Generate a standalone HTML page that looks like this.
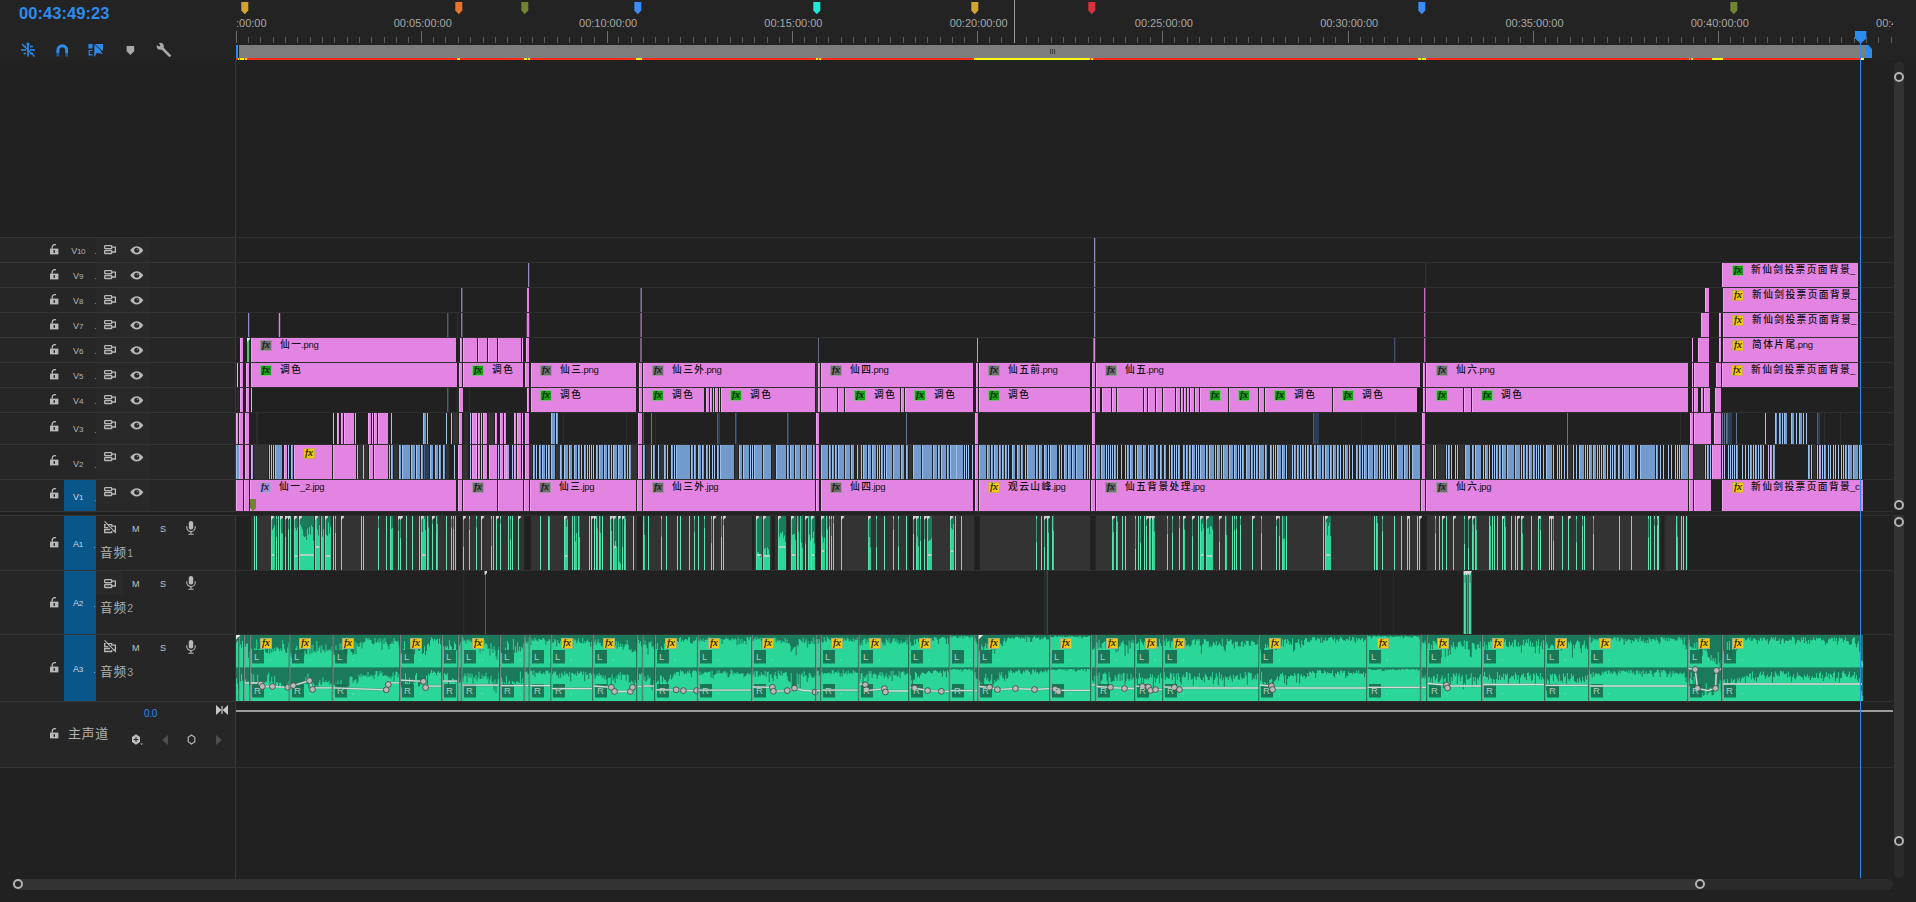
<!DOCTYPE html>
<html><head><meta charset="utf-8"><title>Timeline</title>
<style>
*{margin:0;padding:0;box-sizing:border-box}
html,body{width:1916px;height:902px;overflow:hidden;background:#212121}
body{font-family:"Liberation Sans","Noto Sans CJK SC",sans-serif;position:relative}
#w{position:absolute;left:0;top:0;width:1916px;height:902px;overflow:hidden;background:#212121}
#w div,#w span,#w svg{position:absolute}
.cl{font-size:9.7px;font-weight:500;color:#101010;letter-spacing:1.45px;white-space:nowrap;line-height:12px;overflow:hidden;height:13px}
#w .cl i{font-style:normal;font-size:9.5px;letter-spacing:-.3px;position:static;margin-left:-1.2px}
.fx{width:12px;height:11px;border:1px solid;overflow:hidden}
#w .fx span{left:-1px;top:-2px;width:12px;font:italic 11px/10px "Liberation Serif",serif;color:#0c0c0c;text-align:center;-webkit-text-stroke:.12px #0c0c0c}
.rl{font-size:11px;color:#a7a7a7;top:17px;line-height:12px;white-space:nowrap}
.hl{font-size:9px;color:#b9b9b9;white-space:nowrap;line-height:10px;letter-spacing:-.2px;text-align:center;width:24px}
.hn{font-size:12.6px;color:#b4b4b4;white-space:nowrap;line-height:14px;letter-spacing:1px}
.ms{font-size:9px;color:#c4c4c4;line-height:10px}
.lr{font-size:9.5px;line-height:10px;color:#a9cdbd}
</style></head><body><div id="w">
<div style="left:0px;top:0px;width:1916px;height:60px;background:#232323;"></div>
<div style="left:0px;top:237px;width:236px;height:531px;background:#262626;"></div>
<div style="left:96px;top:238px;width:54px;height:273px;background:#292929;"></div>
<div style="left:235px;top:60px;width:1px;height:819px;background:#383838;"></div>
<div style="left:0px;top:237px;width:1893px;height:1px;background:#2f2f2f;"></div>
<div style="left:0px;top:262px;width:1893px;height:1px;background:#2f2f2f;"></div>
<div style="left:0px;top:287px;width:1893px;height:1px;background:#2f2f2f;"></div>
<div style="left:0px;top:312px;width:1893px;height:1px;background:#2f2f2f;"></div>
<div style="left:0px;top:337px;width:1893px;height:1px;background:#2f2f2f;"></div>
<div style="left:0px;top:362px;width:1893px;height:1px;background:#2f2f2f;"></div>
<div style="left:0px;top:387px;width:1893px;height:1px;background:#2f2f2f;"></div>
<div style="left:0px;top:412px;width:1893px;height:1px;background:#2f2f2f;"></div>
<div style="left:0px;top:444px;width:1893px;height:1px;background:#2f2f2f;"></div>
<div style="left:0px;top:479px;width:1893px;height:1px;background:#2f2f2f;"></div>
<div style="left:0px;top:511px;width:1893px;height:1px;background:#2f2f2f;"></div>
<div style="left:0px;top:570px;width:1893px;height:1px;background:#2f2f2f;"></div>
<div style="left:0px;top:634px;width:1893px;height:1px;background:#2f2f2f;"></div>
<div style="left:0px;top:701px;width:1893px;height:1px;background:#2f2f2f;"></div>
<div style="left:0px;top:767px;width:1893px;height:1px;background:#2f2f2f;"></div>
<div style="left:0px;top:515px;width:1905px;height:1px;background:#2f2f2f;"></div>
<div style="left:0px;top:512px;width:1893px;height:3px;background:#222222;"></div>
<div style="left:0px;top:237px;width:235px;height:1px;background:#353535;"></div>
<div style="left:0px;top:262px;width:235px;height:1px;background:#353535;"></div>
<div style="left:0px;top:287px;width:235px;height:1px;background:#353535;"></div>
<div style="left:0px;top:312px;width:235px;height:1px;background:#353535;"></div>
<div style="left:0px;top:337px;width:235px;height:1px;background:#353535;"></div>
<div style="left:0px;top:362px;width:235px;height:1px;background:#353535;"></div>
<div style="left:0px;top:387px;width:235px;height:1px;background:#353535;"></div>
<div style="left:0px;top:412px;width:235px;height:1px;background:#353535;"></div>
<div style="left:0px;top:444px;width:235px;height:1px;background:#353535;"></div>
<div style="left:0px;top:479px;width:235px;height:1px;background:#353535;"></div>
<div style="left:0px;top:511px;width:235px;height:1px;background:#353535;"></div>
<div style="left:0px;top:515px;width:235px;height:1px;background:#353535;"></div>
<div style="left:0px;top:570px;width:235px;height:1px;background:#353535;"></div>
<div style="left:0px;top:634px;width:235px;height:1px;background:#353535;"></div>
<div style="left:0px;top:701px;width:235px;height:1px;background:#353535;"></div>
<div style="left:0px;top:767px;width:235px;height:1px;background:#353535;"></div>
<div style="left:19px;top:4px;font-size:16.5px;font-weight:bold;color:#2d8ceb;line-height:18px;letter-spacing:.06px;white-space:nowrap">00:43:49:23</div>
<svg style="left:20px;top:42px" width="16" height="16" viewBox="0 0 16 16"><g stroke="#2d8ceb" stroke-width="1.6" fill="none"><path d="M8 1.5V14.5"/><path d="M1 8H6M10 8H15"/><path d="M3.5 4.5H6M10 4.5H13"/><path d="M3.5 11.5H6M10 11.5H13"/></g><circle cx="8" cy="2" r="1.6" fill="#2d8ceb"/><path d="M2 2L14.5 14.5" stroke="#2d8ceb" stroke-width="1.1"/></svg>
<svg style="left:55.6px;top:43.6px" width="12.6" height="13" viewBox="0 0 12.6 13"><path d="M1.9 9V6.1a4.4 4.4 0 0 1 8.8 0V9" fill="none" stroke="#2d8ceb" stroke-width="3"/><rect x=".4" y="9" width="3" height="3.4" fill="#1b5a96"/><rect x="9.2" y="9" width="3" height="3.4" fill="#1b5a96"/></svg>
<svg style="left:88px;top:43px" width="16" height="15" viewBox="0 0 16 15"><rect x=".5" y="1" width="4" height="4.5" fill="#2d8ceb"/><path d="M4.5 7.5H1.2V11.8H4.5" fill="none" stroke="#2d8ceb" stroke-width="1.2"/><path d="M6.5 1H15V7.5H12L15 11L9 9.8L6.2 14.2Z" fill="#2d8ceb"/><path d="M6.5 1L15 9" stroke="#232323" stroke-width="1"/></svg>
<svg style="left:126px;top:45px" width="9" height="11" viewBox="0 0 9 11"><path d="M.6 1H8.2V6.2L4.4 10L.6 6.2Z" fill="#a8a8a8"/></svg>
<svg style="left:156px;top:42px" width="16" height="16" viewBox="0 0 16 16"><path d="M5.2 5.2L13.6 13.6" stroke="#a8a8a8" stroke-width="2.7" stroke-linecap="round"/><circle cx="4.3" cy="4.3" r="3.5" fill="#a8a8a8"/><path d="M4.2 4.4L.2 2.6L2.4 -.4Z" fill="#232323"/><path d="M3.6 3.7L1 1.2" stroke="#232323" stroke-width="2.2"/></svg>
<div style="left:236px;top:0;width:1657px;height:60px;overflow:hidden">
<div class="rl" style="left:-28.0px;width:59px;text-align:center">00:00:00:00</div>
<div style="left:0px;top:31px;width:1px;height:12px;background:#6e6e6e"></div>
<div style="left:12px;top:37px;width:1px;height:6px;background:#5c5c5c"></div>
<div style="left:24px;top:37px;width:1px;height:6px;background:#5c5c5c"></div>
<div style="left:37px;top:37px;width:1px;height:6px;background:#5c5c5c"></div>
<div style="left:49px;top:37px;width:1px;height:6px;background:#5c5c5c"></div>
<div style="left:61px;top:37px;width:1px;height:6px;background:#5c5c5c"></div>
<div style="left:74px;top:37px;width:1px;height:6px;background:#5c5c5c"></div>
<div style="left:86px;top:37px;width:1px;height:6px;background:#5c5c5c"></div>
<div style="left:98px;top:37px;width:1px;height:6px;background:#5c5c5c"></div>
<div style="left:111px;top:37px;width:1px;height:6px;background:#5c5c5c"></div>
<div style="left:123px;top:37px;width:1px;height:6px;background:#5c5c5c"></div>
<div style="left:135px;top:37px;width:1px;height:6px;background:#5c5c5c"></div>
<div style="left:148px;top:37px;width:1px;height:6px;background:#5c5c5c"></div>
<div style="left:160px;top:37px;width:1px;height:6px;background:#5c5c5c"></div>
<div style="left:172px;top:37px;width:1px;height:6px;background:#5c5c5c"></div>
<div class="rl" style="left:157.3px;width:59px;text-align:center">00:05:00:00</div>
<div style="left:185px;top:31px;width:1px;height:12px;background:#6e6e6e"></div>
<div style="left:197px;top:37px;width:1px;height:6px;background:#5c5c5c"></div>
<div style="left:209px;top:37px;width:1px;height:6px;background:#5c5c5c"></div>
<div style="left:222px;top:37px;width:1px;height:6px;background:#5c5c5c"></div>
<div style="left:234px;top:37px;width:1px;height:6px;background:#5c5c5c"></div>
<div style="left:247px;top:37px;width:1px;height:6px;background:#5c5c5c"></div>
<div style="left:259px;top:37px;width:1px;height:6px;background:#5c5c5c"></div>
<div style="left:271px;top:37px;width:1px;height:6px;background:#5c5c5c"></div>
<div style="left:284px;top:37px;width:1px;height:6px;background:#5c5c5c"></div>
<div style="left:296px;top:37px;width:1px;height:6px;background:#5c5c5c"></div>
<div style="left:308px;top:37px;width:1px;height:6px;background:#5c5c5c"></div>
<div style="left:321px;top:37px;width:1px;height:6px;background:#5c5c5c"></div>
<div style="left:333px;top:37px;width:1px;height:6px;background:#5c5c5c"></div>
<div style="left:345px;top:37px;width:1px;height:6px;background:#5c5c5c"></div>
<div style="left:358px;top:37px;width:1px;height:6px;background:#5c5c5c"></div>
<div class="rl" style="left:342.6px;width:59px;text-align:center">00:10:00:00</div>
<div style="left:371px;top:31px;width:1px;height:12px;background:#6e6e6e"></div>
<div style="left:382px;top:37px;width:1px;height:6px;background:#5c5c5c"></div>
<div style="left:395px;top:37px;width:1px;height:6px;background:#5c5c5c"></div>
<div style="left:407px;top:37px;width:1px;height:6px;background:#5c5c5c"></div>
<div style="left:419px;top:37px;width:1px;height:6px;background:#5c5c5c"></div>
<div style="left:432px;top:37px;width:1px;height:6px;background:#5c5c5c"></div>
<div style="left:444px;top:37px;width:1px;height:6px;background:#5c5c5c"></div>
<div style="left:457px;top:37px;width:1px;height:6px;background:#5c5c5c"></div>
<div style="left:469px;top:37px;width:1px;height:6px;background:#5c5c5c"></div>
<div style="left:481px;top:37px;width:1px;height:6px;background:#5c5c5c"></div>
<div style="left:494px;top:37px;width:1px;height:6px;background:#5c5c5c"></div>
<div style="left:506px;top:37px;width:1px;height:6px;background:#5c5c5c"></div>
<div style="left:518px;top:37px;width:1px;height:6px;background:#5c5c5c"></div>
<div style="left:531px;top:37px;width:1px;height:6px;background:#5c5c5c"></div>
<div style="left:543px;top:37px;width:1px;height:6px;background:#5c5c5c"></div>
<div class="rl" style="left:527.9px;width:59px;text-align:center">00:15:00:00</div>
<div style="left:556px;top:31px;width:1px;height:12px;background:#6e6e6e"></div>
<div style="left:568px;top:37px;width:1px;height:6px;background:#5c5c5c"></div>
<div style="left:580px;top:37px;width:1px;height:6px;background:#5c5c5c"></div>
<div style="left:592px;top:37px;width:1px;height:6px;background:#5c5c5c"></div>
<div style="left:605px;top:37px;width:1px;height:6px;background:#5c5c5c"></div>
<div style="left:617px;top:37px;width:1px;height:6px;background:#5c5c5c"></div>
<div style="left:629px;top:37px;width:1px;height:6px;background:#5c5c5c"></div>
<div style="left:642px;top:37px;width:1px;height:6px;background:#5c5c5c"></div>
<div style="left:654px;top:37px;width:1px;height:6px;background:#5c5c5c"></div>
<div style="left:667px;top:37px;width:1px;height:6px;background:#5c5c5c"></div>
<div style="left:679px;top:37px;width:1px;height:6px;background:#5c5c5c"></div>
<div style="left:691px;top:37px;width:1px;height:6px;background:#5c5c5c"></div>
<div style="left:704px;top:37px;width:1px;height:6px;background:#5c5c5c"></div>
<div style="left:716px;top:37px;width:1px;height:6px;background:#5c5c5c"></div>
<div style="left:728px;top:37px;width:1px;height:6px;background:#5c5c5c"></div>
<div class="rl" style="left:713.2px;width:59px;text-align:center">00:20:00:00</div>
<div style="left:741px;top:31px;width:1px;height:12px;background:#6e6e6e"></div>
<div style="left:753px;top:37px;width:1px;height:6px;background:#5c5c5c"></div>
<div style="left:765px;top:37px;width:1px;height:6px;background:#5c5c5c"></div>
<div style="left:778px;top:37px;width:1px;height:6px;background:#5c5c5c"></div>
<div style="left:790px;top:37px;width:1px;height:6px;background:#5c5c5c"></div>
<div style="left:802px;top:37px;width:1px;height:6px;background:#5c5c5c"></div>
<div style="left:815px;top:37px;width:1px;height:6px;background:#5c5c5c"></div>
<div style="left:827px;top:37px;width:1px;height:6px;background:#5c5c5c"></div>
<div style="left:839px;top:37px;width:1px;height:6px;background:#5c5c5c"></div>
<div style="left:852px;top:37px;width:1px;height:6px;background:#5c5c5c"></div>
<div style="left:864px;top:37px;width:1px;height:6px;background:#5c5c5c"></div>
<div style="left:877px;top:37px;width:1px;height:6px;background:#5c5c5c"></div>
<div style="left:889px;top:37px;width:1px;height:6px;background:#5c5c5c"></div>
<div style="left:901px;top:37px;width:1px;height:6px;background:#5c5c5c"></div>
<div style="left:914px;top:37px;width:1px;height:6px;background:#5c5c5c"></div>
<div class="rl" style="left:898.4px;width:59px;text-align:center">00:25:00:00</div>
<div style="left:926px;top:31px;width:1px;height:12px;background:#6e6e6e"></div>
<div style="left:938px;top:37px;width:1px;height:6px;background:#5c5c5c"></div>
<div style="left:951px;top:37px;width:1px;height:6px;background:#5c5c5c"></div>
<div style="left:963px;top:37px;width:1px;height:6px;background:#5c5c5c"></div>
<div style="left:975px;top:37px;width:1px;height:6px;background:#5c5c5c"></div>
<div style="left:988px;top:37px;width:1px;height:6px;background:#5c5c5c"></div>
<div style="left:1000px;top:37px;width:1px;height:6px;background:#5c5c5c"></div>
<div style="left:1012px;top:37px;width:1px;height:6px;background:#5c5c5c"></div>
<div style="left:1025px;top:37px;width:1px;height:6px;background:#5c5c5c"></div>
<div style="left:1037px;top:37px;width:1px;height:6px;background:#5c5c5c"></div>
<div style="left:1049px;top:37px;width:1px;height:6px;background:#5c5c5c"></div>
<div style="left:1062px;top:37px;width:1px;height:6px;background:#5c5c5c"></div>
<div style="left:1074px;top:37px;width:1px;height:6px;background:#5c5c5c"></div>
<div style="left:1087px;top:37px;width:1px;height:6px;background:#5c5c5c"></div>
<div style="left:1099px;top:37px;width:1px;height:6px;background:#5c5c5c"></div>
<div class="rl" style="left:1083.7px;width:59px;text-align:center">00:30:00:00</div>
<div style="left:1112px;top:31px;width:1px;height:12px;background:#6e6e6e"></div>
<div style="left:1124px;top:37px;width:1px;height:6px;background:#5c5c5c"></div>
<div style="left:1136px;top:37px;width:1px;height:6px;background:#5c5c5c"></div>
<div style="left:1148px;top:37px;width:1px;height:6px;background:#5c5c5c"></div>
<div style="left:1161px;top:37px;width:1px;height:6px;background:#5c5c5c"></div>
<div style="left:1173px;top:37px;width:1px;height:6px;background:#5c5c5c"></div>
<div style="left:1185px;top:37px;width:1px;height:6px;background:#5c5c5c"></div>
<div style="left:1198px;top:37px;width:1px;height:6px;background:#5c5c5c"></div>
<div style="left:1210px;top:37px;width:1px;height:6px;background:#5c5c5c"></div>
<div style="left:1222px;top:37px;width:1px;height:6px;background:#5c5c5c"></div>
<div style="left:1235px;top:37px;width:1px;height:6px;background:#5c5c5c"></div>
<div style="left:1247px;top:37px;width:1px;height:6px;background:#5c5c5c"></div>
<div style="left:1259px;top:37px;width:1px;height:6px;background:#5c5c5c"></div>
<div style="left:1272px;top:37px;width:1px;height:6px;background:#5c5c5c"></div>
<div style="left:1284px;top:37px;width:1px;height:6px;background:#5c5c5c"></div>
<div class="rl" style="left:1269.0px;width:59px;text-align:center">00:35:00:00</div>
<div style="left:1297px;top:31px;width:1px;height:12px;background:#6e6e6e"></div>
<div style="left:1309px;top:37px;width:1px;height:6px;background:#5c5c5c"></div>
<div style="left:1321px;top:37px;width:1px;height:6px;background:#5c5c5c"></div>
<div style="left:1334px;top:37px;width:1px;height:6px;background:#5c5c5c"></div>
<div style="left:1346px;top:37px;width:1px;height:6px;background:#5c5c5c"></div>
<div style="left:1358px;top:37px;width:1px;height:6px;background:#5c5c5c"></div>
<div style="left:1371px;top:37px;width:1px;height:6px;background:#5c5c5c"></div>
<div style="left:1383px;top:37px;width:1px;height:6px;background:#5c5c5c"></div>
<div style="left:1395px;top:37px;width:1px;height:6px;background:#5c5c5c"></div>
<div style="left:1408px;top:37px;width:1px;height:6px;background:#5c5c5c"></div>
<div style="left:1420px;top:37px;width:1px;height:6px;background:#5c5c5c"></div>
<div style="left:1432px;top:37px;width:1px;height:6px;background:#5c5c5c"></div>
<div style="left:1445px;top:37px;width:1px;height:6px;background:#5c5c5c"></div>
<div style="left:1457px;top:37px;width:1px;height:6px;background:#5c5c5c"></div>
<div style="left:1469px;top:37px;width:1px;height:6px;background:#5c5c5c"></div>
<div class="rl" style="left:1454.3px;width:59px;text-align:center">00:40:00:00</div>
<div style="left:1482px;top:31px;width:1px;height:12px;background:#6e6e6e"></div>
<div style="left:1494px;top:37px;width:1px;height:6px;background:#5c5c5c"></div>
<div style="left:1507px;top:37px;width:1px;height:6px;background:#5c5c5c"></div>
<div style="left:1519px;top:37px;width:1px;height:6px;background:#5c5c5c"></div>
<div style="left:1531px;top:37px;width:1px;height:6px;background:#5c5c5c"></div>
<div style="left:1544px;top:37px;width:1px;height:6px;background:#5c5c5c"></div>
<div style="left:1556px;top:37px;width:1px;height:6px;background:#5c5c5c"></div>
<div style="left:1568px;top:37px;width:1px;height:6px;background:#5c5c5c"></div>
<div style="left:1581px;top:37px;width:1px;height:6px;background:#5c5c5c"></div>
<div style="left:1593px;top:37px;width:1px;height:6px;background:#5c5c5c"></div>
<div style="left:1605px;top:37px;width:1px;height:6px;background:#5c5c5c"></div>
<div style="left:1618px;top:37px;width:1px;height:6px;background:#5c5c5c"></div>
<div style="left:1630px;top:37px;width:1px;height:6px;background:#5c5c5c"></div>
<div style="left:1642px;top:37px;width:1px;height:6px;background:#5c5c5c"></div>
<div style="left:1655px;top:37px;width:1px;height:6px;background:#5c5c5c"></div>
<div class="rl" style="left:1639.6px;width:59px;text-align:center">00:45:00:00</div>
<div style="left:1668px;top:31px;width:1px;height:12px;background:#6e6e6e"></div>
<div style="left:1679px;top:37px;width:1px;height:6px;background:#5c5c5c"></div>
<div style="left:1692px;top:37px;width:1px;height:6px;background:#5c5c5c"></div>
<div style="left:1704px;top:37px;width:1px;height:6px;background:#5c5c5c"></div>
<div style="left:1717px;top:37px;width:1px;height:6px;background:#5c5c5c"></div>
<div style="left:1729px;top:37px;width:1px;height:6px;background:#5c5c5c"></div>
<div style="left:1741px;top:37px;width:1px;height:6px;background:#5c5c5c"></div>
<div style="left:1754px;top:37px;width:1px;height:6px;background:#5c5c5c"></div>
<div style="left:1766px;top:37px;width:1px;height:6px;background:#5c5c5c"></div>
<div style="left:1778px;top:37px;width:1px;height:6px;background:#5c5c5c"></div>
<div style="left:1791px;top:37px;width:1px;height:6px;background:#5c5c5c"></div>
<div style="left:1803px;top:37px;width:1px;height:6px;background:#5c5c5c"></div>
<div style="left:1815px;top:37px;width:1px;height:6px;background:#5c5c5c"></div>
<div style="left:1828px;top:37px;width:1px;height:6px;background:#5c5c5c"></div>
<div style="left:1840px;top:37px;width:1px;height:6px;background:#5c5c5c"></div>
</div>
<svg style="left:241px;top:2px" width="8" height="13" viewBox="0 0 8 13"><path d="M.3 0H7.3V8.6L3.8 12.3L.3 8.6Z" fill="#d4a32e"/></svg>
<svg style="left:455px;top:2px" width="8" height="13" viewBox="0 0 8 13"><path d="M.3 0H7.3V8.6L3.8 12.3L.3 8.6Z" fill="#e8732a"/></svg>
<svg style="left:521px;top:2px" width="8" height="13" viewBox="0 0 8 13"><path d="M.3 0H7.3V8.6L3.8 12.3L.3 8.6Z" fill="#71842f"/></svg>
<svg style="left:634px;top:2px" width="8" height="13" viewBox="0 0 8 13"><path d="M.3 0H7.3V8.6L3.8 12.3L.3 8.6Z" fill="#3d8cf5"/></svg>
<svg style="left:813px;top:2px" width="8" height="13" viewBox="0 0 8 13"><path d="M.3 0H7.3V8.6L3.8 12.3L.3 8.6Z" fill="#1ee8d6"/></svg>
<svg style="left:971px;top:2px" width="8" height="13" viewBox="0 0 8 13"><path d="M.3 0H7.3V8.6L3.8 12.3L.3 8.6Z" fill="#d4a32e"/></svg>
<svg style="left:1088px;top:2px" width="8" height="13" viewBox="0 0 8 13"><path d="M.3 0H7.3V8.6L3.8 12.3L.3 8.6Z" fill="#d9303e"/></svg>
<svg style="left:1418px;top:2px" width="8" height="13" viewBox="0 0 8 13"><path d="M.3 0H7.3V8.6L3.8 12.3L.3 8.6Z" fill="#3d8cf5"/></svg>
<svg style="left:1730px;top:2px" width="8" height="13" viewBox="0 0 8 13"><path d="M.3 0H7.3V8.6L3.8 12.3L.3 8.6Z" fill="#71842f"/></svg>
<div style="left:1014px;top:0px;width:1px;height:43px;background:#9a9a9a;"></div>
<div style="left:239px;top:45px;width:1627px;height:13px;background:#7d7d7d;"></div>
<div style="left:238px;top:45px;width:1px;height:13px;background:#1c1c1c;"></div>
<div style="left:236px;top:45px;width:2px;height:13px;background:#2d8ceb;"></div>
<svg style="left:1866px;top:45px" width="7" height="13" viewBox="0 0 7 13"><path d="M0 0H2.5L6 4V13H0Z" fill="#2d8ceb"/></svg>
<div style="left:1050px;top:49px;width:1px;height:5px;background:#3a3a3a;"></div>
<div style="left:1052px;top:49px;width:1px;height:5px;background:#3a3a3a;"></div>
<div style="left:1054px;top:49px;width:1px;height:5px;background:#3a3a3a;"></div>
<div style="left:236px;top:58px;width:1628px;height:2px;background:#fb2b17;"></div>
<div style="left:238px;top:58px;width:1px;height:2px;background:#fbfb10;"></div>
<div style="left:240px;top:58px;width:4px;height:2px;background:#fbfb10;"></div>
<div style="left:245px;top:58px;width:2px;height:2px;background:#fbfb10;"></div>
<div style="left:457px;top:58px;width:3px;height:2px;background:#fbfb10;"></div>
<div style="left:524px;top:58px;width:3px;height:2px;background:#fbfb10;"></div>
<div style="left:528px;top:58px;width:2px;height:2px;background:#fbfb10;"></div>
<div style="left:636px;top:58px;width:6px;height:2px;background:#fbfb10;"></div>
<div style="left:816px;top:58px;width:2px;height:2px;background:#fbfb10;"></div>
<div style="left:819px;top:58px;width:2px;height:2px;background:#fbfb10;"></div>
<div style="left:974px;top:58px;width:116px;height:2px;background:#fbfb10;"></div>
<div style="left:1091px;top:58px;width:2px;height:2px;background:#fbfb10;"></div>
<div style="left:1418px;top:58px;width:3px;height:2px;background:#fbfb10;"></div>
<div style="left:1422px;top:58px;width:4px;height:2px;background:#fbfb10;"></div>
<div style="left:1689px;top:58px;width:1px;height:2px;background:#fbfb10;"></div>
<div style="left:1691px;top:58px;width:2px;height:2px;background:#fbfb10;"></div>
<div style="left:1712px;top:58px;width:11px;height:2px;background:#fbfb10;"></div>
<div style="left:1861px;top:58px;width:3px;height:2px;background:#fbfb10;"></div>
<div style="left:64px;top:480px;width:32px;height:31px;background:#08568a;"></div>
<div style="left:64px;top:516px;width:32px;height:54px;background:#08568a;"></div>
<div style="left:64px;top:571px;width:32px;height:63px;background:#08568a;"></div>
<div style="left:64px;top:635px;width:32px;height:66px;background:#08568a;"></div>
<svg style="left:50px;top:244px" width="9" height="11" viewBox="0 0 9 11"><path d="M0 4.6H8.4V10.4H0Z" fill="#b9b9b9"/><path d="M2.2 4.8V3.2C2.2 1 4.6 .1 6 .9" fill="none" stroke="#b9b9b9" stroke-width="1.3"/><rect x="3.5" y="6.2" width="1.5" height="2.6" fill="#262626"/></svg>
<div class="hl" style="left:66px;top:246px;color:#b4b4b4"><span style="position:static;font-size:9px">V</span><span style="position:static;font-size:8px;letter-spacing:-.5px">10</span></div>
<svg style="left:104px;top:245px" width="13" height="10" viewBox="0 0 13 10"><g fill="none" stroke="#b9b9b9" stroke-width="1.3"><rect x=".7" y=".7" width="7" height="3" rx=".6"/><rect x=".7" y="5.5" width="7" height="3" rx=".6"/><path d="M7.7 2.2H11.4V7H7.7"/></g></svg>
<svg style="left:130px;top:246px" width="13.5" height="8.7" viewBox="0 0 14 9"><path d="M.2 4.5C2.3 1.4 4.6 .2 7 .2S11.7 1.4 13.8 4.5C11.7 7.6 9.4 8.8 7 8.8S2.3 7.6 .2 4.5Z" fill="#b9b9b9"/><circle cx="7" cy="4.3" r="2.6" fill="#262626"/><circle cx="7.8" cy="3.5" r=".8" fill="#8a8a8a"/></svg>
<div style="left:95px;top:253px;width:1px;height:1px;background:#4a7fb5;"></div>
<svg style="left:50px;top:269px" width="9" height="11" viewBox="0 0 9 11"><path d="M0 4.6H8.4V10.4H0Z" fill="#b9b9b9"/><path d="M2.2 4.8V3.2C2.2 1 4.6 .1 6 .9" fill="none" stroke="#b9b9b9" stroke-width="1.3"/><rect x="3.5" y="6.2" width="1.5" height="2.6" fill="#262626"/></svg>
<div class="hl" style="left:66px;top:271px;color:#b4b4b4"><span style="position:static;font-size:9px">V</span><span style="position:static;font-size:8px;letter-spacing:-.5px">9</span></div>
<svg style="left:104px;top:270px" width="13" height="10" viewBox="0 0 13 10"><g fill="none" stroke="#b9b9b9" stroke-width="1.3"><rect x=".7" y=".7" width="7" height="3" rx=".6"/><rect x=".7" y="5.5" width="7" height="3" rx=".6"/><path d="M7.7 2.2H11.4V7H7.7"/></g></svg>
<svg style="left:130px;top:271px" width="13.5" height="8.7" viewBox="0 0 14 9"><path d="M.2 4.5C2.3 1.4 4.6 .2 7 .2S11.7 1.4 13.8 4.5C11.7 7.6 9.4 8.8 7 8.8S2.3 7.6 .2 4.5Z" fill="#b9b9b9"/><circle cx="7" cy="4.3" r="2.6" fill="#262626"/><circle cx="7.8" cy="3.5" r=".8" fill="#8a8a8a"/></svg>
<div style="left:95px;top:278px;width:1px;height:1px;background:#4a7fb5;"></div>
<svg style="left:50px;top:294px" width="9" height="11" viewBox="0 0 9 11"><path d="M0 4.6H8.4V10.4H0Z" fill="#b9b9b9"/><path d="M2.2 4.8V3.2C2.2 1 4.6 .1 6 .9" fill="none" stroke="#b9b9b9" stroke-width="1.3"/><rect x="3.5" y="6.2" width="1.5" height="2.6" fill="#262626"/></svg>
<div class="hl" style="left:66px;top:296px;color:#b4b4b4"><span style="position:static;font-size:9px">V</span><span style="position:static;font-size:8px;letter-spacing:-.5px">8</span></div>
<svg style="left:104px;top:295px" width="13" height="10" viewBox="0 0 13 10"><g fill="none" stroke="#b9b9b9" stroke-width="1.3"><rect x=".7" y=".7" width="7" height="3" rx=".6"/><rect x=".7" y="5.5" width="7" height="3" rx=".6"/><path d="M7.7 2.2H11.4V7H7.7"/></g></svg>
<svg style="left:130px;top:296px" width="13.5" height="8.7" viewBox="0 0 14 9"><path d="M.2 4.5C2.3 1.4 4.6 .2 7 .2S11.7 1.4 13.8 4.5C11.7 7.6 9.4 8.8 7 8.8S2.3 7.6 .2 4.5Z" fill="#b9b9b9"/><circle cx="7" cy="4.3" r="2.6" fill="#262626"/><circle cx="7.8" cy="3.5" r=".8" fill="#8a8a8a"/></svg>
<div style="left:95px;top:303px;width:1px;height:1px;background:#4a7fb5;"></div>
<svg style="left:50px;top:319px" width="9" height="11" viewBox="0 0 9 11"><path d="M0 4.6H8.4V10.4H0Z" fill="#b9b9b9"/><path d="M2.2 4.8V3.2C2.2 1 4.6 .1 6 .9" fill="none" stroke="#b9b9b9" stroke-width="1.3"/><rect x="3.5" y="6.2" width="1.5" height="2.6" fill="#262626"/></svg>
<div class="hl" style="left:66px;top:321px;color:#b4b4b4"><span style="position:static;font-size:9px">V</span><span style="position:static;font-size:8px;letter-spacing:-.5px">7</span></div>
<svg style="left:104px;top:320px" width="13" height="10" viewBox="0 0 13 10"><g fill="none" stroke="#b9b9b9" stroke-width="1.3"><rect x=".7" y=".7" width="7" height="3" rx=".6"/><rect x=".7" y="5.5" width="7" height="3" rx=".6"/><path d="M7.7 2.2H11.4V7H7.7"/></g></svg>
<svg style="left:130px;top:321px" width="13.5" height="8.7" viewBox="0 0 14 9"><path d="M.2 4.5C2.3 1.4 4.6 .2 7 .2S11.7 1.4 13.8 4.5C11.7 7.6 9.4 8.8 7 8.8S2.3 7.6 .2 4.5Z" fill="#b9b9b9"/><circle cx="7" cy="4.3" r="2.6" fill="#262626"/><circle cx="7.8" cy="3.5" r=".8" fill="#8a8a8a"/></svg>
<div style="left:95px;top:328px;width:1px;height:1px;background:#4a7fb5;"></div>
<svg style="left:50px;top:344px" width="9" height="11" viewBox="0 0 9 11"><path d="M0 4.6H8.4V10.4H0Z" fill="#b9b9b9"/><path d="M2.2 4.8V3.2C2.2 1 4.6 .1 6 .9" fill="none" stroke="#b9b9b9" stroke-width="1.3"/><rect x="3.5" y="6.2" width="1.5" height="2.6" fill="#262626"/></svg>
<div class="hl" style="left:66px;top:346px;color:#b4b4b4"><span style="position:static;font-size:9px">V</span><span style="position:static;font-size:8px;letter-spacing:-.5px">6</span></div>
<svg style="left:104px;top:345px" width="13" height="10" viewBox="0 0 13 10"><g fill="none" stroke="#b9b9b9" stroke-width="1.3"><rect x=".7" y=".7" width="7" height="3" rx=".6"/><rect x=".7" y="5.5" width="7" height="3" rx=".6"/><path d="M7.7 2.2H11.4V7H7.7"/></g></svg>
<svg style="left:130px;top:346px" width="13.5" height="8.7" viewBox="0 0 14 9"><path d="M.2 4.5C2.3 1.4 4.6 .2 7 .2S11.7 1.4 13.8 4.5C11.7 7.6 9.4 8.8 7 8.8S2.3 7.6 .2 4.5Z" fill="#b9b9b9"/><circle cx="7" cy="4.3" r="2.6" fill="#262626"/><circle cx="7.8" cy="3.5" r=".8" fill="#8a8a8a"/></svg>
<div style="left:95px;top:353px;width:1px;height:1px;background:#4a7fb5;"></div>
<svg style="left:50px;top:369px" width="9" height="11" viewBox="0 0 9 11"><path d="M0 4.6H8.4V10.4H0Z" fill="#b9b9b9"/><path d="M2.2 4.8V3.2C2.2 1 4.6 .1 6 .9" fill="none" stroke="#b9b9b9" stroke-width="1.3"/><rect x="3.5" y="6.2" width="1.5" height="2.6" fill="#262626"/></svg>
<div class="hl" style="left:66px;top:371px;color:#b4b4b4"><span style="position:static;font-size:9px">V</span><span style="position:static;font-size:8px;letter-spacing:-.5px">5</span></div>
<svg style="left:104px;top:370px" width="13" height="10" viewBox="0 0 13 10"><g fill="none" stroke="#b9b9b9" stroke-width="1.3"><rect x=".7" y=".7" width="7" height="3" rx=".6"/><rect x=".7" y="5.5" width="7" height="3" rx=".6"/><path d="M7.7 2.2H11.4V7H7.7"/></g></svg>
<svg style="left:130px;top:371px" width="13.5" height="8.7" viewBox="0 0 14 9"><path d="M.2 4.5C2.3 1.4 4.6 .2 7 .2S11.7 1.4 13.8 4.5C11.7 7.6 9.4 8.8 7 8.8S2.3 7.6 .2 4.5Z" fill="#b9b9b9"/><circle cx="7" cy="4.3" r="2.6" fill="#262626"/><circle cx="7.8" cy="3.5" r=".8" fill="#8a8a8a"/></svg>
<div style="left:95px;top:378px;width:1px;height:1px;background:#4a7fb5;"></div>
<svg style="left:50px;top:394px" width="9" height="11" viewBox="0 0 9 11"><path d="M0 4.6H8.4V10.4H0Z" fill="#b9b9b9"/><path d="M2.2 4.8V3.2C2.2 1 4.6 .1 6 .9" fill="none" stroke="#b9b9b9" stroke-width="1.3"/><rect x="3.5" y="6.2" width="1.5" height="2.6" fill="#262626"/></svg>
<div class="hl" style="left:66px;top:396px;color:#b4b4b4"><span style="position:static;font-size:9px">V</span><span style="position:static;font-size:8px;letter-spacing:-.5px">4</span></div>
<svg style="left:104px;top:395px" width="13" height="10" viewBox="0 0 13 10"><g fill="none" stroke="#b9b9b9" stroke-width="1.3"><rect x=".7" y=".7" width="7" height="3" rx=".6"/><rect x=".7" y="5.5" width="7" height="3" rx=".6"/><path d="M7.7 2.2H11.4V7H7.7"/></g></svg>
<svg style="left:130px;top:396px" width="13.5" height="8.7" viewBox="0 0 14 9"><path d="M.2 4.5C2.3 1.4 4.6 .2 7 .2S11.7 1.4 13.8 4.5C11.7 7.6 9.4 8.8 7 8.8S2.3 7.6 .2 4.5Z" fill="#b9b9b9"/><circle cx="7" cy="4.3" r="2.6" fill="#262626"/><circle cx="7.8" cy="3.5" r=".8" fill="#8a8a8a"/></svg>
<div style="left:95px;top:403px;width:1px;height:1px;background:#4a7fb5;"></div>
<svg style="left:50px;top:421px" width="9" height="11" viewBox="0 0 9 11"><path d="M0 4.6H8.4V10.4H0Z" fill="#b9b9b9"/><path d="M2.2 4.8V3.2C2.2 1 4.6 .1 6 .9" fill="none" stroke="#b9b9b9" stroke-width="1.3"/><rect x="3.5" y="6.2" width="1.5" height="2.6" fill="#262626"/></svg>
<div class="hl" style="left:66px;top:424px;color:#b4b4b4"><span style="position:static;font-size:9px">V</span><span style="position:static;font-size:8px;letter-spacing:-.5px">3</span></div>
<svg style="left:104px;top:420px" width="13" height="10" viewBox="0 0 13 10"><g fill="none" stroke="#b9b9b9" stroke-width="1.3"><rect x=".7" y=".7" width="7" height="3" rx=".6"/><rect x=".7" y="5.5" width="7" height="3" rx=".6"/><path d="M7.7 2.2H11.4V7H7.7"/></g></svg>
<svg style="left:130px;top:421px" width="13.5" height="8.7" viewBox="0 0 14 9"><path d="M.2 4.5C2.3 1.4 4.6 .2 7 .2S11.7 1.4 13.8 4.5C11.7 7.6 9.4 8.8 7 8.8S2.3 7.6 .2 4.5Z" fill="#b9b9b9"/><circle cx="7" cy="4.3" r="2.6" fill="#262626"/><circle cx="7.8" cy="3.5" r=".8" fill="#8a8a8a"/></svg>
<div style="left:95px;top:432px;width:1px;height:1px;background:#4a7fb5;"></div>
<svg style="left:50px;top:455px" width="9" height="11" viewBox="0 0 9 11"><path d="M0 4.6H8.4V10.4H0Z" fill="#b9b9b9"/><path d="M2.2 4.8V3.2C2.2 1 4.6 .1 6 .9" fill="none" stroke="#b9b9b9" stroke-width="1.3"/><rect x="3.5" y="6.2" width="1.5" height="2.6" fill="#262626"/></svg>
<div class="hl" style="left:66px;top:459px;color:#b4b4b4"><span style="position:static;font-size:9px">V</span><span style="position:static;font-size:8px;letter-spacing:-.5px">2</span></div>
<svg style="left:104px;top:452px" width="13" height="10" viewBox="0 0 13 10"><g fill="none" stroke="#b9b9b9" stroke-width="1.3"><rect x=".7" y=".7" width="7" height="3" rx=".6"/><rect x=".7" y="5.5" width="7" height="3" rx=".6"/><path d="M7.7 2.2H11.4V7H7.7"/></g></svg>
<svg style="left:130px;top:453px" width="13.5" height="8.7" viewBox="0 0 14 9"><path d="M.2 4.5C2.3 1.4 4.6 .2 7 .2S11.7 1.4 13.8 4.5C11.7 7.6 9.4 8.8 7 8.8S2.3 7.6 .2 4.5Z" fill="#b9b9b9"/><circle cx="7" cy="4.3" r="2.6" fill="#262626"/><circle cx="7.8" cy="3.5" r=".8" fill="#8a8a8a"/></svg>
<div style="left:95px;top:467px;width:1px;height:1px;background:#4a7fb5;"></div>
<svg style="left:50px;top:488px" width="9" height="11" viewBox="0 0 9 11"><path d="M0 4.6H8.4V10.4H0Z" fill="#b9b9b9"/><path d="M2.2 4.8V3.2C2.2 1 4.6 .1 6 .9" fill="none" stroke="#b9b9b9" stroke-width="1.3"/><rect x="3.5" y="6.2" width="1.5" height="2.6" fill="#262626"/></svg>
<div class="hl" style="left:66px;top:492px;color:#d0dae4"><span style="position:static;font-size:9px">V</span><span style="position:static;font-size:8px;letter-spacing:-.5px">1</span></div>
<svg style="left:104px;top:487px" width="13" height="10" viewBox="0 0 13 10"><g fill="none" stroke="#b9b9b9" stroke-width="1.3"><rect x=".7" y=".7" width="7" height="3" rx=".6"/><rect x=".7" y="5.5" width="7" height="3" rx=".6"/><path d="M7.7 2.2H11.4V7H7.7"/></g></svg>
<svg style="left:130px;top:488px" width="13.5" height="8.7" viewBox="0 0 14 9"><path d="M.2 4.5C2.3 1.4 4.6 .2 7 .2S11.7 1.4 13.8 4.5C11.7 7.6 9.4 8.8 7 8.8S2.3 7.6 .2 4.5Z" fill="#b9b9b9"/><circle cx="7" cy="4.3" r="2.6" fill="#262626"/><circle cx="7.8" cy="3.5" r=".8" fill="#8a8a8a"/></svg>
<div style="left:95px;top:500px;width:1px;height:1px;background:#4a7fb5;"></div>
<div style="left:96px;top:571px;width:27px;height:24px;background:#292929;"></div>
<svg style="left:50px;top:537px" width="9" height="11" viewBox="0 0 9 11"><path d="M0 4.6H8.4V10.4H0Z" fill="#b9b9b9"/><path d="M2.2 4.8V3.2C2.2 1 4.6 .1 6 .9" fill="none" stroke="#b9b9b9" stroke-width="1.3"/><rect x="3.5" y="6.2" width="1.5" height="2.6" fill="#262626"/></svg>
<div class="hl" style="left:66px;top:539px;color:#d0dae4"><span style="position:static;font-size:9px">A</span><span style="position:static;font-size:8px">1</span></div>
<div style="left:94px;top:547px;width:1px;height:1px;background:#6aa0d8;"></div>
<svg style="left:104px;top:521px" width="13" height="13" viewBox="0 -3 13 13"><g fill="none" stroke="#b9b9b9" stroke-width="1.3"><path d="M3.6 .7H7.7V2.2H11.4V7H9.6"/><path d="M1.8 .7H.7V3.7H4.2"/><path d="M7.7 7V8.5H.7V5.5H6"/></g><path d="M.6 -2.6L12 9.2" stroke="#b9b9b9" stroke-width="1.1"/></svg>
<div class="ms" style="left:132px;top:523.5px">M</div>
<div class="ms" style="left:160px;top:523.5px">S</div>
<svg style="left:186px;top:521px" width="10" height="14" viewBox="0 0 10 14"><rect x="2.8" y="0" width="4.4" height="8.6" rx="2.2" fill="#b9b9b9"/><path d="M.8 5.2V6.4A4.2 4.2 0 0 0 9.2 6.4V5.2" fill="none" stroke="#b9b9b9" stroke-width="1.1"/><path d="M5 10.6V13M2.4 13.2H7.6" stroke="#b9b9b9" stroke-width="1.1"/></svg>
<div class="hn" style="left:100px;top:545.5px">音频<span style="position:static;font-size:10.5px;letter-spacing:0;color:#a0a0a0">1</span></div>
<svg style="left:50px;top:597px" width="9" height="11" viewBox="0 0 9 11"><path d="M0 4.6H8.4V10.4H0Z" fill="#b9b9b9"/><path d="M2.2 4.8V3.2C2.2 1 4.6 .1 6 .9" fill="none" stroke="#b9b9b9" stroke-width="1.3"/><rect x="3.5" y="6.2" width="1.5" height="2.6" fill="#262626"/></svg>
<div class="hl" style="left:66px;top:598px;color:#d0dae4"><span style="position:static;font-size:9px">A</span><span style="position:static;font-size:8px">2</span></div>
<div style="left:94px;top:606px;width:1px;height:1px;background:#6aa0d8;"></div>
<svg style="left:104px;top:579px" width="13" height="10" viewBox="0 0 13 10"><g fill="none" stroke="#b9b9b9" stroke-width="1.3"><rect x=".7" y=".7" width="7" height="3" rx=".6"/><rect x=".7" y="5.5" width="7" height="3" rx=".6"/><path d="M7.7 2.2H11.4V7H7.7"/></g></svg>
<div class="ms" style="left:132px;top:578.5px">M</div>
<div class="ms" style="left:160px;top:578.5px">S</div>
<svg style="left:186px;top:576px" width="10" height="14" viewBox="0 0 10 14"><rect x="2.8" y="0" width="4.4" height="8.6" rx="2.2" fill="#b9b9b9"/><path d="M.8 5.2V6.4A4.2 4.2 0 0 0 9.2 6.4V5.2" fill="none" stroke="#b9b9b9" stroke-width="1.1"/><path d="M5 10.6V13M2.4 13.2H7.6" stroke="#b9b9b9" stroke-width="1.1"/></svg>
<div class="hn" style="left:100px;top:600.5px">音频<span style="position:static;font-size:10.5px;letter-spacing:0;color:#a0a0a0">2</span></div>
<svg style="left:50px;top:662px" width="9" height="11" viewBox="0 0 9 11"><path d="M0 4.6H8.4V10.4H0Z" fill="#b9b9b9"/><path d="M2.2 4.8V3.2C2.2 1 4.6 .1 6 .9" fill="none" stroke="#b9b9b9" stroke-width="1.3"/><rect x="3.5" y="6.2" width="1.5" height="2.6" fill="#262626"/></svg>
<div class="hl" style="left:66px;top:664px;color:#d0dae4"><span style="position:static;font-size:9px">A</span><span style="position:static;font-size:8px">3</span></div>
<div style="left:94px;top:672px;width:1px;height:1px;background:#6aa0d8;"></div>
<svg style="left:104px;top:640px" width="13" height="13" viewBox="0 -3 13 13"><g fill="none" stroke="#b9b9b9" stroke-width="1.3"><path d="M3.6 .7H7.7V2.2H11.4V7H9.6"/><path d="M1.8 .7H.7V3.7H4.2"/><path d="M7.7 7V8.5H.7V5.5H6"/></g><path d="M.6 -2.6L12 9.2" stroke="#b9b9b9" stroke-width="1.1"/></svg>
<div class="ms" style="left:132px;top:642.5px">M</div>
<div class="ms" style="left:160px;top:642.5px">S</div>
<svg style="left:186px;top:640px" width="10" height="14" viewBox="0 0 10 14"><rect x="2.8" y="0" width="4.4" height="8.6" rx="2.2" fill="#b9b9b9"/><path d="M.8 5.2V6.4A4.2 4.2 0 0 0 9.2 6.4V5.2" fill="none" stroke="#b9b9b9" stroke-width="1.1"/><path d="M5 10.6V13M2.4 13.2H7.6" stroke="#b9b9b9" stroke-width="1.1"/></svg>
<div class="hn" style="left:100px;top:664.5px">音频<span style="position:static;font-size:10.5px;letter-spacing:0;color:#a0a0a0">3</span></div>
<svg style="left:50px;top:728px" width="9" height="11" viewBox="0 0 9 11"><path d="M0 4.6H8.4V10.4H0Z" fill="#b9b9b9"/><path d="M2.2 4.8V3.2C2.2 1 4.6 .1 6 .9" fill="none" stroke="#b9b9b9" stroke-width="1.3"/><rect x="3.5" y="6.2" width="1.5" height="2.6" fill="#262626"/></svg>
<div class="hn" style="left:68px;top:727px;font-size:13px;letter-spacing:.6px">主声道</div>
<div style="left:144px;top:709px;font-size:10px;color:#2d8ceb;line-height:10px;letter-spacing:-.3px">0.0</div>
<svg style="left:216px;top:705px" width="12" height="10" viewBox="0 0 12 10"><path d="M0 0L5.4 5L0 10ZM12 0L6.6 5L12 10Z" fill="#c8c8c8"/><rect x="5.4" y="1" width="1.2" height="8" fill="#c8c8c8"/></svg>
<svg style="left:131px;top:734px" width="13" height="12" viewBox="0 0 13 12"><path d="M5 .3L9 3V8L5 10.7L1 8V3Z" fill="#c0c0c0"/><path d="M5 3V8M2.6 5.5H7.4" stroke="#262626" stroke-width="1.1"/><path d="M9.3 9.5H12L10.6 11Z" fill="#c0c0c0"/></svg>
<svg style="left:162px;top:735px" width="6" height="10" viewBox="0 0 6 10"><path d="M6 0V10L0 5Z" fill="#4f4f4f"/></svg>
<svg style="left:187px;top:734px" width="9" height="11" viewBox="0 0 9 11"><path d="M4.5 1L7.8 3.2V7.8L4.5 10L1.2 7.8V3.2Z" fill="none" stroke="#b4b4b4" stroke-width="1.2"/></svg>
<svg style="left:216px;top:735px" width="6" height="10" viewBox="0 0 6 10"><path d="M0 0V10L6 5Z" fill="#4f4f4f"/></svg>
<div style="left:236px;top:710px;width:1657px;height:2px;background:#9c9c9c;"></div>
<svg style="left:0;top:0" width="1916" height="902" viewBox="0 0 1916 902"><rect x="236" y="413" width="2" height="31" fill="#e384e3"/><rect x="236" y="413" width="0.9" height="31" fill="#f1a6f1"/><rect x="239" y="413" width="4" height="31" fill="#e384e3"/><rect x="239" y="413" width="0.9" height="31" fill="#f1a6f1"/><rect x="245" y="413" width="4" height="31" fill="#e384e3"/><rect x="245" y="413" width="0.9" height="31" fill="#f1a6f1"/><rect x="256" y="413" width="2" height="31" fill="#2c2c2c"/><rect x="333" y="413" width="1" height="31" fill="#cdb6f0"/><rect x="337" y="413" width="2" height="31" fill="#e384e3"/><rect x="337" y="413" width="0.9" height="31" fill="#f1a6f1"/><rect x="341" y="413" width="2" height="31" fill="#e384e3"/><rect x="341" y="413" width="0.9" height="31" fill="#f1a6f1"/><rect x="344" y="413" width="10" height="31" fill="#e384e3"/><rect x="344" y="413" width="0.9" height="31" fill="#f1a6f1"/><rect x="355" y="413" width="1" height="31" fill="#f1a6f1"/><rect x="368" y="413" width="3" height="31" fill="#e384e3"/><rect x="368" y="413" width="0.9" height="31" fill="#f1a6f1"/><rect x="372" y="413" width="1" height="31" fill="#f1a6f1"/><rect x="374" y="413" width="3" height="31" fill="#e384e3"/><rect x="374" y="413" width="0.9" height="31" fill="#f1a6f1"/><rect x="378" y="413" width="10" height="31" fill="#e384e3"/><rect x="378" y="413" width="0.9" height="31" fill="#f1a6f1"/><rect x="391" y="413" width="1" height="31" fill="#a3c5f0"/><rect x="423" y="413" width="3" height="31" fill="#729acc"/><rect x="423" y="413" width="0.9" height="31" fill="#a3c5f0"/><rect x="427" y="413" width="1" height="31" fill="#a3c5f0"/><rect x="446" y="413" width="1" height="31" fill="#a3c5f0"/><rect x="451" y="413" width="1" height="31" fill="#a3c5f0"/><rect x="453" y="413" width="5" height="31" fill="#333333"/><rect x="459" y="413" width="3" height="31" fill="#e384e3"/><rect x="459" y="413" width="0.9" height="31" fill="#f1a6f1"/><rect x="464" y="413" width="4" height="31" fill="#2c2c2c"/><rect x="470" y="413" width="1" height="31" fill="#a3c5f0"/><rect x="472" y="413" width="4" height="31" fill="#e384e3"/><rect x="472" y="413" width="0.9" height="31" fill="#f1a6f1"/><rect x="476" y="413" width="1" height="31" fill="#f1a6f1"/><rect x="478" y="413" width="2" height="31" fill="#e384e3"/><rect x="478" y="413" width="0.9" height="31" fill="#f1a6f1"/><rect x="481" y="413" width="1" height="31" fill="#f1a6f1"/><rect x="483" y="413" width="4" height="31" fill="#e384e3"/><rect x="483" y="413" width="0.9" height="31" fill="#f1a6f1"/><rect x="488" y="413" width="6" height="31" fill="#333333"/><rect x="495" y="413" width="2" height="31" fill="#e384e3"/><rect x="495" y="413" width="0.9" height="31" fill="#f1a6f1"/><rect x="500" y="413" width="3" height="31" fill="#e384e3"/><rect x="500" y="413" width="0.9" height="31" fill="#f1a6f1"/><rect x="504" y="413" width="2" height="31" fill="#e384e3"/><rect x="504" y="413" width="0.9" height="31" fill="#f1a6f1"/><rect x="514" y="413" width="2" height="31" fill="#e384e3"/><rect x="514" y="413" width="0.9" height="31" fill="#f1a6f1"/><rect x="517" y="413" width="4" height="31" fill="#e384e3"/><rect x="517" y="413" width="0.9" height="31" fill="#f1a6f1"/><rect x="522" y="413" width="1" height="31" fill="#f1a6f1"/><rect x="525" y="413" width="4" height="31" fill="#e384e3"/><rect x="525" y="413" width="0.9" height="31" fill="#f1a6f1"/><rect x="551" y="413" width="4" height="31" fill="#729acc"/><rect x="551" y="413" width="0.9" height="31" fill="#a3c5f0"/><rect x="556" y="413" width="2" height="31" fill="#729acc"/><rect x="556" y="413" width="0.9" height="31" fill="#a3c5f0"/><rect x="563" y="413" width="1" height="31" fill="#2c2c2c"/><rect x="626" y="413" width="1" height="31" fill="#2c2c2c"/><rect x="638" y="413" width="4" height="31" fill="#e384e3"/><rect x="638" y="413" width="0.9" height="31" fill="#f1a6f1"/><rect x="643" y="413" width="1" height="31" fill="#2c3e55"/><rect x="643" y="413" width="0.9" height="31" fill="#4a6484"/><rect x="651" y="413" width="1" height="31" fill="#66788f"/><rect x="655" y="413" width="1" height="31" fill="#2c2c2c"/><rect x="717" y="413" width="3" height="31" fill="#2c3e55"/><rect x="717" y="413" width="0.9" height="31" fill="#4a6484"/><rect x="735" y="413" width="2" height="31" fill="#2c3e55"/><rect x="735" y="413" width="0.9" height="31" fill="#4a6484"/><rect x="787" y="413" width="2" height="31" fill="#2c3e55"/><rect x="787" y="413" width="0.9" height="31" fill="#4a6484"/><rect x="816" y="413" width="3" height="31" fill="#e384e3"/><rect x="816" y="413" width="0.9" height="31" fill="#f1a6f1"/><rect x="906" y="413" width="1" height="31" fill="#66788f"/><rect x="975" y="413" width="3" height="31" fill="#e384e3"/><rect x="975" y="413" width="0.9" height="31" fill="#f1a6f1"/><rect x="1092" y="413" width="3" height="31" fill="#e384e3"/><rect x="1092" y="413" width="0.9" height="31" fill="#f1a6f1"/><rect x="1313" y="413" width="6" height="31" fill="#2c3e55"/><rect x="1313" y="413" width="0.9" height="31" fill="#4a6484"/><rect x="1361" y="413" width="1" height="31" fill="#2c2c2c"/><rect x="1395" y="413" width="1" height="31" fill="#2c2c2c"/><rect x="1422" y="413" width="3" height="31" fill="#e384e3"/><rect x="1422" y="413" width="0.9" height="31" fill="#f1a6f1"/><rect x="1567" y="413" width="1" height="31" fill="#66788f"/><rect x="1680" y="413" width="1" height="31" fill="#2c2c2c"/><rect x="1690" y="413" width="3" height="31" fill="#e384e3"/><rect x="1690" y="413" width="0.9" height="31" fill="#f1a6f1"/><rect x="1694" y="413" width="17" height="31" fill="#e384e3"/><rect x="1694" y="413" width="0.9" height="31" fill="#f1a6f1"/><rect x="1714" y="413" width="7" height="31" fill="#e384e3"/><rect x="1714" y="413" width="0.9" height="31" fill="#f1a6f1"/><rect x="1722" y="413" width="1" height="31" fill="#66788f"/><rect x="1724" y="413" width="1" height="31" fill="#66788f"/><rect x="1726" y="413" width="1" height="31" fill="#66788f"/><rect x="1727" y="413" width="5" height="31" fill="#2c3e55"/><rect x="1727" y="413" width="0.9" height="31" fill="#4a6484"/><rect x="1736" y="413" width="1" height="31" fill="#66788f"/><rect x="1765" y="413" width="1" height="31" fill="#a3c5f0"/><rect x="1775" y="413" width="2" height="31" fill="#729acc"/><rect x="1775" y="413" width="0.9" height="31" fill="#a3c5f0"/><rect x="1779" y="413" width="2" height="31" fill="#729acc"/><rect x="1779" y="413" width="0.9" height="31" fill="#a3c5f0"/><rect x="1782" y="413" width="1" height="31" fill="#a3c5f0"/><rect x="1784" y="413" width="3" height="31" fill="#729acc"/><rect x="1784" y="413" width="0.9" height="31" fill="#a3c5f0"/><rect x="1791" y="413" width="3" height="31" fill="#729acc"/><rect x="1791" y="413" width="0.9" height="31" fill="#a3c5f0"/><rect x="1796" y="413" width="1" height="31" fill="#a3c5f0"/><rect x="1799" y="413" width="3" height="31" fill="#729acc"/><rect x="1799" y="413" width="0.9" height="31" fill="#a3c5f0"/><rect x="1803" y="413" width="1" height="31" fill="#a3c5f0"/><rect x="1806" y="413" width="1" height="31" fill="#a3c5f0"/><rect x="1817" y="413" width="3" height="31" fill="#2c3e55"/><rect x="1817" y="413" width="0.9" height="31" fill="#4a6484"/><rect x="1824" y="413" width="1" height="31" fill="#2c2c2c"/><rect x="1840" y="413" width="1" height="31" fill="#2c2c2c"/><rect x="236" y="445" width="3" height="34" fill="#729acc"/><rect x="236" y="445" width="0.9" height="34" fill="#a3c5f0"/><rect x="239" y="445" width="4" height="34" fill="#e384e3"/><rect x="239" y="445" width="0.9" height="34" fill="#f1a6f1"/><rect x="245" y="445" width="4" height="34" fill="#e384e3"/><rect x="245" y="445" width="0.9" height="34" fill="#f1a6f1"/><rect x="251" y="445" width="2" height="34" fill="#b598e3"/><rect x="251" y="445" width="0.9" height="34" fill="#cdb6f0"/><rect x="254" y="445" width="14" height="34" fill="#333333"/><rect x="269" y="445" width="1" height="34" fill="#a3c5f0"/><rect x="271" y="445" width="1" height="34" fill="#a3c5f0"/><rect x="273" y="445" width="1" height="34" fill="#a3c5f0"/><rect x="275" y="445" width="7" height="34" fill="#729acc"/><rect x="275" y="445" width="0.9" height="34" fill="#a3c5f0"/><rect x="284" y="445" width="3" height="34" fill="#e384e3"/><rect x="284" y="445" width="0.9" height="34" fill="#f1a6f1"/><rect x="288" y="445" width="1" height="34" fill="#a3c5f0"/><rect x="291" y="445" width="2" height="34" fill="#729acc"/><rect x="291" y="445" width="0.9" height="34" fill="#a3c5f0"/><rect x="294" y="445" width="38" height="34" fill="#e384e3"/><rect x="294" y="445" width="0.9" height="34" fill="#f1a6f1"/><rect x="333" y="445" width="23" height="34" fill="#e384e3"/><rect x="333" y="445" width="0.9" height="34" fill="#f1a6f1"/><rect x="357" y="445" width="1" height="34" fill="#a3c5f0"/><rect x="358" y="445" width="5" height="34" fill="#333333"/><rect x="363" y="445" width="1" height="34" fill="#a3c5f0"/><rect x="364" y="445" width="4" height="34" fill="#333333"/><rect x="369" y="445" width="4" height="34" fill="#e384e3"/><rect x="369" y="445" width="0.9" height="34" fill="#f1a6f1"/><rect x="374" y="445" width="14" height="34" fill="#e384e3"/><rect x="374" y="445" width="0.9" height="34" fill="#f1a6f1"/><rect x="389" y="445" width="1" height="34" fill="#a3c5f0"/><rect x="391" y="445" width="2" height="34" fill="#729acc"/><rect x="391" y="445" width="0.9" height="34" fill="#a3c5f0"/><rect x="394" y="445" width="4" height="34" fill="#333333"/><rect x="399" y="445" width="2" height="34" fill="#729acc"/><rect x="399" y="445" width="0.9" height="34" fill="#a3c5f0"/><rect x="402" y="445" width="8" height="34" fill="#729acc"/><rect x="402" y="445" width="0.9" height="34" fill="#a3c5f0"/><rect x="411" y="445" width="4" height="34" fill="#729acc"/><rect x="411" y="445" width="0.9" height="34" fill="#a3c5f0"/><rect x="416" y="445" width="4" height="34" fill="#729acc"/><rect x="416" y="445" width="0.9" height="34" fill="#a3c5f0"/><rect x="421" y="445" width="2" height="34" fill="#729acc"/><rect x="421" y="445" width="0.9" height="34" fill="#a3c5f0"/><rect x="424" y="445" width="5" height="34" fill="#2c3e55"/><rect x="424" y="445" width="0.9" height="34" fill="#4a6484"/><rect x="430" y="445" width="3" height="34" fill="#729acc"/><rect x="430" y="445" width="0.9" height="34" fill="#a3c5f0"/><rect x="435" y="445" width="3" height="34" fill="#729acc"/><rect x="435" y="445" width="0.9" height="34" fill="#a3c5f0"/><rect x="439" y="445" width="2" height="34" fill="#729acc"/><rect x="439" y="445" width="0.9" height="34" fill="#a3c5f0"/><rect x="443" y="445" width="2" height="34" fill="#729acc"/><rect x="443" y="445" width="0.9" height="34" fill="#a3c5f0"/><rect x="446" y="445" width="3" height="34" fill="#333333"/><rect x="454" y="445" width="1" height="34" fill="#a3c5f0"/><rect x="458" y="445" width="4" height="34" fill="#e384e3"/><rect x="458" y="445" width="0.9" height="34" fill="#f1a6f1"/><rect x="463" y="445" width="5" height="34" fill="#333333"/><rect x="470" y="445" width="1" height="34" fill="#a3c5f0"/><rect x="472" y="445" width="4" height="34" fill="#e384e3"/><rect x="472" y="445" width="0.9" height="34" fill="#f1a6f1"/><rect x="476" y="445" width="1" height="34" fill="#f1a6f1"/><rect x="478" y="445" width="2" height="34" fill="#e384e3"/><rect x="478" y="445" width="0.9" height="34" fill="#f1a6f1"/><rect x="481" y="445" width="1" height="34" fill="#f1a6f1"/><rect x="483" y="445" width="4" height="34" fill="#e384e3"/><rect x="483" y="445" width="0.9" height="34" fill="#f1a6f1"/><rect x="489" y="445" width="8" height="34" fill="#e384e3"/><rect x="489" y="445" width="0.9" height="34" fill="#f1a6f1"/><rect x="498" y="445" width="1" height="34" fill="#a3c5f0"/><rect x="500" y="445" width="3" height="34" fill="#e384e3"/><rect x="500" y="445" width="0.9" height="34" fill="#f1a6f1"/><rect x="504" y="445" width="2" height="34" fill="#e384e3"/><rect x="504" y="445" width="0.9" height="34" fill="#f1a6f1"/><rect x="506" y="445" width="3" height="34" fill="#b598e3"/><rect x="506" y="445" width="0.9" height="34" fill="#cdb6f0"/><rect x="512" y="445" width="1" height="34" fill="#a3c5f0"/><rect x="514" y="445" width="2" height="34" fill="#e384e3"/><rect x="514" y="445" width="0.9" height="34" fill="#f1a6f1"/><rect x="517" y="445" width="4" height="34" fill="#e384e3"/><rect x="517" y="445" width="0.9" height="34" fill="#f1a6f1"/><rect x="522" y="445" width="1" height="34" fill="#f1a6f1"/><rect x="525" y="445" width="4" height="34" fill="#e384e3"/><rect x="525" y="445" width="0.9" height="34" fill="#f1a6f1"/><rect x="529" y="445" width="3" height="34" fill="#333333"/><rect x="533" y="445" width="2" height="34" fill="#729acc"/><rect x="533" y="445" width="0.9" height="34" fill="#a3c5f0"/><rect x="536" y="445" width="1" height="34" fill="#a3c5f0"/><rect x="539" y="445" width="2" height="34" fill="#729acc"/><rect x="539" y="445" width="0.9" height="34" fill="#a3c5f0"/><rect x="542" y="445" width="3" height="34" fill="#729acc"/><rect x="542" y="445" width="0.9" height="34" fill="#a3c5f0"/><rect x="546" y="445" width="1" height="34" fill="#a3c5f0"/><rect x="548" y="445" width="2" height="34" fill="#729acc"/><rect x="548" y="445" width="0.9" height="34" fill="#a3c5f0"/><rect x="551" y="445" width="4" height="34" fill="#729acc"/><rect x="551" y="445" width="0.9" height="34" fill="#a3c5f0"/><rect x="556" y="445" width="4" height="34" fill="#333333"/><rect x="560" y="445" width="2" height="34" fill="#729acc"/><rect x="560" y="445" width="0.9" height="34" fill="#a3c5f0"/><rect x="564" y="445" width="4" height="34" fill="#729acc"/><rect x="564" y="445" width="0.9" height="34" fill="#a3c5f0"/><rect x="569" y="445" width="3" height="34" fill="#729acc"/><rect x="569" y="445" width="0.9" height="34" fill="#a3c5f0"/><rect x="574" y="445" width="3" height="34" fill="#729acc"/><rect x="574" y="445" width="0.9" height="34" fill="#a3c5f0"/><rect x="578" y="445" width="2" height="34" fill="#729acc"/><rect x="578" y="445" width="0.9" height="34" fill="#a3c5f0"/><rect x="581" y="445" width="1" height="34" fill="#a3c5f0"/><rect x="584" y="445" width="2" height="34" fill="#729acc"/><rect x="584" y="445" width="0.9" height="34" fill="#a3c5f0"/><rect x="587" y="445" width="1" height="34" fill="#a3c5f0"/><rect x="589" y="445" width="1" height="34" fill="#a3c5f0"/><rect x="591" y="445" width="1" height="34" fill="#a3c5f0"/><rect x="593" y="445" width="1" height="34" fill="#a3c5f0"/><rect x="596" y="445" width="2" height="34" fill="#729acc"/><rect x="596" y="445" width="0.9" height="34" fill="#a3c5f0"/><rect x="599" y="445" width="4" height="34" fill="#729acc"/><rect x="599" y="445" width="0.9" height="34" fill="#a3c5f0"/><rect x="604" y="445" width="3" height="34" fill="#729acc"/><rect x="604" y="445" width="0.9" height="34" fill="#a3c5f0"/><rect x="608" y="445" width="2" height="34" fill="#729acc"/><rect x="608" y="445" width="0.9" height="34" fill="#a3c5f0"/><rect x="611" y="445" width="1" height="34" fill="#a3c5f0"/><rect x="613" y="445" width="4" height="34" fill="#729acc"/><rect x="613" y="445" width="0.9" height="34" fill="#a3c5f0"/><rect x="618" y="445" width="5" height="34" fill="#729acc"/><rect x="618" y="445" width="0.9" height="34" fill="#a3c5f0"/><rect x="624" y="445" width="2" height="34" fill="#729acc"/><rect x="624" y="445" width="0.9" height="34" fill="#a3c5f0"/><rect x="627" y="445" width="1" height="34" fill="#a3c5f0"/><rect x="629" y="445" width="2" height="34" fill="#729acc"/><rect x="629" y="445" width="0.9" height="34" fill="#a3c5f0"/><rect x="631" y="445" width="6" height="34" fill="#333333"/><rect x="638" y="445" width="4" height="34" fill="#e384e3"/><rect x="638" y="445" width="0.9" height="34" fill="#f1a6f1"/><rect x="643" y="445" width="2" height="34" fill="#729acc"/><rect x="643" y="445" width="0.9" height="34" fill="#a3c5f0"/><rect x="646" y="445" width="5" height="34" fill="#333333"/><rect x="651" y="445" width="1" height="34" fill="#a3c5f0"/><rect x="653" y="445" width="2" height="34" fill="#729acc"/><rect x="653" y="445" width="0.9" height="34" fill="#a3c5f0"/><rect x="658" y="445" width="1" height="34" fill="#a3c5f0"/><rect x="659" y="445" width="5" height="34" fill="#333333"/><rect x="664" y="445" width="2" height="34" fill="#729acc"/><rect x="664" y="445" width="0.9" height="34" fill="#a3c5f0"/><rect x="667" y="445" width="1" height="34" fill="#a3c5f0"/><rect x="671" y="445" width="2" height="34" fill="#729acc"/><rect x="671" y="445" width="0.9" height="34" fill="#a3c5f0"/><rect x="674" y="445" width="1" height="34" fill="#a3c5f0"/><rect x="676" y="445" width="14" height="34" fill="#729acc"/><rect x="676" y="445" width="0.9" height="34" fill="#a3c5f0"/><rect x="691" y="445" width="2" height="34" fill="#729acc"/><rect x="691" y="445" width="0.9" height="34" fill="#a3c5f0"/><rect x="694" y="445" width="2" height="34" fill="#729acc"/><rect x="694" y="445" width="0.9" height="34" fill="#a3c5f0"/><rect x="698" y="445" width="3" height="34" fill="#729acc"/><rect x="698" y="445" width="0.9" height="34" fill="#a3c5f0"/><rect x="702" y="445" width="2" height="34" fill="#729acc"/><rect x="702" y="445" width="0.9" height="34" fill="#a3c5f0"/><rect x="706" y="445" width="2" height="34" fill="#729acc"/><rect x="706" y="445" width="0.9" height="34" fill="#a3c5f0"/><rect x="709" y="445" width="1" height="34" fill="#a3c5f0"/><rect x="712" y="445" width="1" height="34" fill="#a3c5f0"/><rect x="714" y="445" width="1" height="34" fill="#a3c5f0"/><rect x="717" y="445" width="2" height="34" fill="#729acc"/><rect x="717" y="445" width="0.9" height="34" fill="#a3c5f0"/><rect x="720" y="445" width="14" height="34" fill="#729acc"/><rect x="720" y="445" width="0.9" height="34" fill="#a3c5f0"/><rect x="735" y="445" width="3" height="34" fill="#333333"/><rect x="739" y="445" width="3" height="34" fill="#729acc"/><rect x="739" y="445" width="0.9" height="34" fill="#a3c5f0"/><rect x="743" y="445" width="6" height="34" fill="#729acc"/><rect x="743" y="445" width="0.9" height="34" fill="#a3c5f0"/><rect x="750" y="445" width="1" height="34" fill="#a3c5f0"/><rect x="752" y="445" width="1" height="34" fill="#a3c5f0"/><rect x="754" y="445" width="8" height="34" fill="#729acc"/><rect x="754" y="445" width="0.9" height="34" fill="#a3c5f0"/><rect x="763" y="445" width="8" height="34" fill="#729acc"/><rect x="763" y="445" width="0.9" height="34" fill="#a3c5f0"/><rect x="772" y="445" width="3" height="34" fill="#333333"/><rect x="776" y="445" width="10" height="34" fill="#729acc"/><rect x="776" y="445" width="0.9" height="34" fill="#a3c5f0"/><rect x="787" y="445" width="2" height="34" fill="#729acc"/><rect x="787" y="445" width="0.9" height="34" fill="#a3c5f0"/><rect x="790" y="445" width="4" height="34" fill="#729acc"/><rect x="790" y="445" width="0.9" height="34" fill="#a3c5f0"/><rect x="795" y="445" width="5" height="34" fill="#729acc"/><rect x="795" y="445" width="0.9" height="34" fill="#a3c5f0"/><rect x="801" y="445" width="5" height="34" fill="#729acc"/><rect x="801" y="445" width="0.9" height="34" fill="#a3c5f0"/><rect x="807" y="445" width="5" height="34" fill="#729acc"/><rect x="807" y="445" width="0.9" height="34" fill="#a3c5f0"/><rect x="813" y="445" width="2" height="34" fill="#729acc"/><rect x="813" y="445" width="0.9" height="34" fill="#a3c5f0"/><rect x="816" y="445" width="3" height="34" fill="#e384e3"/><rect x="816" y="445" width="0.9" height="34" fill="#f1a6f1"/><rect x="821" y="445" width="7" height="34" fill="#729acc"/><rect x="821" y="445" width="0.9" height="34" fill="#a3c5f0"/><rect x="829" y="445" width="2" height="34" fill="#729acc"/><rect x="829" y="445" width="0.9" height="34" fill="#a3c5f0"/><rect x="832" y="445" width="2" height="34" fill="#729acc"/><rect x="832" y="445" width="0.9" height="34" fill="#a3c5f0"/><rect x="835" y="445" width="2" height="34" fill="#729acc"/><rect x="835" y="445" width="0.9" height="34" fill="#a3c5f0"/><rect x="838" y="445" width="6" height="34" fill="#729acc"/><rect x="838" y="445" width="0.9" height="34" fill="#a3c5f0"/><rect x="845" y="445" width="5" height="34" fill="#729acc"/><rect x="845" y="445" width="0.9" height="34" fill="#a3c5f0"/><rect x="851" y="445" width="3" height="34" fill="#729acc"/><rect x="851" y="445" width="0.9" height="34" fill="#a3c5f0"/><rect x="857" y="445" width="1" height="34" fill="#a3c5f0"/><rect x="858" y="445" width="3" height="34" fill="#333333"/><rect x="861" y="445" width="1" height="34" fill="#a3c5f0"/><rect x="863" y="445" width="4" height="34" fill="#729acc"/><rect x="863" y="445" width="0.9" height="34" fill="#a3c5f0"/><rect x="868" y="445" width="3" height="34" fill="#729acc"/><rect x="868" y="445" width="0.9" height="34" fill="#a3c5f0"/><rect x="872" y="445" width="4" height="34" fill="#729acc"/><rect x="872" y="445" width="0.9" height="34" fill="#a3c5f0"/><rect x="877" y="445" width="1" height="34" fill="#a3c5f0"/><rect x="879" y="445" width="1" height="34" fill="#a3c5f0"/><rect x="881" y="445" width="2" height="34" fill="#729acc"/><rect x="881" y="445" width="0.9" height="34" fill="#a3c5f0"/><rect x="884" y="445" width="1" height="34" fill="#a3c5f0"/><rect x="886" y="445" width="6" height="34" fill="#729acc"/><rect x="886" y="445" width="0.9" height="34" fill="#a3c5f0"/><rect x="893" y="445" width="7" height="34" fill="#729acc"/><rect x="893" y="445" width="0.9" height="34" fill="#a3c5f0"/><rect x="901" y="445" width="3" height="34" fill="#729acc"/><rect x="901" y="445" width="0.9" height="34" fill="#a3c5f0"/><rect x="906" y="445" width="2" height="34" fill="#729acc"/><rect x="906" y="445" width="0.9" height="34" fill="#a3c5f0"/><rect x="909" y="445" width="3" height="34" fill="#333333"/><rect x="913" y="445" width="8" height="34" fill="#729acc"/><rect x="913" y="445" width="0.9" height="34" fill="#a3c5f0"/><rect x="922" y="445" width="10" height="34" fill="#729acc"/><rect x="922" y="445" width="0.9" height="34" fill="#a3c5f0"/><rect x="933" y="445" width="4" height="34" fill="#729acc"/><rect x="933" y="445" width="0.9" height="34" fill="#a3c5f0"/><rect x="938" y="445" width="2" height="34" fill="#729acc"/><rect x="938" y="445" width="0.9" height="34" fill="#a3c5f0"/><rect x="941" y="445" width="5" height="34" fill="#729acc"/><rect x="941" y="445" width="0.9" height="34" fill="#a3c5f0"/><rect x="947" y="445" width="2" height="34" fill="#729acc"/><rect x="947" y="445" width="0.9" height="34" fill="#a3c5f0"/><rect x="950" y="445" width="6" height="34" fill="#729acc"/><rect x="950" y="445" width="0.9" height="34" fill="#a3c5f0"/><rect x="956" y="445" width="7" height="34" fill="#729acc"/><rect x="956" y="445" width="0.9" height="34" fill="#a3c5f0"/><rect x="964" y="445" width="1" height="34" fill="#a3c5f0"/><rect x="966" y="445" width="1" height="34" fill="#a3c5f0"/><rect x="968" y="445" width="1" height="34" fill="#a3c5f0"/><rect x="972" y="445" width="1" height="34" fill="#a3c5f0"/><rect x="975" y="445" width="3" height="34" fill="#e384e3"/><rect x="975" y="445" width="0.9" height="34" fill="#f1a6f1"/><rect x="979" y="445" width="7" height="34" fill="#729acc"/><rect x="979" y="445" width="0.9" height="34" fill="#a3c5f0"/><rect x="987" y="445" width="3" height="34" fill="#729acc"/><rect x="987" y="445" width="0.9" height="34" fill="#a3c5f0"/><rect x="991" y="445" width="2" height="34" fill="#729acc"/><rect x="991" y="445" width="0.9" height="34" fill="#a3c5f0"/><rect x="994" y="445" width="4" height="34" fill="#729acc"/><rect x="994" y="445" width="0.9" height="34" fill="#a3c5f0"/><rect x="999" y="445" width="2" height="34" fill="#729acc"/><rect x="999" y="445" width="0.9" height="34" fill="#a3c5f0"/><rect x="1002" y="445" width="2" height="34" fill="#729acc"/><rect x="1002" y="445" width="0.9" height="34" fill="#a3c5f0"/><rect x="1005" y="445" width="2" height="34" fill="#729acc"/><rect x="1005" y="445" width="0.9" height="34" fill="#a3c5f0"/><rect x="1008" y="445" width="1" height="34" fill="#a3c5f0"/><rect x="1012" y="445" width="3" height="34" fill="#729acc"/><rect x="1012" y="445" width="0.9" height="34" fill="#a3c5f0"/><rect x="1017" y="445" width="3" height="34" fill="#729acc"/><rect x="1017" y="445" width="0.9" height="34" fill="#a3c5f0"/><rect x="1021" y="445" width="2" height="34" fill="#729acc"/><rect x="1021" y="445" width="0.9" height="34" fill="#a3c5f0"/><rect x="1025" y="445" width="1" height="34" fill="#a3c5f0"/><rect x="1027" y="445" width="8" height="34" fill="#729acc"/><rect x="1027" y="445" width="0.9" height="34" fill="#a3c5f0"/><rect x="1036" y="445" width="2" height="34" fill="#729acc"/><rect x="1036" y="445" width="0.9" height="34" fill="#a3c5f0"/><rect x="1039" y="445" width="3" height="34" fill="#729acc"/><rect x="1039" y="445" width="0.9" height="34" fill="#a3c5f0"/><rect x="1044" y="445" width="3" height="34" fill="#729acc"/><rect x="1044" y="445" width="0.9" height="34" fill="#a3c5f0"/><rect x="1048" y="445" width="1" height="34" fill="#a3c5f0"/><rect x="1050" y="445" width="7" height="34" fill="#729acc"/><rect x="1050" y="445" width="0.9" height="34" fill="#a3c5f0"/><rect x="1059" y="445" width="1" height="34" fill="#a3c5f0"/><rect x="1061" y="445" width="1" height="34" fill="#a3c5f0"/><rect x="1064" y="445" width="3" height="34" fill="#729acc"/><rect x="1064" y="445" width="0.9" height="34" fill="#a3c5f0"/><rect x="1068" y="445" width="3" height="34" fill="#729acc"/><rect x="1068" y="445" width="0.9" height="34" fill="#a3c5f0"/><rect x="1072" y="445" width="3" height="34" fill="#729acc"/><rect x="1072" y="445" width="0.9" height="34" fill="#a3c5f0"/><rect x="1076" y="445" width="7" height="34" fill="#729acc"/><rect x="1076" y="445" width="0.9" height="34" fill="#a3c5f0"/><rect x="1084" y="445" width="2" height="34" fill="#729acc"/><rect x="1084" y="445" width="0.9" height="34" fill="#a3c5f0"/><rect x="1087" y="445" width="1" height="34" fill="#a3c5f0"/><rect x="1089" y="445" width="1" height="34" fill="#a3c5f0"/><rect x="1092" y="445" width="3" height="34" fill="#e384e3"/><rect x="1092" y="445" width="0.9" height="34" fill="#f1a6f1"/><rect x="1096" y="445" width="4" height="34" fill="#729acc"/><rect x="1096" y="445" width="0.9" height="34" fill="#a3c5f0"/><rect x="1101" y="445" width="4" height="34" fill="#729acc"/><rect x="1101" y="445" width="0.9" height="34" fill="#a3c5f0"/><rect x="1106" y="445" width="1" height="34" fill="#a3c5f0"/><rect x="1108" y="445" width="1" height="34" fill="#a3c5f0"/><rect x="1110" y="445" width="1" height="34" fill="#a3c5f0"/><rect x="1112" y="445" width="1" height="34" fill="#a3c5f0"/><rect x="1114" y="445" width="2" height="34" fill="#729acc"/><rect x="1114" y="445" width="0.9" height="34" fill="#a3c5f0"/><rect x="1117" y="445" width="1" height="34" fill="#a3c5f0"/><rect x="1121" y="445" width="1" height="34" fill="#a3c5f0"/><rect x="1125" y="445" width="1" height="34" fill="#a3c5f0"/><rect x="1127" y="445" width="2" height="34" fill="#729acc"/><rect x="1127" y="445" width="0.9" height="34" fill="#a3c5f0"/><rect x="1130" y="445" width="3" height="34" fill="#729acc"/><rect x="1130" y="445" width="0.9" height="34" fill="#a3c5f0"/><rect x="1135" y="445" width="1" height="34" fill="#a3c5f0"/><rect x="1137" y="445" width="5" height="34" fill="#729acc"/><rect x="1137" y="445" width="0.9" height="34" fill="#a3c5f0"/><rect x="1143" y="445" width="3" height="34" fill="#729acc"/><rect x="1143" y="445" width="0.9" height="34" fill="#a3c5f0"/><rect x="1148" y="445" width="1" height="34" fill="#a3c5f0"/><rect x="1150" y="445" width="4" height="34" fill="#729acc"/><rect x="1150" y="445" width="0.9" height="34" fill="#a3c5f0"/><rect x="1156" y="445" width="2" height="34" fill="#729acc"/><rect x="1156" y="445" width="0.9" height="34" fill="#a3c5f0"/><rect x="1160" y="445" width="2" height="34" fill="#729acc"/><rect x="1160" y="445" width="0.9" height="34" fill="#a3c5f0"/><rect x="1164" y="445" width="2" height="34" fill="#729acc"/><rect x="1164" y="445" width="0.9" height="34" fill="#a3c5f0"/><rect x="1169" y="445" width="1" height="34" fill="#a3c5f0"/><rect x="1171" y="445" width="2" height="34" fill="#729acc"/><rect x="1171" y="445" width="0.9" height="34" fill="#a3c5f0"/><rect x="1174" y="445" width="1" height="34" fill="#a3c5f0"/><rect x="1176" y="445" width="1" height="34" fill="#a3c5f0"/><rect x="1178" y="445" width="2" height="34" fill="#729acc"/><rect x="1178" y="445" width="0.9" height="34" fill="#a3c5f0"/><rect x="1183" y="445" width="2" height="34" fill="#729acc"/><rect x="1183" y="445" width="0.9" height="34" fill="#a3c5f0"/><rect x="1186" y="445" width="2" height="34" fill="#729acc"/><rect x="1186" y="445" width="0.9" height="34" fill="#a3c5f0"/><rect x="1189" y="445" width="2" height="34" fill="#729acc"/><rect x="1189" y="445" width="0.9" height="34" fill="#a3c5f0"/><rect x="1192" y="445" width="3" height="34" fill="#729acc"/><rect x="1192" y="445" width="0.9" height="34" fill="#a3c5f0"/><rect x="1196" y="445" width="1" height="34" fill="#a3c5f0"/><rect x="1198" y="445" width="1" height="34" fill="#a3c5f0"/><rect x="1200" y="445" width="5" height="34" fill="#729acc"/><rect x="1200" y="445" width="0.9" height="34" fill="#a3c5f0"/><rect x="1206" y="445" width="2" height="34" fill="#729acc"/><rect x="1206" y="445" width="0.9" height="34" fill="#a3c5f0"/><rect x="1209" y="445" width="5" height="34" fill="#729acc"/><rect x="1209" y="445" width="0.9" height="34" fill="#a3c5f0"/><rect x="1215" y="445" width="1" height="34" fill="#a3c5f0"/><rect x="1217" y="445" width="3" height="34" fill="#729acc"/><rect x="1217" y="445" width="0.9" height="34" fill="#a3c5f0"/><rect x="1221" y="445" width="1" height="34" fill="#a3c5f0"/><rect x="1223" y="445" width="5" height="34" fill="#729acc"/><rect x="1223" y="445" width="0.9" height="34" fill="#a3c5f0"/><rect x="1229" y="445" width="4" height="34" fill="#729acc"/><rect x="1229" y="445" width="0.9" height="34" fill="#a3c5f0"/><rect x="1234" y="445" width="3" height="34" fill="#729acc"/><rect x="1234" y="445" width="0.9" height="34" fill="#a3c5f0"/><rect x="1238" y="445" width="1" height="34" fill="#a3c5f0"/><rect x="1240" y="445" width="1" height="34" fill="#a3c5f0"/><rect x="1242" y="445" width="2" height="34" fill="#729acc"/><rect x="1242" y="445" width="0.9" height="34" fill="#a3c5f0"/><rect x="1246" y="445" width="4" height="34" fill="#729acc"/><rect x="1246" y="445" width="0.9" height="34" fill="#a3c5f0"/><rect x="1251" y="445" width="2" height="34" fill="#729acc"/><rect x="1251" y="445" width="0.9" height="34" fill="#a3c5f0"/><rect x="1254" y="445" width="1" height="34" fill="#a3c5f0"/><rect x="1256" y="445" width="2" height="34" fill="#729acc"/><rect x="1256" y="445" width="0.9" height="34" fill="#a3c5f0"/><rect x="1259" y="445" width="5" height="34" fill="#729acc"/><rect x="1259" y="445" width="0.9" height="34" fill="#a3c5f0"/><rect x="1265" y="445" width="2" height="34" fill="#729acc"/><rect x="1265" y="445" width="0.9" height="34" fill="#a3c5f0"/><rect x="1270" y="445" width="2" height="34" fill="#729acc"/><rect x="1270" y="445" width="0.9" height="34" fill="#a3c5f0"/><rect x="1273" y="445" width="1" height="34" fill="#a3c5f0"/><rect x="1275" y="445" width="1" height="34" fill="#a3c5f0"/><rect x="1277" y="445" width="4" height="34" fill="#729acc"/><rect x="1277" y="445" width="0.9" height="34" fill="#a3c5f0"/><rect x="1282" y="445" width="3" height="34" fill="#729acc"/><rect x="1282" y="445" width="0.9" height="34" fill="#a3c5f0"/><rect x="1286" y="445" width="1" height="34" fill="#a3c5f0"/><rect x="1288" y="445" width="4" height="34" fill="#333333"/><rect x="1292" y="445" width="1" height="34" fill="#a3c5f0"/><rect x="1294" y="445" width="2" height="34" fill="#729acc"/><rect x="1294" y="445" width="0.9" height="34" fill="#a3c5f0"/><rect x="1297" y="445" width="2" height="34" fill="#729acc"/><rect x="1297" y="445" width="0.9" height="34" fill="#a3c5f0"/><rect x="1300" y="445" width="1" height="34" fill="#a3c5f0"/><rect x="1302" y="445" width="2" height="34" fill="#729acc"/><rect x="1302" y="445" width="0.9" height="34" fill="#a3c5f0"/><rect x="1305" y="445" width="1" height="34" fill="#a3c5f0"/><rect x="1307" y="445" width="2" height="34" fill="#729acc"/><rect x="1307" y="445" width="0.9" height="34" fill="#a3c5f0"/><rect x="1310" y="445" width="2" height="34" fill="#729acc"/><rect x="1310" y="445" width="0.9" height="34" fill="#a3c5f0"/><rect x="1314" y="445" width="2" height="34" fill="#729acc"/><rect x="1314" y="445" width="0.9" height="34" fill="#a3c5f0"/><rect x="1317" y="445" width="4" height="34" fill="#729acc"/><rect x="1317" y="445" width="0.9" height="34" fill="#a3c5f0"/><rect x="1322" y="445" width="2" height="34" fill="#729acc"/><rect x="1322" y="445" width="0.9" height="34" fill="#a3c5f0"/><rect x="1325" y="445" width="4" height="34" fill="#729acc"/><rect x="1325" y="445" width="0.9" height="34" fill="#a3c5f0"/><rect x="1330" y="445" width="2" height="34" fill="#729acc"/><rect x="1330" y="445" width="0.9" height="34" fill="#a3c5f0"/><rect x="1333" y="445" width="3" height="34" fill="#729acc"/><rect x="1333" y="445" width="0.9" height="34" fill="#a3c5f0"/><rect x="1337" y="445" width="2" height="34" fill="#729acc"/><rect x="1337" y="445" width="0.9" height="34" fill="#a3c5f0"/><rect x="1340" y="445" width="1" height="34" fill="#a3c5f0"/><rect x="1343" y="445" width="1" height="34" fill="#a3c5f0"/><rect x="1345" y="445" width="3" height="34" fill="#729acc"/><rect x="1345" y="445" width="0.9" height="34" fill="#a3c5f0"/><rect x="1349" y="445" width="1" height="34" fill="#a3c5f0"/><rect x="1352" y="445" width="1" height="34" fill="#a3c5f0"/><rect x="1356" y="445" width="2" height="34" fill="#729acc"/><rect x="1356" y="445" width="0.9" height="34" fill="#a3c5f0"/><rect x="1359" y="445" width="2" height="34" fill="#729acc"/><rect x="1359" y="445" width="0.9" height="34" fill="#a3c5f0"/><rect x="1362" y="445" width="1" height="34" fill="#a3c5f0"/><rect x="1364" y="445" width="3" height="34" fill="#729acc"/><rect x="1364" y="445" width="0.9" height="34" fill="#a3c5f0"/><rect x="1368" y="445" width="5" height="34" fill="#729acc"/><rect x="1368" y="445" width="0.9" height="34" fill="#a3c5f0"/><rect x="1374" y="445" width="4" height="34" fill="#729acc"/><rect x="1374" y="445" width="0.9" height="34" fill="#a3c5f0"/><rect x="1379" y="445" width="1" height="34" fill="#a3c5f0"/><rect x="1381" y="445" width="2" height="34" fill="#729acc"/><rect x="1381" y="445" width="0.9" height="34" fill="#a3c5f0"/><rect x="1384" y="445" width="1" height="34" fill="#a3c5f0"/><rect x="1386" y="445" width="1" height="34" fill="#a3c5f0"/><rect x="1388" y="445" width="2" height="34" fill="#729acc"/><rect x="1388" y="445" width="0.9" height="34" fill="#a3c5f0"/><rect x="1391" y="445" width="1" height="34" fill="#a3c5f0"/><rect x="1393" y="445" width="1" height="34" fill="#a3c5f0"/><rect x="1397" y="445" width="6" height="34" fill="#729acc"/><rect x="1397" y="445" width="0.9" height="34" fill="#a3c5f0"/><rect x="1404" y="445" width="4" height="34" fill="#729acc"/><rect x="1404" y="445" width="0.9" height="34" fill="#a3c5f0"/><rect x="1409" y="445" width="1" height="34" fill="#a3c5f0"/><rect x="1412" y="445" width="8" height="34" fill="#729acc"/><rect x="1412" y="445" width="0.9" height="34" fill="#a3c5f0"/><rect x="1422" y="445" width="3" height="34" fill="#e384e3"/><rect x="1422" y="445" width="0.9" height="34" fill="#f1a6f1"/><rect x="1426" y="445" width="6" height="34" fill="#333333"/><rect x="1433" y="445" width="1" height="34" fill="#a3c5f0"/><rect x="1435" y="445" width="1" height="34" fill="#a3c5f0"/><rect x="1437" y="445" width="8" height="34" fill="#333333"/><rect x="1446" y="445" width="1" height="34" fill="#a3c5f0"/><rect x="1448" y="445" width="2" height="34" fill="#729acc"/><rect x="1448" y="445" width="0.9" height="34" fill="#a3c5f0"/><rect x="1451" y="445" width="1" height="34" fill="#a3c5f0"/><rect x="1455" y="445" width="1" height="34" fill="#a3c5f0"/><rect x="1457" y="445" width="1" height="34" fill="#a3c5f0"/><rect x="1459" y="445" width="5" height="34" fill="#333333"/><rect x="1465" y="445" width="5" height="34" fill="#729acc"/><rect x="1465" y="445" width="0.9" height="34" fill="#a3c5f0"/><rect x="1472" y="445" width="2" height="34" fill="#729acc"/><rect x="1472" y="445" width="0.9" height="34" fill="#a3c5f0"/><rect x="1475" y="445" width="6" height="34" fill="#729acc"/><rect x="1475" y="445" width="0.9" height="34" fill="#a3c5f0"/><rect x="1483" y="445" width="1" height="34" fill="#a3c5f0"/><rect x="1485" y="445" width="3" height="34" fill="#729acc"/><rect x="1485" y="445" width="0.9" height="34" fill="#a3c5f0"/><rect x="1489" y="445" width="1" height="34" fill="#a3c5f0"/><rect x="1492" y="445" width="1" height="34" fill="#a3c5f0"/><rect x="1494" y="445" width="1" height="34" fill="#a3c5f0"/><rect x="1496" y="445" width="2" height="34" fill="#729acc"/><rect x="1496" y="445" width="0.9" height="34" fill="#a3c5f0"/><rect x="1499" y="445" width="2" height="34" fill="#729acc"/><rect x="1499" y="445" width="0.9" height="34" fill="#a3c5f0"/><rect x="1502" y="445" width="4" height="34" fill="#729acc"/><rect x="1502" y="445" width="0.9" height="34" fill="#a3c5f0"/><rect x="1507" y="445" width="7" height="34" fill="#729acc"/><rect x="1507" y="445" width="0.9" height="34" fill="#a3c5f0"/><rect x="1515" y="445" width="5" height="34" fill="#729acc"/><rect x="1515" y="445" width="0.9" height="34" fill="#a3c5f0"/><rect x="1521" y="445" width="1" height="34" fill="#a3c5f0"/><rect x="1523" y="445" width="2" height="34" fill="#729acc"/><rect x="1523" y="445" width="0.9" height="34" fill="#a3c5f0"/><rect x="1526" y="445" width="2" height="34" fill="#729acc"/><rect x="1526" y="445" width="0.9" height="34" fill="#a3c5f0"/><rect x="1529" y="445" width="3" height="34" fill="#729acc"/><rect x="1529" y="445" width="0.9" height="34" fill="#a3c5f0"/><rect x="1533" y="445" width="2" height="34" fill="#729acc"/><rect x="1533" y="445" width="0.9" height="34" fill="#a3c5f0"/><rect x="1536" y="445" width="1" height="34" fill="#a3c5f0"/><rect x="1538" y="445" width="1" height="34" fill="#a3c5f0"/><rect x="1540" y="445" width="1" height="34" fill="#a3c5f0"/><rect x="1543" y="445" width="1" height="34" fill="#a3c5f0"/><rect x="1546" y="445" width="6" height="34" fill="#729acc"/><rect x="1546" y="445" width="0.9" height="34" fill="#a3c5f0"/><rect x="1553" y="445" width="1" height="34" fill="#a3c5f0"/><rect x="1557" y="445" width="1" height="34" fill="#a3c5f0"/><rect x="1559" y="445" width="1" height="34" fill="#a3c5f0"/><rect x="1561" y="445" width="1" height="34" fill="#a3c5f0"/><rect x="1564" y="445" width="1" height="34" fill="#a3c5f0"/><rect x="1567" y="445" width="1" height="34" fill="#a3c5f0"/><rect x="1568" y="445" width="4" height="34" fill="#333333"/><rect x="1573" y="445" width="1" height="34" fill="#a3c5f0"/><rect x="1576" y="445" width="1" height="34" fill="#a3c5f0"/><rect x="1579" y="445" width="5" height="34" fill="#729acc"/><rect x="1579" y="445" width="0.9" height="34" fill="#a3c5f0"/><rect x="1585" y="445" width="1" height="34" fill="#a3c5f0"/><rect x="1587" y="445" width="1" height="34" fill="#a3c5f0"/><rect x="1589" y="445" width="3" height="34" fill="#729acc"/><rect x="1589" y="445" width="0.9" height="34" fill="#a3c5f0"/><rect x="1593" y="445" width="3" height="34" fill="#729acc"/><rect x="1593" y="445" width="0.9" height="34" fill="#a3c5f0"/><rect x="1597" y="445" width="1" height="34" fill="#a3c5f0"/><rect x="1599" y="445" width="1" height="34" fill="#a3c5f0"/><rect x="1601" y="445" width="1" height="34" fill="#a3c5f0"/><rect x="1603" y="445" width="3" height="34" fill="#729acc"/><rect x="1603" y="445" width="0.9" height="34" fill="#a3c5f0"/><rect x="1607" y="445" width="1" height="34" fill="#a3c5f0"/><rect x="1610" y="445" width="1" height="34" fill="#a3c5f0"/><rect x="1612" y="445" width="1" height="34" fill="#a3c5f0"/><rect x="1614" y="445" width="2" height="34" fill="#729acc"/><rect x="1614" y="445" width="0.9" height="34" fill="#a3c5f0"/><rect x="1618" y="445" width="2" height="34" fill="#729acc"/><rect x="1618" y="445" width="0.9" height="34" fill="#a3c5f0"/><rect x="1622" y="445" width="1" height="34" fill="#a3c5f0"/><rect x="1624" y="445" width="5" height="34" fill="#729acc"/><rect x="1624" y="445" width="0.9" height="34" fill="#a3c5f0"/><rect x="1630" y="445" width="5" height="34" fill="#729acc"/><rect x="1630" y="445" width="0.9" height="34" fill="#a3c5f0"/><rect x="1637" y="445" width="1" height="34" fill="#a3c5f0"/><rect x="1640" y="445" width="15" height="34" fill="#729acc"/><rect x="1640" y="445" width="0.9" height="34" fill="#a3c5f0"/><rect x="1656" y="445" width="2" height="34" fill="#729acc"/><rect x="1656" y="445" width="0.9" height="34" fill="#a3c5f0"/><rect x="1660" y="445" width="1" height="34" fill="#a3c5f0"/><rect x="1663" y="445" width="1" height="34" fill="#a3c5f0"/><rect x="1668" y="445" width="1" height="34" fill="#a3c5f0"/><rect x="1671" y="445" width="1" height="34" fill="#a3c5f0"/><rect x="1675" y="445" width="1" height="34" fill="#a3c5f0"/><rect x="1677" y="445" width="1" height="34" fill="#a3c5f0"/><rect x="1679" y="445" width="1" height="34" fill="#a3c5f0"/><rect x="1681" y="445" width="7" height="34" fill="#729acc"/><rect x="1681" y="445" width="0.9" height="34" fill="#a3c5f0"/><rect x="1689" y="445" width="4" height="34" fill="#e384e3"/><rect x="1689" y="445" width="0.9" height="34" fill="#f1a6f1"/><rect x="1694" y="445" width="10" height="34" fill="#333333"/><rect x="1705" y="445" width="1" height="34" fill="#a3c5f0"/><rect x="1707" y="445" width="2" height="34" fill="#729acc"/><rect x="1707" y="445" width="0.9" height="34" fill="#a3c5f0"/><rect x="1710" y="445" width="1" height="34" fill="#a3c5f0"/><rect x="1712" y="445" width="9" height="34" fill="#e384e3"/><rect x="1712" y="445" width="0.9" height="34" fill="#f1a6f1"/><rect x="1722" y="445" width="1" height="34" fill="#cdb6f0"/><rect x="1724" y="445" width="1" height="34" fill="#cdb6f0"/><rect x="1728" y="445" width="1" height="34" fill="#a3c5f0"/><rect x="1730" y="445" width="1" height="34" fill="#a3c5f0"/><rect x="1732" y="445" width="1" height="34" fill="#a3c5f0"/><rect x="1734" y="445" width="1" height="34" fill="#a3c5f0"/><rect x="1736" y="445" width="2" height="34" fill="#729acc"/><rect x="1736" y="445" width="0.9" height="34" fill="#a3c5f0"/><rect x="1742" y="445" width="1" height="34" fill="#a3c5f0"/><rect x="1745" y="445" width="1" height="34" fill="#a3c5f0"/><rect x="1748" y="445" width="1" height="34" fill="#a3c5f0"/><rect x="1750" y="445" width="2" height="34" fill="#729acc"/><rect x="1750" y="445" width="0.9" height="34" fill="#a3c5f0"/><rect x="1753" y="445" width="1" height="34" fill="#a3c5f0"/><rect x="1755" y="445" width="2" height="34" fill="#729acc"/><rect x="1755" y="445" width="0.9" height="34" fill="#a3c5f0"/><rect x="1758" y="445" width="1" height="34" fill="#a3c5f0"/><rect x="1760" y="445" width="2" height="34" fill="#729acc"/><rect x="1760" y="445" width="0.9" height="34" fill="#a3c5f0"/><rect x="1763" y="445" width="1" height="34" fill="#a3c5f0"/><rect x="1768" y="445" width="1" height="34" fill="#cdb6f0"/><rect x="1770" y="445" width="2" height="34" fill="#b598e3"/><rect x="1770" y="445" width="0.9" height="34" fill="#cdb6f0"/><rect x="1773" y="445" width="2" height="34" fill="#729acc"/><rect x="1773" y="445" width="0.9" height="34" fill="#a3c5f0"/><rect x="1808" y="445" width="2" height="34" fill="#729acc"/><rect x="1808" y="445" width="0.9" height="34" fill="#a3c5f0"/><rect x="1811" y="445" width="1" height="34" fill="#a3c5f0"/><rect x="1813" y="445" width="3" height="34" fill="#333333"/><rect x="1817" y="445" width="1" height="34" fill="#cdb6f0"/><rect x="1819" y="445" width="2" height="34" fill="#b598e3"/><rect x="1819" y="445" width="0.9" height="34" fill="#cdb6f0"/><rect x="1822" y="445" width="1" height="34" fill="#a3c5f0"/><rect x="1824" y="445" width="2" height="34" fill="#729acc"/><rect x="1824" y="445" width="0.9" height="34" fill="#a3c5f0"/><rect x="1828" y="445" width="1" height="34" fill="#a3c5f0"/><rect x="1830" y="445" width="1" height="34" fill="#a3c5f0"/><rect x="1833" y="445" width="1" height="34" fill="#a3c5f0"/><rect x="1835" y="445" width="1" height="34" fill="#a3c5f0"/><rect x="1838" y="445" width="1" height="34" fill="#a3c5f0"/><rect x="1841" y="445" width="1" height="34" fill="#a3c5f0"/><rect x="1843" y="445" width="1" height="34" fill="#a3c5f0"/><rect x="1845" y="445" width="2" height="34" fill="#729acc"/><rect x="1845" y="445" width="0.9" height="34" fill="#a3c5f0"/><rect x="1848" y="445" width="4" height="34" fill="#729acc"/><rect x="1848" y="445" width="0.9" height="34" fill="#a3c5f0"/><rect x="1853" y="445" width="5" height="34" fill="#729acc"/><rect x="1853" y="445" width="0.9" height="34" fill="#a3c5f0"/><rect x="1859" y="445" width="3" height="34" fill="#e384e3"/><rect x="1859" y="445" width="0.9" height="34" fill="#f1a6f1"/><rect x="236" y="480" width="7" height="31" fill="#e384e3"/><rect x="236" y="480" width="0.9" height="31" fill="#f1a6f1"/><rect x="244" y="480" width="5" height="31" fill="#e384e3"/><rect x="244" y="480" width="0.9" height="31" fill="#f1a6f1"/><rect x="250" y="480" width="206" height="31" fill="#e384e3"/><rect x="250" y="480" width="0.9" height="31" fill="#f1a6f1"/><rect x="458" y="480" width="4" height="31" fill="#e384e3"/><rect x="458" y="480" width="0.9" height="31" fill="#f1a6f1"/><rect x="463" y="480" width="34" height="31" fill="#e384e3"/><rect x="463" y="480" width="0.9" height="31" fill="#f1a6f1"/><rect x="498" y="480" width="25" height="31" fill="#e384e3"/><rect x="498" y="480" width="0.9" height="31" fill="#f1a6f1"/><rect x="524" y="480" width="5" height="31" fill="#e384e3"/><rect x="524" y="480" width="0.9" height="31" fill="#f1a6f1"/><rect x="530" y="480" width="106" height="31" fill="#e384e3"/><rect x="530" y="480" width="0.9" height="31" fill="#f1a6f1"/><rect x="637" y="480" width="5" height="31" fill="#e384e3"/><rect x="637" y="480" width="0.9" height="31" fill="#f1a6f1"/><rect x="643" y="480" width="172" height="31" fill="#e384e3"/><rect x="643" y="480" width="0.9" height="31" fill="#f1a6f1"/><rect x="816" y="480" width="3" height="31" fill="#e384e3"/><rect x="816" y="480" width="0.9" height="31" fill="#f1a6f1"/><rect x="821" y="480" width="152" height="31" fill="#e384e3"/><rect x="821" y="480" width="0.9" height="31" fill="#f1a6f1"/><rect x="975" y="480" width="3" height="31" fill="#e384e3"/><rect x="975" y="480" width="0.9" height="31" fill="#f1a6f1"/><rect x="979" y="480" width="111" height="31" fill="#e384e3"/><rect x="979" y="480" width="0.9" height="31" fill="#f1a6f1"/><rect x="1091" y="480" width="4" height="31" fill="#e384e3"/><rect x="1091" y="480" width="0.9" height="31" fill="#f1a6f1"/><rect x="1096" y="480" width="324" height="31" fill="#e384e3"/><rect x="1096" y="480" width="0.9" height="31" fill="#f1a6f1"/><rect x="1421" y="480" width="4" height="31" fill="#e384e3"/><rect x="1421" y="480" width="0.9" height="31" fill="#f1a6f1"/><rect x="1426" y="480" width="262" height="31" fill="#e384e3"/><rect x="1426" y="480" width="0.9" height="31" fill="#f1a6f1"/><rect x="1689" y="480" width="4" height="31" fill="#e384e3"/><rect x="1689" y="480" width="0.9" height="31" fill="#f1a6f1"/><rect x="1694" y="480" width="17" height="31" fill="#e384e3"/><rect x="1694" y="480" width="0.9" height="31" fill="#f1a6f1"/><rect x="1722" y="480" width="141" height="31" fill="#e384e3"/><rect x="1722" y="480" width="0.9" height="31" fill="#f1a6f1"/><path d="M250 499H256V508L253 511L250 508Z" fill="#71842f"/><rect x="237" y="388" width="2" height="24" fill="#2c2c2c"/><rect x="240" y="388" width="3" height="24" fill="#e384e3"/><rect x="240" y="388" width="0.9" height="24" fill="#f1a6f1"/><rect x="246" y="388" width="3" height="24" fill="#e384e3"/><rect x="246" y="388" width="0.9" height="24" fill="#f1a6f1"/><rect x="251" y="388" width="1" height="24" fill="#f1a6f1"/><rect x="459" y="388" width="4" height="24" fill="#e384e3"/><rect x="459" y="388" width="0.9" height="24" fill="#f1a6f1"/><rect x="527" y="388" width="2" height="24" fill="#e384e3"/><rect x="527" y="388" width="0.9" height="24" fill="#f1a6f1"/><rect x="531" y="388" width="105" height="24" fill="#e384e3"/><rect x="531" y="388" width="0.9" height="24" fill="#f1a6f1"/><rect x="639" y="388" width="3" height="24" fill="#e384e3"/><rect x="639" y="388" width="0.9" height="24" fill="#f1a6f1"/><rect x="643" y="388" width="61" height="24" fill="#e384e3"/><rect x="643" y="388" width="0.9" height="24" fill="#f1a6f1"/><rect x="706" y="388" width="3" height="24" fill="#e384e3"/><rect x="706" y="388" width="0.9" height="24" fill="#f1a6f1"/><rect x="710" y="388" width="2" height="24" fill="#e384e3"/><rect x="710" y="388" width="0.9" height="24" fill="#f1a6f1"/><rect x="713" y="388" width="1" height="24" fill="#f1a6f1"/><rect x="715" y="388" width="3" height="24" fill="#e384e3"/><rect x="715" y="388" width="0.9" height="24" fill="#f1a6f1"/><rect x="719" y="388" width="1" height="24" fill="#f1a6f1"/><rect x="721" y="388" width="94" height="24" fill="#e384e3"/><rect x="721" y="388" width="0.9" height="24" fill="#f1a6f1"/><rect x="818" y="388" width="2" height="24" fill="#e384e3"/><rect x="818" y="388" width="0.9" height="24" fill="#f1a6f1"/><rect x="821" y="388" width="16" height="24" fill="#e384e3"/><rect x="821" y="388" width="0.9" height="24" fill="#f1a6f1"/><rect x="838" y="388" width="6" height="24" fill="#e384e3"/><rect x="838" y="388" width="0.9" height="24" fill="#f1a6f1"/><rect x="845" y="388" width="55" height="24" fill="#e384e3"/><rect x="845" y="388" width="0.9" height="24" fill="#f1a6f1"/><rect x="901" y="388" width="3" height="24" fill="#e384e3"/><rect x="901" y="388" width="0.9" height="24" fill="#f1a6f1"/><rect x="905" y="388" width="68" height="24" fill="#e384e3"/><rect x="905" y="388" width="0.9" height="24" fill="#f1a6f1"/><rect x="976" y="388" width="2" height="24" fill="#e384e3"/><rect x="976" y="388" width="0.9" height="24" fill="#f1a6f1"/><rect x="979" y="388" width="111" height="24" fill="#e384e3"/><rect x="979" y="388" width="0.9" height="24" fill="#f1a6f1"/><rect x="1092" y="388" width="3" height="24" fill="#e384e3"/><rect x="1092" y="388" width="0.9" height="24" fill="#f1a6f1"/><rect x="1096" y="388" width="4" height="24" fill="#e384e3"/><rect x="1096" y="388" width="0.9" height="24" fill="#f1a6f1"/><rect x="1102" y="388" width="9" height="24" fill="#e384e3"/><rect x="1102" y="388" width="0.9" height="24" fill="#f1a6f1"/><rect x="1112" y="388" width="4" height="24" fill="#e384e3"/><rect x="1112" y="388" width="0.9" height="24" fill="#f1a6f1"/><rect x="1117" y="388" width="26" height="24" fill="#e384e3"/><rect x="1117" y="388" width="0.9" height="24" fill="#f1a6f1"/><rect x="1144" y="388" width="3" height="24" fill="#e384e3"/><rect x="1144" y="388" width="0.9" height="24" fill="#f1a6f1"/><rect x="1148" y="388" width="7" height="24" fill="#e384e3"/><rect x="1148" y="388" width="0.9" height="24" fill="#f1a6f1"/><rect x="1156" y="388" width="6" height="24" fill="#e384e3"/><rect x="1156" y="388" width="0.9" height="24" fill="#f1a6f1"/><rect x="1163" y="388" width="12" height="24" fill="#e384e3"/><rect x="1163" y="388" width="0.9" height="24" fill="#f1a6f1"/><rect x="1176" y="388" width="4" height="24" fill="#e384e3"/><rect x="1176" y="388" width="0.9" height="24" fill="#f1a6f1"/><rect x="1181" y="388" width="2" height="24" fill="#e384e3"/><rect x="1181" y="388" width="0.9" height="24" fill="#f1a6f1"/><rect x="1184" y="388" width="2" height="24" fill="#e384e3"/><rect x="1184" y="388" width="0.9" height="24" fill="#f1a6f1"/><rect x="1187" y="388" width="2" height="24" fill="#e384e3"/><rect x="1187" y="388" width="0.9" height="24" fill="#f1a6f1"/><rect x="1190" y="388" width="4" height="24" fill="#e384e3"/><rect x="1190" y="388" width="0.9" height="24" fill="#f1a6f1"/><rect x="1195" y="388" width="4" height="24" fill="#e384e3"/><rect x="1195" y="388" width="0.9" height="24" fill="#f1a6f1"/><rect x="1200" y="388" width="28" height="24" fill="#e384e3"/><rect x="1200" y="388" width="0.9" height="24" fill="#f1a6f1"/><rect x="1229" y="388" width="29" height="24" fill="#e384e3"/><rect x="1229" y="388" width="0.9" height="24" fill="#f1a6f1"/><rect x="1259" y="388" width="5" height="24" fill="#e384e3"/><rect x="1259" y="388" width="0.9" height="24" fill="#f1a6f1"/><rect x="1265" y="388" width="67" height="24" fill="#e384e3"/><rect x="1265" y="388" width="0.9" height="24" fill="#f1a6f1"/><rect x="1333" y="388" width="84" height="24" fill="#e384e3"/><rect x="1333" y="388" width="0.9" height="24" fill="#f1a6f1"/><rect x="1423" y="388" width="2" height="24" fill="#e384e3"/><rect x="1423" y="388" width="0.9" height="24" fill="#f1a6f1"/><rect x="1426" y="388" width="37" height="24" fill="#e384e3"/><rect x="1426" y="388" width="0.9" height="24" fill="#f1a6f1"/><rect x="1464" y="388" width="7" height="24" fill="#e384e3"/><rect x="1464" y="388" width="0.9" height="24" fill="#f1a6f1"/><rect x="1472" y="388" width="216" height="24" fill="#e384e3"/><rect x="1472" y="388" width="0.9" height="24" fill="#f1a6f1"/><rect x="1692" y="388" width="1" height="24" fill="#f1a6f1"/><rect x="1694" y="388" width="4" height="24" fill="#e384e3"/><rect x="1694" y="388" width="0.9" height="24" fill="#f1a6f1"/><rect x="1701" y="388" width="2" height="24" fill="#e384e3"/><rect x="1701" y="388" width="0.9" height="24" fill="#f1a6f1"/><rect x="1704" y="388" width="6" height="24" fill="#e384e3"/><rect x="1704" y="388" width="0.9" height="24" fill="#f1a6f1"/><rect x="1715" y="388" width="6" height="24" fill="#e384e3"/><rect x="1715" y="388" width="0.9" height="24" fill="#f1a6f1"/><rect x="447.3" y="388" width="1" height="24" fill="#66788f"/><rect x="457.4" y="388" width="0.8" height="24" fill="#383838"/><rect x="469" y="388" width="0.8" height="24" fill="#333333"/><rect x="1417.4" y="388" width="5.6" height="24" fill="#1c1c1c"/><rect x="237" y="363" width="1" height="24" fill="#f1a6f1"/><rect x="240" y="363" width="3" height="24" fill="#e384e3"/><rect x="240" y="363" width="0.9" height="24" fill="#f1a6f1"/><rect x="246" y="363" width="3" height="24" fill="#e384e3"/><rect x="246" y="363" width="0.9" height="24" fill="#f1a6f1"/><rect x="251" y="363" width="206" height="24" fill="#e384e3"/><rect x="251" y="363" width="0.9" height="24" fill="#f1a6f1"/><rect x="459" y="363" width="3" height="24" fill="#e384e3"/><rect x="459" y="363" width="0.9" height="24" fill="#f1a6f1"/><rect x="463" y="363" width="60" height="24" fill="#e384e3"/><rect x="463" y="363" width="0.9" height="24" fill="#f1a6f1"/><rect x="525" y="363" width="4" height="24" fill="#e384e3"/><rect x="525" y="363" width="0.9" height="24" fill="#f1a6f1"/><rect x="531" y="363" width="105" height="24" fill="#e384e3"/><rect x="531" y="363" width="0.9" height="24" fill="#f1a6f1"/><rect x="639" y="363" width="3" height="24" fill="#e384e3"/><rect x="639" y="363" width="0.9" height="24" fill="#f1a6f1"/><rect x="643" y="363" width="172" height="24" fill="#e384e3"/><rect x="643" y="363" width="0.9" height="24" fill="#f1a6f1"/><rect x="818" y="363" width="2" height="24" fill="#e384e3"/><rect x="818" y="363" width="0.9" height="24" fill="#f1a6f1"/><rect x="821" y="363" width="152" height="24" fill="#e384e3"/><rect x="821" y="363" width="0.9" height="24" fill="#f1a6f1"/><rect x="976" y="363" width="2" height="24" fill="#e384e3"/><rect x="976" y="363" width="0.9" height="24" fill="#f1a6f1"/><rect x="979" y="363" width="111" height="24" fill="#e384e3"/><rect x="979" y="363" width="0.9" height="24" fill="#f1a6f1"/><rect x="1092" y="363" width="3" height="24" fill="#e384e3"/><rect x="1092" y="363" width="0.9" height="24" fill="#f1a6f1"/><rect x="1096" y="363" width="324" height="24" fill="#e384e3"/><rect x="1096" y="363" width="0.9" height="24" fill="#f1a6f1"/><rect x="1423" y="363" width="2" height="24" fill="#e384e3"/><rect x="1423" y="363" width="0.9" height="24" fill="#f1a6f1"/><rect x="1426" y="363" width="262" height="24" fill="#e384e3"/><rect x="1426" y="363" width="0.9" height="24" fill="#f1a6f1"/><rect x="1692" y="363" width="1" height="24" fill="#f1a6f1"/><rect x="1694" y="363" width="15" height="24" fill="#e384e3"/><rect x="1694" y="363" width="0.9" height="24" fill="#f1a6f1"/><rect x="1716" y="363" width="5" height="24" fill="#e384e3"/><rect x="1716" y="363" width="0.9" height="24" fill="#f1a6f1"/><rect x="1722" y="363" width="136" height="24" fill="#e384e3"/><rect x="1722" y="363" width="0.9" height="24" fill="#f1a6f1"/><rect x="816" y="363" width="2" height="24" fill="#383838"/><rect x="816" y="388" width="2" height="24" fill="#383838"/><rect x="240" y="338" width="3" height="24" fill="#e384e3"/><rect x="240" y="338" width="0.9" height="24" fill="#f1a6f1"/><rect x="251" y="338" width="205" height="24" fill="#e384e3"/><rect x="251" y="338" width="0.9" height="24" fill="#f1a6f1"/><rect x="460" y="338" width="2" height="24" fill="#e384e3"/><rect x="460" y="338" width="0.9" height="24" fill="#f1a6f1"/><rect x="463" y="338" width="14" height="24" fill="#e384e3"/><rect x="463" y="338" width="0.9" height="24" fill="#f1a6f1"/><rect x="478" y="338" width="9" height="24" fill="#e384e3"/><rect x="478" y="338" width="0.9" height="24" fill="#f1a6f1"/><rect x="488" y="338" width="9" height="24" fill="#e384e3"/><rect x="488" y="338" width="0.9" height="24" fill="#f1a6f1"/><rect x="498" y="338" width="23" height="24" fill="#e384e3"/><rect x="498" y="338" width="0.9" height="24" fill="#f1a6f1"/><rect x="522" y="338" width="1" height="24" fill="#f1a6f1"/><rect x="526" y="338" width="3" height="24" fill="#e384e3"/><rect x="526" y="338" width="0.9" height="24" fill="#f1a6f1"/><rect x="1692" y="338" width="1" height="24" fill="#f1a6f1"/><rect x="1698" y="338" width="11" height="24" fill="#e384e3"/><rect x="1698" y="338" width="0.9" height="24" fill="#f1a6f1"/><rect x="1719" y="338" width="2" height="24" fill="#e384e3"/><rect x="1719" y="338" width="0.9" height="24" fill="#f1a6f1"/><rect x="1723" y="338" width="135" height="24" fill="#e384e3"/><rect x="1723" y="338" width="0.9" height="24" fill="#f1a6f1"/><rect x="247" y="338" width="2.2" height="24" fill="#56c271"/><path d="M247 338H250V339L247 342Z" fill="#e8e8e8"/><rect x="640.5" y="338" width="1" height="24" fill="#d79ae0"/><rect x="818" y="338" width="1" height="24" fill="#5f6f86"/><rect x="977" y="338" width="1" height="24" fill="#e384e3"/><rect x="1093.4" y="338" width="1.8" height="24" fill="#e384e3"/><rect x="1394" y="338" width="1.4" height="24" fill="#3b516d"/><rect x="1424.2" y="338" width="1.1" height="24" fill="#e384e3"/><rect x="1701" y="313" width="8" height="24" fill="#e384e3"/><rect x="1701" y="313" width="0.9" height="24" fill="#f1a6f1"/><rect x="1719" y="313" width="2" height="24" fill="#e384e3"/><rect x="1719" y="313" width="0.9" height="24" fill="#f1a6f1"/><rect x="1723" y="313" width="135" height="24" fill="#e384e3"/><rect x="1723" y="313" width="0.9" height="24" fill="#f1a6f1"/><rect x="248.2" y="313" width="1" height="24" fill="#b8a4e8"/><rect x="278.8" y="313" width="1.4" height="24" fill="#e384e3"/><rect x="447.3" y="313" width="1" height="24" fill="#66788f"/><rect x="457.4" y="313" width="0.8" height="24" fill="#383838"/><rect x="461.3" y="313" width="1" height="24" fill="#b8a4e8"/><rect x="526.8" y="313" width="2.4" height="24" fill="#e384e3"/><rect x="640.6" y="313" width="1" height="24" fill="#c9a0e6"/><rect x="1094.2" y="313" width="1" height="24" fill="#b8a4e8"/><rect x="1424.2" y="313" width="1.1" height="24" fill="#e384e3"/><rect x="1705" y="288" width="4" height="24" fill="#e384e3"/><rect x="1705" y="288" width="0.9" height="24" fill="#f1a6f1"/><rect x="1723" y="288" width="135" height="24" fill="#e384e3"/><rect x="1723" y="288" width="0.9" height="24" fill="#f1a6f1"/><rect x="461.3" y="288" width="1" height="24" fill="#b8a4e8"/><rect x="527" y="288" width="2" height="24" fill="#e384e3"/><rect x="640.6" y="288" width="1" height="24" fill="#b8a4e8"/><rect x="1094.2" y="288" width="1" height="24" fill="#b8a4e8"/><rect x="1424.2" y="288" width="1.1" height="24" fill="#e384e3"/><rect x="1722" y="263" width="136" height="24" fill="#e384e3"/><rect x="1722" y="263" width="0.9" height="24" fill="#f1a6f1"/><rect x="528.2" y="263" width="1" height="24" fill="#b8a4e8"/><rect x="1094.2" y="263" width="1" height="24" fill="#b8a4e8"/><rect x="1425.4" y="263" width="0.8" height="24" fill="#3a3a3a"/><rect x="1094.2" y="238" width="1" height="24" fill="#b8a4e8"/><rect x="251" y="516" width="205.6" height="54" fill="#333333"/><rect x="462.1" y="516" width="62.1" height="54" fill="#333333"/><rect x="530.9" y="516" width="106.1" height="54" fill="#333333"/><rect x="642.6" y="516" width="109.4" height="54" fill="#333333"/><rect x="754.2" y="516" width="17.5" height="54" fill="#333333"/><rect x="774.9" y="516" width="11.9" height="54" fill="#333333"/><rect x="789.9" y="516" width="25.7" height="54" fill="#333333"/><rect x="820.6" y="516" width="88.3" height="54" fill="#333333"/><rect x="912.4" y="516" width="61.8" height="54" fill="#333333"/><rect x="979.8" y="516" width="110.2" height="54" fill="#333333"/><rect x="1095.7" y="516" width="325.2" height="54" fill="#333333"/><rect x="1427.1" y="516" width="231.4" height="54" fill="#333333"/><rect x="1666" y="516" width="22" height="54" fill="#333333"/><rect x="1658.5" y="516" width="2.5" height="54" fill="#2b2b2b"/><rect x="1663.8" y="516" width="2" height="54" fill="#2b2b2b"/><rect x="254" y="516" width="1" height="54" fill="#62e6b4"/><rect x="256" y="516" width="1" height="54" fill="#62e6b4"/><rect x="271" y="516" width="4" height="54" fill="#1b7a5b"/><polygon points="271,570 271,535.7 272,535.7 272,530.1 273,530.1 273,528.0 274,528.0 274,525.2 275,525.2 275,570" fill="#2ad698"/><rect x="271" y="516" width="0.8" height="54" fill="#62e6b4"/><rect x="272" y="554.2" width="2.4" height="1.6" fill="#c9d6d0"/><path d="M271 516H273.8V517.2L271.5 519.8H271Z" fill="#d4d4d4"/><rect x="276" y="516" width="1" height="54" fill="#62e6b4"/><rect x="276" y="519" width="1" height="18.006" fill="#3f9a7c"/><rect x="278" y="516" width="1" height="54" fill="#62e6b4"/><rect x="280" y="516" width="3" height="54" fill="#1b7a5b"/><polygon points="280,570 280,528.2 281,528.2 281,532.9 282,532.9 282,533.5 283,533.5 283,570" fill="#2ad698"/><rect x="280" y="516" width="0.8" height="54" fill="#62e6b4"/><path d="M280 516H282.8V517.2L280.5 519.8H280Z" fill="#d4d4d4"/><rect x="285" y="516" width="1" height="54" fill="#62e6b4"/><rect x="285" y="519" width="1" height="17.7379" fill="#3f9a7c"/><path d="M285 516H287.8V517.2L285.5 519.8H285Z" fill="#d4d4d4"/><rect x="288" y="516" width="1" height="54" fill="#62e6b4"/><rect x="288" y="519" width="1" height="10.2905" fill="#3f9a7c"/><path d="M288 516H290.8V517.2L288.5 519.8H288Z" fill="#d4d4d4"/><rect x="290" y="516" width="1" height="54" fill="#62e6b4"/><rect x="294" y="516" width="4" height="54" fill="#1b7a5b"/><polygon points="294,570 294,529.9 295,529.9 295,527.8 296,527.8 296,530.3 297,530.3 297,527.4 298,527.4 298,570" fill="#2ad698"/><rect x="294" y="516" width="0.8" height="54" fill="#62e6b4"/><rect x="295" y="555.2" width="2.4" height="1.6" fill="#c9d6d0"/><path d="M294 516H296.8V517.2L294.5 519.8H294Z" fill="#d4d4d4"/><rect x="299" y="516" width="15" height="54" fill="#1b7a5b"/><polygon points="299,570 299,524.7 300,524.7 300,524.7 301,524.7 301,527.2 302,527.2 302,529.4 303,529.4 303,535.7 304,535.7 304,537.1 305,537.1 305,536.2 306,536.2 306,539.7 307,539.7 307,528.4 308,528.4 308,534.4 309,534.4 309,527.1 310,527.1 310,534.6 311,534.6 311,525.3 312,525.3 312,527.1 313,527.1 313,540.8 314,540.8 314,570" fill="#2ad698"/><rect x="299" y="516" width="0.8" height="54" fill="#62e6b4"/><rect x="300" y="554.2" width="13.4" height="1.6" fill="#c9d6d0"/><path d="M299 516H301.8V517.2L299.5 519.8H299Z" fill="#d4d4d4"/><rect x="315" y="516" width="5" height="54" fill="#1b7a5b"/><polygon points="315,570 315,528.3 316,528.3 316,519.0 317,519.0 317,529.7 318,529.7 318,535.6 319,535.6 319,525.4 320,525.4 320,570" fill="#2ad698"/><rect x="315" y="516" width="0.8" height="54" fill="#62e6b4"/><rect x="316" y="546.2" width="3.4" height="1.6" fill="#c9d6d0"/><path d="M315 516H317.8V517.2L315.5 519.8H315Z" fill="#d4d4d4"/><rect x="321" y="516" width="3" height="54" fill="#1b7a5b"/><polygon points="321,570 321,531.2 322,531.2 322,536.7 323,536.7 323,529.4 324,529.4 324,570" fill="#2ad698"/><rect x="321" y="516" width="0.8" height="54" fill="#62e6b4"/><rect x="325" y="516" width="6" height="54" fill="#1b7a5b"/><polygon points="325,570 325,532.4 326,532.4 326,535.1 327,535.1 327,535.9 328,535.9 328,522.3 329,522.3 329,533.7 330,533.7 330,526.7 331,526.7 331,570" fill="#2ad698"/><rect x="325" y="516" width="0.8" height="54" fill="#62e6b4"/><rect x="326" y="555.2" width="4.4" height="1.6" fill="#c9d6d0"/><path d="M325 516H327.8V517.2L325.5 519.8H325Z" fill="#d4d4d4"/><rect x="333" y="516" width="1" height="54" fill="#62e6b4"/><rect x="335" y="516" width="1" height="54" fill="#62e6b4"/><rect x="335" y="519" width="1" height="13.9775" fill="#3f9a7c"/><rect x="341" y="516" width="1" height="54" fill="#62e6b4"/><path d="M341 516H343.8V517.2L341.5 519.8H341Z" fill="#d4d4d4"/><rect x="361" y="516" width="1" height="54" fill="#62e6b4"/><rect x="363" y="516" width="1" height="54" fill="#62e6b4"/><rect x="378" y="516" width="1" height="54" fill="#62e6b4"/><rect x="378" y="519" width="1" height="8.86999" fill="#3f9a7c"/><rect x="386" y="516" width="1" height="54" fill="#62e6b4"/><rect x="390" y="516" width="3" height="54" fill="#1b7a5b"/><polygon points="390,570 390,517.0 391,517.0 391,528.7 392,528.7 392,527.8 393,527.8 393,570" fill="#2ad698"/><rect x="390" y="516" width="0.8" height="54" fill="#62e6b4"/><rect x="398" y="516" width="1" height="54" fill="#62e6b4"/><rect x="398" y="519" width="1" height="11.7044" fill="#3f9a7c"/><path d="M398 516H400.8V517.2L398.5 519.8H398Z" fill="#d4d4d4"/><rect x="400" y="516" width="1" height="54" fill="#62e6b4"/><rect x="400" y="519" width="1" height="19.1511" fill="#3f9a7c"/><path d="M400 516H402.8V517.2L400.5 519.8H400Z" fill="#d4d4d4"/><rect x="406" y="516" width="1" height="54" fill="#62e6b4"/><rect x="412" y="516" width="1" height="54" fill="#62e6b4"/><rect x="419" y="516" width="1" height="54" fill="#62e6b4"/><rect x="421" y="516" width="5" height="54" fill="#1b7a5b"/><polygon points="421,570 421,531.5 422,531.5 422,532.0 423,532.0 423,517.3 424,517.3 424,519.1 425,519.1 425,530.2 426,530.2 426,570" fill="#2ad698"/><rect x="421" y="516" width="0.8" height="54" fill="#62e6b4"/><rect x="422" y="554.2" width="3.4" height="1.6" fill="#c9d6d0"/><path d="M421 516H423.8V517.2L421.5 519.8H421Z" fill="#d4d4d4"/><rect x="427" y="516" width="2" height="54" fill="#1b7a5b"/><polygon points="427,570 427,521.7 428,521.7 428,527.5 429,527.5 429,570" fill="#2ad698"/><rect x="427" y="516" width="0.8" height="54" fill="#62e6b4"/><rect x="432" y="516" width="1" height="54" fill="#62e6b4"/><rect x="432" y="519" width="1" height="5.23244" fill="#3f9a7c"/><path d="M432 516H434.8V517.2L432.5 519.8H432Z" fill="#d4d4d4"/><rect x="436" y="516" width="2" height="54" fill="#1b7a5b"/><polygon points="436,570 436,532.6 437,532.6 437,524.0 438,524.0 438,570" fill="#2ad698"/><rect x="436" y="516" width="0.8" height="54" fill="#62e6b4"/><rect x="446" y="516" width="1" height="54" fill="#62e6b4"/><rect x="451" y="516" width="1" height="54" fill="#62e6b4"/><rect x="451" y="519" width="1" height="8.56127" fill="#3f9a7c"/><rect x="453" y="516" width="1" height="54" fill="#62e6b4"/><rect x="453" y="519" width="1" height="9.9383" fill="#3f9a7c"/><rect x="455" y="516" width="1" height="54" fill="#62e6b4"/><rect x="463" y="516" width="1" height="54" fill="#62e6b4"/><rect x="463" y="519" width="1" height="27.8514" fill="#3f9a7c"/><path d="M463 516H465.8V517.2L463.5 519.8H463Z" fill="#d4d4d4"/><rect x="469" y="516" width="1" height="54" fill="#62e6b4"/><rect x="469" y="519" width="1" height="10.999" fill="#3f9a7c"/><rect x="476" y="516" width="1" height="54" fill="#62e6b4"/><rect x="476" y="519" width="1" height="8.5826" fill="#3f9a7c"/><rect x="481" y="516" width="1" height="54" fill="#62e6b4"/><path d="M481 516H483.8V517.2L481.5 519.8H481Z" fill="#d4d4d4"/><rect x="491" y="516" width="1" height="54" fill="#62e6b4"/><rect x="491" y="519" width="1" height="27.1644" fill="#3f9a7c"/><rect x="493" y="516" width="1" height="54" fill="#62e6b4"/><rect x="496" y="516" width="1" height="54" fill="#62e6b4"/><path d="M496 516H498.8V517.2L496.5 519.8H496Z" fill="#d4d4d4"/><rect x="500" y="516" width="1" height="54" fill="#62e6b4"/><rect x="500" y="519" width="1" height="4.46525" fill="#3f9a7c"/><rect x="508" y="516" width="1" height="54" fill="#62e6b4"/><rect x="510" y="516" width="1" height="54" fill="#62e6b4"/><rect x="510" y="519" width="1" height="20.5408" fill="#3f9a7c"/><rect x="512" y="516" width="1" height="54" fill="#62e6b4"/><rect x="518" y="516" width="1" height="54" fill="#62e6b4"/><path d="M518 516H520.8V517.2L518.5 519.8H518Z" fill="#d4d4d4"/><rect x="540" y="516" width="1" height="54" fill="#62e6b4"/><rect x="548" y="516" width="2" height="54" fill="#1b7a5b"/><polygon points="548,570 548,519.6 549,519.6 549,517.2 550,517.2 550,570" fill="#2ad698"/><rect x="548" y="516" width="0.8" height="54" fill="#62e6b4"/><rect x="564" y="516" width="4" height="54" fill="#1b7a5b"/><polygon points="564,570 564,517.5 565,517.5 565,518.1 566,518.1 566,526.9 567,526.9 567,519.6 568,519.6 568,570" fill="#2ad698"/><rect x="564" y="516" width="0.8" height="54" fill="#62e6b4"/><rect x="565" y="555.2" width="2.4" height="1.6" fill="#c9d6d0"/><path d="M564 516H566.8V517.2L564.5 519.8H564Z" fill="#d4d4d4"/><rect x="572" y="516" width="1" height="54" fill="#62e6b4"/><rect x="574" y="516" width="3" height="54" fill="#1b7a5b"/><polygon points="574,570 574,533.6 575,533.6 575,541.6 576,541.6 576,533.1 577,533.1 577,570" fill="#2ad698"/><rect x="574" y="516" width="0.8" height="54" fill="#62e6b4"/><rect x="578" y="516" width="2" height="54" fill="#1b7a5b"/><polygon points="578,570 578,531.8 579,531.8 579,536.9 580,536.9 580,570" fill="#2ad698"/><rect x="578" y="516" width="0.8" height="54" fill="#62e6b4"/><rect x="589" y="516" width="1" height="54" fill="#62e6b4"/><rect x="591" y="516" width="1" height="54" fill="#62e6b4"/><path d="M591 516H593.8V517.2L591.5 519.8H591Z" fill="#d4d4d4"/><rect x="594" y="516" width="1" height="54" fill="#62e6b4"/><path d="M594 516H596.8V517.2L594.5 519.8H594Z" fill="#d4d4d4"/><rect x="596" y="516" width="2" height="54" fill="#1b7a5b"/><polygon points="596,570 596,523.2 597,523.2 597,528.3 598,528.3 598,570" fill="#2ad698"/><rect x="596" y="516" width="0.8" height="54" fill="#62e6b4"/><rect x="599" y="516" width="2" height="54" fill="#1b7a5b"/><polygon points="599,570 599,531.0 600,531.0 600,532.8 601,532.8 601,570" fill="#2ad698"/><rect x="599" y="516" width="0.8" height="54" fill="#62e6b4"/><rect x="602" y="516" width="1" height="54" fill="#62e6b4"/><rect x="610" y="516" width="2" height="54" fill="#1b7a5b"/><polygon points="610,570 610,521.8 611,521.8 611,531.1 612,531.1 612,570" fill="#2ad698"/><rect x="610" y="516" width="0.8" height="54" fill="#62e6b4"/><path d="M610 516H612.8V517.2L610.5 519.8H610Z" fill="#d4d4d4"/><rect x="613" y="516" width="4" height="54" fill="#1b7a5b"/><polygon points="613,570 613,543.4 614,543.4 614,545.8 615,545.8 615,540.9 616,540.9 616,547.0 617,547.0 617,570" fill="#2ad698"/><rect x="613" y="516" width="0.8" height="54" fill="#62e6b4"/><rect x="614" y="546.2" width="2.4" height="1.6" fill="#c9d6d0"/><path d="M613 516H615.8V517.2L613.5 519.8H613Z" fill="#d4d4d4"/><rect x="618" y="516" width="3" height="54" fill="#1b7a5b"/><polygon points="618,570 618,561.6 619,561.6 619,561.7 620,561.7 620,563.5 621,563.5 621,570" fill="#2ad698"/><rect x="618" y="516" width="0.8" height="54" fill="#62e6b4"/><path d="M618 516H620.8V517.2L618.5 519.8H618Z" fill="#d4d4d4"/><rect x="622" y="516" width="1" height="54" fill="#62e6b4"/><rect x="622" y="519" width="1" height="27.9409" fill="#3f9a7c"/><path d="M622 516H624.8V517.2L622.5 519.8H622Z" fill="#d4d4d4"/><rect x="624" y="516" width="2" height="54" fill="#1b7a5b"/><polygon points="624,570 624,525.4 625,525.4 625,518.7 626,518.7 626,570" fill="#2ad698"/><rect x="624" y="516" width="0.8" height="54" fill="#62e6b4"/><rect x="633" y="516" width="1" height="54" fill="#62e6b4"/><rect x="643" y="516" width="2" height="54" fill="#1b7a5b"/><polygon points="643,570 643,521.9 644,521.9 644,534.9 645,534.9 645,570" fill="#2ad698"/><rect x="643" y="516" width="0.8" height="54" fill="#62e6b4"/><rect x="648" y="516" width="1" height="54" fill="#62e6b4"/><rect x="661" y="516" width="1" height="54" fill="#62e6b4"/><rect x="661" y="519" width="1" height="17.5194" fill="#3f9a7c"/><rect x="666" y="516" width="1" height="54" fill="#62e6b4"/><rect x="677" y="516" width="1" height="54" fill="#62e6b4"/><rect x="680" y="516" width="1" height="54" fill="#62e6b4"/><rect x="689" y="516" width="1" height="54" fill="#62e6b4"/><rect x="694" y="516" width="1" height="54" fill="#62e6b4"/><rect x="694" y="519" width="1" height="13.2096" fill="#3f9a7c"/><rect x="698" y="516" width="1" height="54" fill="#62e6b4"/><rect x="704" y="516" width="1" height="54" fill="#62e6b4"/><rect x="704" y="519" width="1" height="8.93788" fill="#3f9a7c"/><rect x="711" y="516" width="1" height="54" fill="#62e6b4"/><rect x="711" y="519" width="1" height="24.2606" fill="#3f9a7c"/><rect x="713" y="516" width="1" height="54" fill="#62e6b4"/><path d="M713 516H715.8V517.2L713.5 519.8H713Z" fill="#d4d4d4"/><rect x="721" y="516" width="1" height="54" fill="#62e6b4"/><rect x="721" y="519" width="1" height="17.9202" fill="#3f9a7c"/><rect x="723" y="516" width="1" height="54" fill="#62e6b4"/><rect x="723" y="519" width="1" height="6.02718" fill="#3f9a7c"/><path d="M723 516H725.8V517.2L723.5 519.8H723Z" fill="#d4d4d4"/><rect x="756" y="516" width="6" height="54" fill="#1b7a5b"/><polygon points="756,570 756,555.8 757,555.8 757,552.6 758,552.6 758,552.3 759,552.3 759,553.9 760,553.9 760,557.3 761,557.3 761,556.0 762,556.0 762,570" fill="#2ad698"/><rect x="756" y="516" width="0.8" height="54" fill="#62e6b4"/><rect x="757" y="554.2" width="4.4" height="1.6" fill="#c9d6d0"/><path d="M756 516H758.8V517.2L756.5 519.8H756Z" fill="#d4d4d4"/><rect x="763" y="516" width="7" height="54" fill="#1b7a5b"/><polygon points="763,570 763,552.0 764,552.0 764,548.7 765,548.7 765,547.8 766,547.8 766,554.5 767,554.5 767,547.6 768,547.6 768,549.3 769,549.3 769,554.2 770,554.2 770,570" fill="#2ad698"/><rect x="763" y="516" width="0.8" height="54" fill="#62e6b4"/><rect x="764" y="555.2" width="5.4" height="1.6" fill="#c9d6d0"/><path d="M763 516H765.8V517.2L763.5 519.8H763Z" fill="#d4d4d4"/><rect x="778" y="516" width="8" height="54" fill="#1b7a5b"/><polygon points="778,570 778,539.4 779,539.4 779,536.7 780,536.7 780,532.4 781,532.4 781,533.5 782,533.5 782,531.5 783,531.5 783,538.2 784,538.2 784,535.6 785,535.6 785,541.9 786,541.9 786,570" fill="#2ad698"/><rect x="778" y="516" width="0.8" height="54" fill="#62e6b4"/><rect x="779" y="546.2" width="6.4" height="1.6" fill="#c9d6d0"/><path d="M778 516H780.8V517.2L778.5 519.8H778Z" fill="#d4d4d4"/><rect x="791" y="516" width="5" height="54" fill="#1b7a5b"/><polygon points="791,570 791,543.9 792,543.9 792,535.0 793,535.0 793,534.0 794,534.0 794,534.0 795,534.0 795,539.7 796,539.7 796,570" fill="#2ad698"/><rect x="791" y="516" width="0.8" height="54" fill="#62e6b4"/><rect x="792" y="554.2" width="3.4" height="1.6" fill="#c9d6d0"/><path d="M791 516H793.8V517.2L791.5 519.8H791Z" fill="#d4d4d4"/><rect x="797" y="516" width="2" height="54" fill="#1b7a5b"/><polygon points="797,570 797,525.9 798,525.9 798,531.4 799,531.4 799,570" fill="#2ad698"/><rect x="797" y="516" width="0.8" height="54" fill="#62e6b4"/><rect x="800" y="516" width="3" height="54" fill="#1b7a5b"/><polygon points="800,570 800,539.5 801,539.5 801,542.8 802,542.8 802,548.3 803,548.3 803,570" fill="#2ad698"/><rect x="800" y="516" width="0.8" height="54" fill="#62e6b4"/><rect x="805" y="516" width="1" height="54" fill="#62e6b4"/><rect x="805" y="519" width="1" height="24.7964" fill="#3f9a7c"/><path d="M805 516H807.8V517.2L805.5 519.8H805Z" fill="#d4d4d4"/><rect x="808" y="516" width="3" height="54" fill="#1b7a5b"/><polygon points="808,570 808,537.8 809,537.8 809,534.8 810,534.8 810,540.6 811,540.6 811,570" fill="#2ad698"/><rect x="808" y="516" width="0.8" height="54" fill="#62e6b4"/><rect x="811" y="516" width="4" height="54" fill="#1b7a5b"/><polygon points="811,570 811,531.4 812,531.4 812,537.8 813,537.8 813,531.4 814,531.4 814,543.5 815,543.5 815,570" fill="#2ad698"/><rect x="811" y="516" width="0.8" height="54" fill="#62e6b4"/><rect x="812" y="554.2" width="2.4" height="1.6" fill="#c9d6d0"/><path d="M811 516H813.8V517.2L811.5 519.8H811Z" fill="#d4d4d4"/><rect x="821" y="516" width="4" height="54" fill="#1b7a5b"/><polygon points="821,570 821,533.1 822,533.1 822,536.8 823,536.8 823,542.4 824,542.4 824,537.5 825,537.5 825,570" fill="#2ad698"/><rect x="821" y="516" width="0.8" height="54" fill="#62e6b4"/><rect x="822" y="550.2" width="2.4" height="1.6" fill="#c9d6d0"/><path d="M821 516H823.8V517.2L821.5 519.8H821Z" fill="#d4d4d4"/><rect x="826" y="516" width="2" height="54" fill="#1b7a5b"/><polygon points="826,570 826,528.3 827,528.3 827,529.6 828,529.6 828,570" fill="#2ad698"/><rect x="826" y="516" width="0.8" height="54" fill="#62e6b4"/><rect x="829" y="516" width="1" height="54" fill="#62e6b4"/><rect x="829" y="519" width="1" height="7.66991" fill="#3f9a7c"/><rect x="831" y="516" width="1" height="54" fill="#62e6b4"/><rect x="831" y="519" width="1" height="16.9388" fill="#3f9a7c"/><rect x="833" y="516" width="1" height="54" fill="#62e6b4"/><rect x="833" y="519" width="1" height="4.12833" fill="#3f9a7c"/><rect x="841" y="516" width="1" height="54" fill="#62e6b4"/><path d="M841 516H843.8V517.2L841.5 519.8H841Z" fill="#d4d4d4"/><rect x="868" y="516" width="3" height="54" fill="#1b7a5b"/><polygon points="868,570 868,542.2 869,542.2 869,536.9 870,536.9 870,547.2 871,547.2 871,570" fill="#2ad698"/><rect x="868" y="516" width="0.8" height="54" fill="#62e6b4"/><path d="M868 516H870.8V517.2L868.5 519.8H868Z" fill="#d4d4d4"/><rect x="876" y="516" width="1" height="54" fill="#62e6b4"/><rect x="876" y="519" width="1" height="28.2015" fill="#3f9a7c"/><rect x="884" y="516" width="1" height="54" fill="#62e6b4"/><rect x="893" y="516" width="1" height="54" fill="#62e6b4"/><rect x="893" y="519" width="1" height="10.4032" fill="#3f9a7c"/><rect x="898" y="516" width="1" height="54" fill="#62e6b4"/><rect x="898" y="519" width="1" height="27.4233" fill="#3f9a7c"/><rect x="906" y="516" width="1" height="54" fill="#62e6b4"/><rect x="913" y="516" width="1" height="54" fill="#62e6b4"/><rect x="913" y="519" width="1" height="14.908" fill="#3f9a7c"/><path d="M913 516H915.8V517.2L913.5 519.8H913Z" fill="#d4d4d4"/><rect x="916" y="516" width="3" height="54" fill="#1b7a5b"/><polygon points="916,570 916,545.0 917,545.0 917,536.6 918,536.6 918,546.4 919,546.4 919,570" fill="#2ad698"/><rect x="916" y="516" width="0.8" height="54" fill="#62e6b4"/><path d="M916 516H918.8V517.2L916.5 519.8H916Z" fill="#d4d4d4"/><rect x="920" y="516" width="1" height="54" fill="#62e6b4"/><rect x="920" y="519" width="1" height="21.8629" fill="#3f9a7c"/><rect x="924" y="516" width="1" height="54" fill="#62e6b4"/><rect x="924" y="519" width="1" height="20.1139" fill="#3f9a7c"/><path d="M924 516H926.8V517.2L924.5 519.8H924Z" fill="#d4d4d4"/><rect x="927" y="516" width="5" height="54" fill="#1b7a5b"/><polygon points="927,570 927,538.5 928,538.5 928,541.2 929,541.2 929,540.1 930,540.1 930,540.3 931,540.3 931,538.2 932,538.2 932,570" fill="#2ad698"/><rect x="927" y="516" width="0.8" height="54" fill="#62e6b4"/><rect x="928" y="554.2" width="3.4" height="1.6" fill="#c9d6d0"/><path d="M927 516H929.8V517.2L927.5 519.8H927Z" fill="#d4d4d4"/><rect x="950" y="516" width="4" height="54" fill="#1b7a5b"/><polygon points="950,570 950,524.6 951,524.6 951,528.3 952,528.3 952,529.6 953,529.6 953,524.0 954,524.0 954,570" fill="#2ad698"/><rect x="950" y="516" width="0.8" height="54" fill="#62e6b4"/><rect x="951" y="550.2" width="2.4" height="1.6" fill="#c9d6d0"/><path d="M950 516H952.8V517.2L950.5 519.8H950Z" fill="#d4d4d4"/><rect x="955" y="516" width="1" height="54" fill="#62e6b4"/><rect x="961" y="516" width="1" height="54" fill="#62e6b4"/><rect x="1036" y="516" width="1" height="54" fill="#62e6b4"/><rect x="1036" y="519" width="1" height="23.2601" fill="#3f9a7c"/><rect x="1041" y="516" width="1" height="54" fill="#62e6b4"/><rect x="1044" y="516" width="1" height="54" fill="#62e6b4"/><rect x="1044" y="519" width="1" height="27.9919" fill="#3f9a7c"/><path d="M1044 516H1046.8V517.2L1044.5 519.8H1044Z" fill="#d4d4d4"/><rect x="1047" y="516" width="2" height="54" fill="#1b7a5b"/><polygon points="1047,570 1047,517.8 1048,517.8 1048,532.4 1049,532.4 1049,570" fill="#2ad698"/><rect x="1047" y="516" width="0.8" height="54" fill="#62e6b4"/><path d="M1047 516H1049.8V517.2L1047.5 519.8H1047Z" fill="#d4d4d4"/><rect x="1052" y="516" width="2" height="54" fill="#1b7a5b"/><polygon points="1052,570 1052,527.7 1053,527.7 1053,531.1 1054,531.1 1054,570" fill="#2ad698"/><rect x="1052" y="516" width="0.8" height="54" fill="#62e6b4"/><rect x="1112" y="516" width="2" height="54" fill="#1b7a5b"/><polygon points="1112,570 1112,534.6 1113,534.6 1113,532.1 1114,532.1 1114,570" fill="#2ad698"/><rect x="1112" y="516" width="0.8" height="54" fill="#62e6b4"/><path d="M1112 516H1114.8V517.2L1112.5 519.8H1112Z" fill="#d4d4d4"/><rect x="1116" y="516" width="2" height="54" fill="#1b7a5b"/><polygon points="1116,570 1116,531.1 1117,531.1 1117,521.4 1118,521.4 1118,570" fill="#2ad698"/><rect x="1116" y="516" width="0.8" height="54" fill="#62e6b4"/><rect x="1122" y="516" width="1" height="54" fill="#62e6b4"/><rect x="1125" y="516" width="1" height="54" fill="#62e6b4"/><rect x="1135" y="516" width="1" height="54" fill="#62e6b4"/><rect x="1135" y="519" width="1" height="29.9633" fill="#3f9a7c"/><rect x="1138" y="516" width="1" height="54" fill="#62e6b4"/><rect x="1140" y="516" width="1" height="54" fill="#62e6b4"/><rect x="1140" y="519" width="1" height="23.8119" fill="#3f9a7c"/><rect x="1144" y="516" width="1" height="54" fill="#62e6b4"/><rect x="1146" y="516" width="1" height="54" fill="#62e6b4"/><rect x="1146" y="519" width="1" height="6.98862" fill="#3f9a7c"/><path d="M1146 516H1148.8V517.2L1146.5 519.8H1146Z" fill="#d4d4d4"/><rect x="1149" y="516" width="2" height="54" fill="#1b7a5b"/><polygon points="1149,570 1149,517.0 1150,517.0 1150,517.0 1151,517.0 1151,570" fill="#2ad698"/><rect x="1149" y="516" width="0.8" height="54" fill="#62e6b4"/><path d="M1149 516H1151.8V517.2L1149.5 519.8H1149Z" fill="#d4d4d4"/><rect x="1152" y="516" width="3" height="54" fill="#1b7a5b"/><polygon points="1152,570 1152,530.3 1153,530.3 1153,519.1 1154,519.1 1154,531.5 1155,531.5 1155,570" fill="#2ad698"/><rect x="1152" y="516" width="0.8" height="54" fill="#62e6b4"/><path d="M1152 516H1154.8V517.2L1152.5 519.8H1152Z" fill="#d4d4d4"/><rect x="1167" y="516" width="1" height="54" fill="#62e6b4"/><rect x="1167" y="519" width="1" height="15.0875" fill="#3f9a7c"/><rect x="1172" y="516" width="1" height="54" fill="#62e6b4"/><rect x="1172" y="519" width="1" height="13.702" fill="#3f9a7c"/><rect x="1179" y="516" width="1" height="54" fill="#62e6b4"/><rect x="1179" y="519" width="1" height="9.20705" fill="#3f9a7c"/><rect x="1183" y="516" width="2" height="54" fill="#1b7a5b"/><polygon points="1183,570 1183,523.4 1184,523.4 1184,529.5 1185,529.5 1185,570" fill="#2ad698"/><rect x="1183" y="516" width="0.8" height="54" fill="#62e6b4"/><path d="M1183 516H1185.8V517.2L1183.5 519.8H1183Z" fill="#d4d4d4"/><rect x="1192" y="516" width="1" height="54" fill="#62e6b4"/><rect x="1192" y="519" width="1" height="17.3266" fill="#3f9a7c"/><path d="M1192 516H1194.8V517.2L1192.5 519.8H1192Z" fill="#d4d4d4"/><rect x="1198" y="516" width="1" height="54" fill="#62e6b4"/><rect x="1200" y="516" width="4" height="54" fill="#1b7a5b"/><polygon points="1200,570 1200,523.9 1201,523.9 1201,531.3 1202,531.3 1202,523.6 1203,523.6 1203,528.4 1204,528.4 1204,570" fill="#2ad698"/><rect x="1200" y="516" width="0.8" height="54" fill="#62e6b4"/><rect x="1201" y="554.2" width="2.4" height="1.6" fill="#c9d6d0"/><path d="M1200 516H1202.8V517.2L1200.5 519.8H1200Z" fill="#d4d4d4"/><rect x="1206" y="516" width="7" height="54" fill="#1b7a5b"/><polygon points="1206,570 1206,528.8 1207,528.8 1207,528.2 1208,528.2 1208,527.6 1209,527.6 1209,534.3 1210,534.3 1210,526.3 1211,526.3 1211,526.6 1212,526.6 1212,529.6 1213,529.6 1213,570" fill="#2ad698"/><rect x="1206" y="516" width="0.8" height="54" fill="#62e6b4"/><rect x="1207" y="555.2" width="5.4" height="1.6" fill="#c9d6d0"/><path d="M1206 516H1208.8V517.2L1206.5 519.8H1206Z" fill="#d4d4d4"/><rect x="1219" y="516" width="1" height="54" fill="#62e6b4"/><rect x="1219" y="519" width="1" height="22.7885" fill="#3f9a7c"/><path d="M1219 516H1221.8V517.2L1219.5 519.8H1219Z" fill="#d4d4d4"/><rect x="1225" y="516" width="2" height="54" fill="#1b7a5b"/><polygon points="1225,570 1225,531.4 1226,531.4 1226,535.1 1227,535.1 1227,570" fill="#2ad698"/><rect x="1225" y="516" width="0.8" height="54" fill="#62e6b4"/><rect x="1232" y="516" width="1" height="54" fill="#62e6b4"/><rect x="1234" y="516" width="1" height="54" fill="#62e6b4"/><rect x="1234" y="519" width="1" height="11.0974" fill="#3f9a7c"/><rect x="1236" y="516" width="1" height="54" fill="#62e6b4"/><rect x="1236" y="519" width="1" height="9.61724" fill="#3f9a7c"/><rect x="1240" y="516" width="1" height="54" fill="#62e6b4"/><rect x="1240" y="519" width="1" height="5.99768" fill="#3f9a7c"/><rect x="1252" y="516" width="1" height="54" fill="#62e6b4"/><path d="M1252 516H1254.8V517.2L1252.5 519.8H1252Z" fill="#d4d4d4"/><rect x="1261" y="516" width="1" height="54" fill="#62e6b4"/><rect x="1261" y="519" width="1" height="14.2797" fill="#3f9a7c"/><rect x="1276" y="516" width="1" height="54" fill="#62e6b4"/><rect x="1276" y="519" width="1" height="6.80949" fill="#3f9a7c"/><path d="M1276 516H1278.8V517.2L1276.5 519.8H1276Z" fill="#d4d4d4"/><rect x="1279" y="516" width="1" height="54" fill="#62e6b4"/><rect x="1279" y="519" width="1" height="17.1238" fill="#3f9a7c"/><rect x="1282" y="516" width="3" height="54" fill="#1b7a5b"/><polygon points="1282,570 1282,542.6 1283,542.6 1283,538.9 1284,538.9 1284,538.6 1285,538.6 1285,570" fill="#2ad698"/><rect x="1282" y="516" width="0.8" height="54" fill="#62e6b4"/><rect x="1286" y="516" width="1" height="54" fill="#62e6b4"/><rect x="1323" y="516" width="1" height="54" fill="#62e6b4"/><rect x="1325" y="516" width="6" height="54" fill="#1b7a5b"/><polygon points="1325,570 1325,525.2 1326,525.2 1326,522.1 1327,522.1 1327,535.6 1328,535.6 1328,526.0 1329,526.0 1329,523.0 1330,523.0 1330,536.1 1331,536.1 1331,570" fill="#2ad698"/><rect x="1325" y="516" width="0.8" height="54" fill="#62e6b4"/><rect x="1326" y="554.2" width="4.4" height="1.6" fill="#c9d6d0"/><path d="M1325 516H1327.8V517.2L1325.5 519.8H1325Z" fill="#d4d4d4"/><rect x="1374" y="516" width="1" height="54" fill="#62e6b4"/><rect x="1376" y="516" width="2" height="54" fill="#1b7a5b"/><polygon points="1376,570 1376,524.2 1377,524.2 1377,522.9 1378,522.9 1378,570" fill="#2ad698"/><rect x="1376" y="516" width="0.8" height="54" fill="#62e6b4"/><rect x="1382" y="516" width="1" height="54" fill="#62e6b4"/><rect x="1382" y="519" width="1" height="12.1223" fill="#3f9a7c"/><rect x="1394" y="516" width="1" height="54" fill="#62e6b4"/><rect x="1401" y="516" width="1" height="54" fill="#62e6b4"/><rect x="1407" y="516" width="1" height="54" fill="#62e6b4"/><path d="M1407 516H1409.8V517.2L1407.5 519.8H1407Z" fill="#d4d4d4"/><rect x="1409" y="516" width="1" height="54" fill="#62e6b4"/><rect x="1417" y="516" width="1" height="54" fill="#62e6b4"/><rect x="1419" y="516" width="1" height="54" fill="#62e6b4"/><path d="M1419 516H1421.8V517.2L1419.5 519.8H1419Z" fill="#d4d4d4"/><rect x="1435" y="516" width="1" height="54" fill="#62e6b4"/><rect x="1435" y="519" width="1" height="14.342" fill="#3f9a7c"/><rect x="1439" y="516" width="1" height="54" fill="#62e6b4"/><rect x="1442" y="516" width="1" height="54" fill="#62e6b4"/><path d="M1442 516H1444.8V517.2L1442.5 519.8H1442Z" fill="#d4d4d4"/><rect x="1446" y="516" width="1" height="54" fill="#62e6b4"/><rect x="1453" y="516" width="1" height="54" fill="#62e6b4"/><path d="M1453 516H1455.8V517.2L1453.5 519.8H1453Z" fill="#d4d4d4"/><rect x="1464" y="516" width="1" height="54" fill="#62e6b4"/><rect x="1464" y="519" width="1" height="25.0644" fill="#3f9a7c"/><rect x="1468" y="516" width="1" height="54" fill="#62e6b4"/><rect x="1468" y="519" width="1" height="28.9588" fill="#3f9a7c"/><path d="M1468 516H1470.8V517.2L1468.5 519.8H1468Z" fill="#d4d4d4"/><rect x="1472" y="516" width="2" height="54" fill="#1b7a5b"/><polygon points="1472,570 1472,532.0 1473,532.0 1473,524.5 1474,524.5 1474,570" fill="#2ad698"/><rect x="1472" y="516" width="0.8" height="54" fill="#62e6b4"/><path d="M1472 516H1474.8V517.2L1472.5 519.8H1472Z" fill="#d4d4d4"/><rect x="1475" y="516" width="2" height="54" fill="#1b7a5b"/><polygon points="1475,570 1475,525.7 1476,525.7 1476,529.9 1477,529.9 1477,570" fill="#2ad698"/><rect x="1475" y="516" width="0.8" height="54" fill="#62e6b4"/><rect x="1489" y="516" width="2" height="54" fill="#1b7a5b"/><polygon points="1489,570 1489,522.0 1490,522.0 1490,526.2 1491,526.2 1491,570" fill="#2ad698"/><rect x="1489" y="516" width="0.8" height="54" fill="#62e6b4"/><rect x="1492" y="516" width="1" height="54" fill="#62e6b4"/><rect x="1494" y="516" width="1" height="54" fill="#62e6b4"/><rect x="1497" y="516" width="1" height="54" fill="#62e6b4"/><rect x="1502" y="516" width="1" height="54" fill="#62e6b4"/><path d="M1502 516H1504.8V517.2L1502.5 519.8H1502Z" fill="#d4d4d4"/><rect x="1504" y="516" width="2" height="54" fill="#1b7a5b"/><polygon points="1504,570 1504,522.7 1505,522.7 1505,526.7 1506,526.7 1506,570" fill="#2ad698"/><rect x="1504" y="516" width="0.8" height="54" fill="#62e6b4"/><rect x="1511" y="516" width="1" height="54" fill="#62e6b4"/><rect x="1515" y="516" width="1" height="54" fill="#62e6b4"/><rect x="1517" y="516" width="1" height="54" fill="#62e6b4"/><path d="M1517 516H1519.8V517.2L1517.5 519.8H1517Z" fill="#d4d4d4"/><rect x="1521" y="516" width="2" height="54" fill="#1b7a5b"/><polygon points="1521,570 1521,523.1 1522,523.1 1522,533.5 1523,533.5 1523,570" fill="#2ad698"/><rect x="1521" y="516" width="0.8" height="54" fill="#62e6b4"/><path d="M1521 516H1523.8V517.2L1521.5 519.8H1521Z" fill="#d4d4d4"/><rect x="1531" y="516" width="1" height="54" fill="#62e6b4"/><rect x="1538" y="516" width="1" height="54" fill="#62e6b4"/><path d="M1538 516H1540.8V517.2L1538.5 519.8H1538Z" fill="#d4d4d4"/><rect x="1540" y="516" width="1" height="54" fill="#62e6b4"/><rect x="1540" y="519" width="1" height="11.0444" fill="#3f9a7c"/><rect x="1549" y="516" width="1" height="54" fill="#62e6b4"/><path d="M1549 516H1551.8V517.2L1549.5 519.8H1549Z" fill="#d4d4d4"/><rect x="1551" y="516" width="1" height="54" fill="#62e6b4"/><path d="M1551 516H1553.8V517.2L1551.5 519.8H1551Z" fill="#d4d4d4"/><rect x="1553" y="516" width="1" height="54" fill="#62e6b4"/><rect x="1553" y="519" width="1" height="21.5833" fill="#3f9a7c"/><rect x="1562" y="516" width="1" height="54" fill="#62e6b4"/><rect x="1568" y="516" width="1" height="54" fill="#62e6b4"/><path d="M1568 516H1570.8V517.2L1568.5 519.8H1568Z" fill="#d4d4d4"/><rect x="1576" y="516" width="1" height="54" fill="#62e6b4"/><rect x="1576" y="519" width="1" height="23.3655" fill="#3f9a7c"/><rect x="1582" y="516" width="1" height="54" fill="#62e6b4"/><rect x="1582" y="519" width="1" height="7.1145" fill="#3f9a7c"/><rect x="1584" y="516" width="1" height="54" fill="#62e6b4"/><rect x="1593" y="516" width="1" height="54" fill="#62e6b4"/><rect x="1593" y="519" width="1" height="15.0334" fill="#3f9a7c"/><rect x="1619" y="516" width="1" height="54" fill="#62e6b4"/><rect x="1631" y="516" width="1" height="54" fill="#62e6b4"/><rect x="1648" y="516" width="1" height="54" fill="#62e6b4"/><rect x="1648" y="519" width="1" height="18.264" fill="#3f9a7c"/><rect x="1650" y="516" width="1" height="54" fill="#62e6b4"/><rect x="1654" y="516" width="1" height="54" fill="#62e6b4"/><rect x="1654" y="519" width="1" height="6.52244" fill="#3f9a7c"/><rect x="1657" y="516" width="1" height="54" fill="#62e6b4"/><rect x="1657" y="519" width="1" height="6.15856" fill="#3f9a7c"/><rect x="1658" y="516" width="1" height="54" fill="#62e6b4"/><rect x="1676" y="516" width="2" height="54" fill="#1b7a5b"/><polygon points="1676,570 1676,521.8 1677,521.8 1677,536.8 1678,536.8 1678,570" fill="#2ad698"/><rect x="1676" y="516" width="0.8" height="54" fill="#62e6b4"/><rect x="1681" y="516" width="1" height="54" fill="#62e6b4"/><rect x="1683" y="516" width="1" height="54" fill="#62e6b4"/><rect x="1686" y="516" width="1" height="54" fill="#62e6b4"/><rect x="1463.8" y="571" width="2.5" height="63" fill="#2ad698"/><rect x="1463.8" y="571" width="0.8" height="63" fill="#62e6b4"/><rect x="1464.6" y="575" width="1.7" height="8" fill="#2a9a78"/><rect x="1468.9" y="571" width="2.5" height="63" fill="#2ad698"/><rect x="1468.9" y="571" width="0.8" height="63" fill="#62e6b4"/><rect x="1469.7" y="575" width="1.7" height="8" fill="#2a9a78"/><rect x="1467.1" y="571" width="1.2" height="63" fill="#46b892"/><path d="M1463.8 571H1471.8L1469.5 575H1468.8L1468 573L1467 575H1466L1465.2 573L1464.4 575H1463.8Z" fill="#dcdcdc"/><rect x="485" y="574" width="1" height="60" fill="#2f6f5c"/><path d="M484.6 571H487V573L485 575H484.6Z" fill="#dcdcdc"/><rect x="1044.4" y="571" width="1" height="63" fill="#2d3b37"/><rect x="1046.6" y="571" width="1.2" height="63" fill="#3a564c"/><rect x="463.4" y="571" width="1" height="63" fill="#2b2b2b"/><rect x="1380" y="571" width="0.8" height="63" fill="#2c2c2c"/><rect x="1393.3" y="571" width="0.8" height="63" fill="#2c2c2c"/><rect x="236" y="635" width="1627" height="66" fill="#1b7a5b"/><polygon points="236,668 236,642.5 237,642.5 237,640.5 238,640.5 238,640.7 239,640.7 239,668" fill="#2ad698"/><polygon points="236,701 236,678.2 237,678.2 237,683.5 238,683.5 238,689.5 239,689.5 239,701" fill="#2ad698"/><polygon points="239,668 239,647.4 240,647.4 240,644.2 241,644.2 241,647.7 242,647.7 242,640.8 243,640.8 243,648.3 244,648.3 244,668" fill="#2ad698"/><polygon points="239,701 239,681.5 240,681.5 240,681.6 241,681.6 241,674.2 242,674.2 242,680.7 243,680.7 243,681.0 244,681.0 244,701" fill="#2ad698"/><polygon points="244,668 244,643.6 245,643.6 245,646.4 246,646.4 246,643.8 247,643.8 247,643.6 248,643.6 248,657.7 249,657.7 249,651.5 250,651.5 250,652.5 250.2,652.5 250.2,668" fill="#2ad698"/><polygon points="244,701 244,680.2 245,680.2 245,679.4 246,679.4 246,683.1 247,683.1 247,681.4 248,681.4 248,681.4 249,681.4 249,685.6 250,685.6 250,693.8 250.2,693.8 250.2,701" fill="#2ad698"/><polygon points="250.2,668 250.2,648.6 251.2,648.6 251.2,648.9 252.2,648.9 252.2,650.3 253.2,650.3 253.2,653.8 254.2,653.8 254.2,647.8 255.2,647.8 255.2,649.2 256.2,649.2 256.2,639.5 257.2,639.5 257.2,651.8 258.2,651.8 258.2,649.0 259.2,649.0 259.2,649.2 260.2,649.2 260.2,640.3 261.2,640.3 261.2,647.9 262.2,647.9 262.2,651.9 263.2,651.9 263.2,648.1 264.2,648.1 264.2,648.0 265.2,648.0 265.2,652.1 266.2,652.1 266.2,653.0 267.2,653.0 267.2,653.2 268.2,653.2 268.2,647.6 269.2,647.6 269.2,653.8 270.2,653.8 270.2,643.3 271.2,643.3 271.2,652.6 272.2,652.6 272.2,648.7 273.2,648.7 273.2,651.4 274.2,651.4 274.2,648.1 275.2,648.1 275.2,650.9 276.2,650.9 276.2,647.0 277.2,647.0 277.2,647.9 278.2,647.9 278.2,648.9 279.2,648.9 279.2,651.3 280.2,651.3 280.2,648.6 281.2,648.6 281.2,651.1 282.2,651.1 282.2,640.3 283.2,640.3 283.2,644.0 284.2,644.0 284.2,649.3 285.2,649.3 285.2,652.2 286.2,652.2 286.2,653.2 287.2,653.2 287.2,647.6 288.2,647.6 288.2,642.4 289.2,642.4 289.2,651.9 289.4,651.9 289.4,668" fill="#2ad698"/><polygon points="250.2,701 250.2,685.3 251.2,685.3 251.2,673.2 252.2,673.2 252.2,682.0 253.2,682.0 253.2,674.8 254.2,674.8 254.2,682.1 255.2,682.1 255.2,682.5 256.2,682.5 256.2,683.9 257.2,683.9 257.2,674.8 258.2,674.8 258.2,680.9 259.2,680.9 259.2,683.3 260.2,683.3 260.2,683.5 261.2,683.5 261.2,682.7 262.2,682.7 262.2,681.7 263.2,681.7 263.2,681.9 264.2,681.9 264.2,682.9 265.2,682.9 265.2,681.7 266.2,681.7 266.2,681.6 267.2,681.6 267.2,674.8 268.2,674.8 268.2,672.4 269.2,672.4 269.2,683.6 270.2,683.6 270.2,681.6 271.2,681.6 271.2,676.8 272.2,676.8 272.2,682.4 273.2,682.4 273.2,686.0 274.2,686.0 274.2,675.8 275.2,675.8 275.2,684.4 276.2,684.4 276.2,682.0 277.2,682.0 277.2,682.4 278.2,682.4 278.2,686.1 279.2,686.1 279.2,682.8 280.2,682.8 280.2,682.6 281.2,682.6 281.2,686.9 282.2,686.9 282.2,685.6 283.2,685.6 283.2,686.3 284.2,686.3 284.2,685.9 285.2,685.9 285.2,686.9 286.2,686.9 286.2,684.6 287.2,684.6 287.2,683.2 288.2,683.2 288.2,681.2 289.2,681.2 289.2,684.5 289.4,684.5 289.4,701" fill="#2ad698"/><polygon points="289.4,668 289.4,656.1 290.4,656.1 290.4,653.1 291.4,653.1 291.4,658.2 292.4,658.2 292.4,657.7 293.4,657.7 293.4,655.9 294.4,655.9 294.4,651.7 295.4,651.7 295.4,648.0 296.4,648.0 296.4,645.8 297.4,645.8 297.4,656.6 298.4,656.6 298.4,653.7 299.4,653.7 299.4,642.3 300.4,642.3 300.4,654.8 301.4,654.8 301.4,651.0 302.4,651.0 302.4,653.0 303.4,653.0 303.4,655.7 304.4,655.7 304.4,650.6 305.4,650.6 305.4,653.5 306.4,653.5 306.4,654.2 307.4,654.2 307.4,646.6 308.4,646.6 308.4,641.5 309.4,641.5 309.4,654.0 310.4,654.0 310.4,645.0 311.4,645.0 311.4,653.3 312.4,653.3 312.4,644.8 313.4,644.8 313.4,651.9 314.4,651.9 314.4,650.8 315.4,650.8 315.4,652.8 316.4,652.8 316.4,641.0 317.4,641.0 317.4,651.0 318.4,651.0 318.4,648.1 319.4,648.1 319.4,646.0 320.4,646.0 320.4,653.0 321.4,653.0 321.4,645.2 322.4,645.2 322.4,650.6 323.4,650.6 323.4,649.6 324.4,649.6 324.4,652.6 325.4,652.6 325.4,644.5 326.4,644.5 326.4,650.9 327.4,650.9 327.4,649.4 328.4,649.4 328.4,650.4 329.4,650.4 329.4,648.7 330.4,648.7 330.4,650.8 331.4,650.8 331.4,646.3 332.4,646.3 332.4,641.2 332.5,641.2 332.5,668" fill="#2ad698"/><polygon points="289.4,701 289.4,686.6 290.4,686.6 290.4,687.8 291.4,687.8 291.4,687.3 292.4,687.3 292.4,685.3 293.4,685.3 293.4,688.6 294.4,688.6 294.4,683.2 295.4,683.2 295.4,685.4 296.4,685.4 296.4,685.2 297.4,685.2 297.4,687.7 298.4,687.7 298.4,685.2 299.4,685.2 299.4,683.0 300.4,683.0 300.4,686.5 301.4,686.5 301.4,687.7 302.4,687.7 302.4,685.9 303.4,685.9 303.4,683.0 304.4,683.0 304.4,684.1 305.4,684.1 305.4,677.2 306.4,677.2 306.4,684.4 307.4,684.4 307.4,673.8 308.4,673.8 308.4,688.5 309.4,688.5 309.4,680.7 310.4,680.7 310.4,682.3 311.4,682.3 311.4,687.5 312.4,687.5 312.4,682.2 313.4,682.2 313.4,684.1 314.4,684.1 314.4,686.9 315.4,686.9 315.4,687.5 316.4,687.5 316.4,685.1 317.4,685.1 317.4,687.1 318.4,687.1 318.4,682.4 319.4,682.4 319.4,680.0 320.4,680.0 320.4,684.9 321.4,684.9 321.4,683.6 322.4,683.6 322.4,677.3 323.4,677.3 323.4,682.0 324.4,682.0 324.4,682.2 325.4,682.2 325.4,680.2 326.4,680.2 326.4,682.0 327.4,682.0 327.4,682.3 328.4,682.3 328.4,680.8 329.4,680.8 329.4,684.8 330.4,684.8 330.4,683.0 331.4,683.0 331.4,684.1 332.4,684.1 332.4,680.9 332.5,680.9 332.5,701" fill="#2ad698"/><polygon points="332.5,668 332.5,651.4 333.5,651.4 333.5,654.9 334.5,654.9 334.5,654.2 335.5,654.2 335.5,645.3 336.5,645.3 336.5,650.4 337.5,650.4 337.5,650.8 338.5,650.8 338.5,654.6 339.5,654.6 339.5,643.3 340.5,643.3 340.5,654.8 341.5,654.8 341.5,643.4 342.5,643.4 342.5,648.2 343.5,648.2 343.5,653.1 344.5,653.1 344.5,653.2 345.5,653.2 345.5,653.1 346.5,653.1 346.5,654.4 347.5,654.4 347.5,643.4 348.5,643.4 348.5,645.3 349.5,645.3 349.5,644.5 350.5,644.5 350.5,651.4 351.5,651.4 351.5,652.6 352.5,652.6 352.5,654.9 353.5,654.9 353.5,653.5 354.5,653.5 354.5,641.5 355.5,641.5 355.5,654.0 356.5,654.0 356.5,643.3 357.5,643.3 357.5,646.0 358.5,646.0 358.5,646.9 359.5,646.9 359.5,643.3 360.5,643.3 360.5,641.8 361.5,641.8 361.5,648.6 362.5,648.6 362.5,642.6 363.5,642.6 363.5,642.5 364.5,642.5 364.5,641.2 365.5,641.2 365.5,638.2 366.5,638.2 366.5,638.1 367.5,638.1 367.5,639.9 368.5,639.9 368.5,638.1 369.5,638.1 369.5,639.9 370.5,639.9 370.5,639.9 371.5,639.9 371.5,643.3 372.5,643.3 372.5,644.2 373.5,644.2 373.5,643.9 374.5,643.9 374.5,637.9 375.5,637.9 375.5,642.3 376.5,642.3 376.5,642.5 377.5,642.5 377.5,639.6 378.5,639.6 378.5,642.8 379.5,642.8 379.5,638.1 380.5,638.1 380.5,641.5 381.5,641.5 381.5,649.7 382.5,649.7 382.5,639.2 383.5,639.2 383.5,644.1 384.5,644.1 384.5,637.8 385.5,637.8 385.5,642.1 386.5,642.1 386.5,643.9 387.5,643.9 387.5,646.0 388.5,646.0 388.5,649.3 389.5,649.3 389.5,644.1 390.5,644.1 390.5,644.0 391.5,644.0 391.5,641.7 392.5,641.7 392.5,644.1 393.5,644.1 393.5,637.9 394.5,637.9 394.5,641.0 395.5,641.0 395.5,640.9 396.5,640.9 396.5,642.3 397.5,642.3 397.5,640.8 398.5,640.8 398.5,645.2 399.5,645.2 399.5,648.1 400,648.1 400,668" fill="#2ad698"/><polygon points="332.5,701 332.5,685.2 333.5,685.2 333.5,685.0 334.5,685.0 334.5,684.6 335.5,684.6 335.5,682.7 336.5,682.7 336.5,685.7 337.5,685.7 337.5,680.6 338.5,680.6 338.5,686.5 339.5,686.5 339.5,683.5 340.5,683.5 340.5,679.7 341.5,679.7 341.5,688.0 342.5,688.0 342.5,687.9 343.5,687.9 343.5,684.6 344.5,684.6 344.5,688.0 345.5,688.0 345.5,688.0 346.5,688.0 346.5,686.4 347.5,686.4 347.5,687.7 348.5,687.7 348.5,686.2 349.5,686.2 349.5,677.2 350.5,677.2 350.5,676.2 351.5,676.2 351.5,676.9 352.5,676.9 352.5,682.7 353.5,682.7 353.5,680.4 354.5,680.4 354.5,680.3 355.5,680.3 355.5,678.9 356.5,678.9 356.5,683.8 357.5,683.8 357.5,681.6 358.5,681.6 358.5,674.7 359.5,674.7 359.5,677.0 360.5,677.0 360.5,673.7 361.5,673.7 361.5,677.1 362.5,677.1 362.5,675.0 363.5,675.0 363.5,675.6 364.5,675.6 364.5,675.9 365.5,675.9 365.5,675.0 366.5,675.0 366.5,677.3 367.5,677.3 367.5,671.9 368.5,671.9 368.5,676.8 369.5,676.8 369.5,676.3 370.5,676.3 370.5,674.4 371.5,674.4 371.5,676.7 372.5,676.7 372.5,675.3 373.5,675.3 373.5,679.3 374.5,679.3 374.5,674.5 375.5,674.5 375.5,671.1 376.5,671.1 376.5,670.9 377.5,670.9 377.5,676.7 378.5,676.7 378.5,674.6 379.5,674.6 379.5,670.9 380.5,670.9 380.5,673.5 381.5,673.5 381.5,671.5 382.5,671.5 382.5,676.0 383.5,676.0 383.5,676.1 384.5,676.1 384.5,675.0 385.5,675.0 385.5,675.8 386.5,675.8 386.5,675.7 387.5,675.7 387.5,676.4 388.5,676.4 388.5,678.1 389.5,678.1 389.5,676.4 390.5,676.4 390.5,679.0 391.5,679.0 391.5,676.3 392.5,676.3 392.5,672.6 393.5,672.6 393.5,681.2 394.5,681.2 394.5,675.2 395.5,675.2 395.5,671.6 396.5,671.6 396.5,672.1 397.5,672.1 397.5,677.3 398.5,677.3 398.5,673.5 399.5,673.5 399.5,674.8 400,674.8 400,701" fill="#2ad698"/><polygon points="400,668 400,655.6 401,655.6 401,653.2 402,653.2 402,651.0 403,651.0 403,649.1 404,649.1 404,641.0 405,641.0 405,651.0 406,651.0 406,650.1 407,650.1 407,651.4 408,651.4 408,651.8 409,651.8 409,654.6 410,654.6 410,652.7 411,652.7 411,650.0 412,650.0 412,652.9 413,652.9 413,646.4 414,646.4 414,654.3 415,654.3 415,642.6 416,642.6 416,640.4 417,640.4 417,649.0 418,649.0 418,650.5 419,650.5 419,651.0 420,651.0 420,646.2 421,646.2 421,643.3 422,643.3 422,654.2 423,654.2 423,653.0 424,653.0 424,646.3 425,646.3 425,655.2 426,655.2 426,650.9 427,650.9 427,644.4 428,644.4 428,643.6 429,643.6 429,646.1 430,646.1 430,640.2 431,640.2 431,637.2 432,637.2 432,638.5 433,638.5 433,640.4 434,640.4 434,638.8 435,638.8 435,640.5 436,640.5 436,639.5 437,639.5 437,638.9 438,638.9 438,643.6 439,643.6 439,638.6 440,638.6 440,644.2 441,644.2 441,640.9 442,640.9 442,668" fill="#2ad698"/><polygon points="400,701 400,684.8 401,684.8 401,687.5 402,687.5 402,684.4 403,684.4 403,683.8 404,683.8 404,685.3 405,685.3 405,673.6 406,673.6 406,682.7 407,682.7 407,682.2 408,682.2 408,683.6 409,683.6 409,677.8 410,677.8 410,686.8 411,686.8 411,687.4 412,687.4 412,683.9 413,683.9 413,682.9 414,682.9 414,682.4 415,682.4 415,675.2 416,675.2 416,672.9 417,672.9 417,681.2 418,681.2 418,686.8 419,686.8 419,686.1 420,686.1 420,684.3 421,684.3 421,682.4 422,682.4 422,684.6 423,684.6 423,684.7 424,684.7 424,681.3 425,681.3 425,680.4 426,680.4 426,675.5 427,675.5 427,690.0 428,690.0 428,673.8 429,673.8 429,675.3 430,675.3 430,672.8 431,672.8 431,670.1 432,670.1 432,673.1 433,673.1 433,671.2 434,671.2 434,671.7 435,671.7 435,672.9 436,672.9 436,675.4 437,675.4 437,672.5 438,672.5 438,671.3 439,671.3 439,673.2 440,673.2 440,672.2 441,672.2 441,675.3 442,675.3 442,701" fill="#2ad698"/><polygon points="442,668 442,640.6 443,640.6 443,646.3 444,646.3 444,649.8 445,649.8 445,646.3 446,646.3 446,647.4 447,647.4 447,646.1 448,646.1 448,649.3 449,649.3 449,640.2 450,640.2 450,645.2 451,645.2 451,647.1 452,647.1 452,650.1 453,650.1 453,649.3 454,649.3 454,642.1 455,642.1 455,644.0 456,644.0 456,650.5 457,650.5 457,649.5 458,649.5 458,642.2 458.1,642.2 458.1,668" fill="#2ad698"/><polygon points="442,701 442,674.2 443,674.2 443,680.5 444,680.5 444,673.0 445,673.0 445,674.0 446,674.0 446,675.1 447,675.1 447,673.2 448,673.2 448,688.3 449,688.3 449,680.2 450,680.2 450,680.0 451,680.0 451,681.6 452,681.6 452,678.3 453,678.3 453,679.1 454,679.1 454,680.8 455,680.8 455,682.7 456,682.7 456,680.0 457,680.0 457,681.5 458,681.5 458,673.7 458.1,673.7 458.1,701" fill="#2ad698"/><polygon points="458.1,668 458.1,657.4 459.1,657.4 459.1,645.6 460.1,645.6 460.1,642.4 461.1,642.4 461.1,642.2 461.5,642.2 461.5,668" fill="#2ad698"/><polygon points="458.1,701 458.1,677.7 459.1,677.7 459.1,682.9 460.1,682.9 460.1,681.8 461.1,681.8 461.1,679.1 461.5,679.1 461.5,701" fill="#2ad698"/><polygon points="461.5,668 461.5,640.8 462.5,640.8 462.5,637.8 463.5,637.8 463.5,640.4 464.5,640.4 464.5,640.7 465.5,640.7 465.5,643.5 466.5,643.5 466.5,639.8 467.5,639.8 467.5,639.4 468.5,639.4 468.5,641.4 469.5,641.4 469.5,639.4 470.5,639.4 470.5,641.6 471.5,641.6 471.5,642.5 472.5,642.5 472.5,645.4 473.5,645.4 473.5,642.3 474.5,642.3 474.5,638.8 475.5,638.8 475.5,641.9 476.5,641.9 476.5,638.8 477.5,638.8 477.5,643.7 478.5,643.7 478.5,645.1 479.5,645.1 479.5,652.4 480.5,652.4 480.5,640.7 481.5,640.7 481.5,643.7 482.5,643.7 482.5,651.0 483.5,651.0 483.5,640.1 484.5,640.1 484.5,644.3 485.5,644.3 485.5,643.0 486.5,643.0 486.5,644.6 487.5,644.6 487.5,648.7 488.5,648.7 488.5,648.6 489.5,648.6 489.5,655.5 490.5,655.5 490.5,643.3 491.5,643.3 491.5,648.9 492.5,648.9 492.5,652.9 493.5,652.9 493.5,646.2 494.5,646.2 494.5,650.3 495.5,650.3 495.5,656.4 496.5,656.4 496.5,659.8 497.5,659.8 497.5,650.0 498.5,650.0 498.5,647.1 499.5,647.1 499.5,651.0 499.9,651.0 499.9,668" fill="#2ad698"/><polygon points="461.5,701 461.5,678.3 462.5,678.3 462.5,681.8 463.5,681.8 463.5,676.4 464.5,676.4 464.5,673.2 465.5,673.2 465.5,675.9 466.5,675.9 466.5,682.2 467.5,682.2 467.5,673.0 468.5,673.0 468.5,677.4 469.5,677.4 469.5,673.4 470.5,673.4 470.5,678.1 471.5,678.1 471.5,673.7 472.5,673.7 472.5,683.4 473.5,683.4 473.5,676.7 474.5,676.7 474.5,678.8 475.5,678.8 475.5,675.0 476.5,675.0 476.5,681.3 477.5,681.3 477.5,677.6 478.5,677.6 478.5,671.8 479.5,671.8 479.5,678.9 480.5,678.9 480.5,679.1 481.5,679.1 481.5,674.7 482.5,674.7 482.5,678.6 483.5,678.6 483.5,676.0 484.5,676.0 484.5,676.5 485.5,676.5 485.5,672.8 486.5,672.8 486.5,679.4 487.5,679.4 487.5,677.3 488.5,677.3 488.5,684.8 489.5,684.8 489.5,679.4 490.5,679.4 490.5,675.7 491.5,675.7 491.5,683.4 492.5,683.4 492.5,681.4 493.5,681.4 493.5,690.4 494.5,690.4 494.5,679.6 495.5,679.6 495.5,693.0 496.5,693.0 496.5,683.5 497.5,683.5 497.5,679.2 498.5,679.2 498.5,672.5 499.5,672.5 499.5,677.9 499.9,677.9 499.9,701" fill="#2ad698"/><polygon points="499.9,668 499.9,650.6 500.9,650.6 500.9,653.0 501.9,653.0 501.9,652.4 502.9,652.4 502.9,654.1 503.9,654.1 503.9,651.7 504.9,651.7 504.9,647.8 505.9,647.8 505.9,653.0 506.9,653.0 506.9,640.9 507.9,640.9 507.9,643.4 508.9,643.4 508.9,651.2 509.9,651.2 509.9,653.7 510.9,653.7 510.9,651.8 511.9,651.8 511.9,650.3 512.9,650.3 512.9,638.9 513.9,638.9 513.9,652.8 514.9,652.8 514.9,646.4 515.9,646.4 515.9,652.7 516.9,652.7 516.9,642.2 517.9,642.2 517.9,651.3 518.9,651.3 518.9,646.6 519.9,646.6 519.9,651.5 520.9,651.5 520.9,646.8 521.9,646.8 521.9,648.5 522.9,648.5 522.9,643.7 523.9,643.7 523.9,641.7 524.4,641.7 524.4,668" fill="#2ad698"/><polygon points="499.9,701 499.9,687.4 500.9,687.4 500.9,677.5 501.9,677.5 501.9,681.6 502.9,681.6 502.9,684.2 503.9,684.2 503.9,682.5 504.9,682.5 504.9,684.2 505.9,684.2 505.9,675.7 506.9,675.7 506.9,685.8 507.9,685.8 507.9,682.2 508.9,682.2 508.9,680.4 509.9,680.4 509.9,685.8 510.9,685.8 510.9,683.8 511.9,683.8 511.9,681.0 512.9,681.0 512.9,682.0 513.9,682.0 513.9,682.6 514.9,682.6 514.9,684.0 515.9,684.0 515.9,681.5 516.9,681.5 516.9,681.2 517.9,681.2 517.9,682.2 518.9,682.2 518.9,682.8 519.9,682.8 519.9,671.5 520.9,671.5 520.9,683.6 521.9,683.6 521.9,678.6 522.9,678.6 522.9,682.9 523.9,682.9 523.9,678.4 524.4,678.4 524.4,701" fill="#2ad698"/><polygon points="524.4,668 524.4,637.9 525.4,637.9 525.4,641.4 526.4,641.4 526.4,643.5 527.4,643.5 527.4,641.7 528.4,641.7 528.4,637.5 529.4,637.5 529.4,668" fill="#2ad698"/><polygon points="524.4,701 524.4,672.8 525.4,672.8 525.4,672.1 526.4,672.1 526.4,671.5 527.4,671.5 527.4,673.7 528.4,673.7 528.4,674.4 529.4,674.4 529.4,701" fill="#2ad698"/><polygon points="529.4,668 529.4,637.8 530.4,637.8 530.4,645.0 531.4,645.0 531.4,639.2 532.4,639.2 532.4,640.5 533.4,640.5 533.4,640.7 534.4,640.7 534.4,637.5 535.4,637.5 535.4,639.6 536.4,639.6 536.4,640.4 537.4,640.4 537.4,641.4 538.4,641.4 538.4,638.7 539.4,638.7 539.4,639.1 540.4,639.1 540.4,640.0 541.4,640.0 541.4,639.7 542.4,639.7 542.4,637.9 543.4,637.9 543.4,638.2 544.4,638.2 544.4,640.2 545.4,640.2 545.4,644.4 546.4,644.4 546.4,641.4 547.4,641.4 547.4,640.9 548.4,640.9 548.4,639.4 549.4,639.4 549.4,639.2 550.4,639.2 550.4,641.3 551.2,641.3 551.2,668" fill="#2ad698"/><polygon points="529.4,701 529.4,670.8 530.4,670.8 530.4,670.5 531.4,670.5 531.4,671.1 532.4,671.1 532.4,674.9 533.4,674.9 533.4,670.3 534.4,670.3 534.4,677.1 535.4,677.1 535.4,672.8 536.4,672.8 536.4,672.7 537.4,672.7 537.4,673.4 538.4,673.4 538.4,672.4 539.4,672.4 539.4,671.0 540.4,671.0 540.4,673.7 541.4,673.7 541.4,673.4 542.4,673.4 542.4,673.4 543.4,673.4 543.4,672.3 544.4,672.3 544.4,674.3 545.4,674.3 545.4,670.8 546.4,670.8 546.4,670.4 547.4,670.4 547.4,670.8 548.4,670.8 548.4,673.3 549.4,673.3 549.4,672.5 550.4,672.5 550.4,671.3 551.2,671.3 551.2,701" fill="#2ad698"/><polygon points="551.2,668 551.2,643.8 552.2,643.8 552.2,642.6 553.2,642.6 553.2,642.2 554.2,642.2 554.2,639.0 555.2,639.0 555.2,640.5 556.2,640.5 556.2,646.2 557.2,646.2 557.2,640.0 558.2,640.0 558.2,642.9 559.2,642.9 559.2,643.8 560.2,643.8 560.2,641.1 561.2,641.1 561.2,643.8 562.2,643.8 562.2,637.8 563.2,637.8 563.2,646.5 564.2,646.5 564.2,648.3 565.2,648.3 565.2,643.8 566.2,643.8 566.2,640.0 567.2,640.0 567.2,640.8 568.2,640.8 568.2,641.0 569.2,641.0 569.2,644.5 570.2,644.5 570.2,642.7 571.2,642.7 571.2,641.0 572.2,641.0 572.2,647.2 573.2,647.2 573.2,638.7 574.2,638.7 574.2,640.4 575.2,640.4 575.2,639.6 576.2,639.6 576.2,643.2 577.2,643.2 577.2,641.3 578.2,641.3 578.2,638.4 579.2,638.4 579.2,641.9 580.2,641.9 580.2,643.0 581.2,643.0 581.2,643.3 582.2,643.3 582.2,638.1 583.2,638.1 583.2,643.6 584.2,643.6 584.2,640.9 585.2,640.9 585.2,642.9 586.2,642.9 586.2,641.0 587.2,641.0 587.2,639.6 588.2,639.6 588.2,642.0 589.2,642.0 589.2,641.9 590.2,641.9 590.2,646.8 591.2,646.8 591.2,641.6 592.2,641.6 592.2,648.2 592.7,648.2 592.7,668" fill="#2ad698"/><polygon points="551.2,701 551.2,675.5 552.2,675.5 552.2,673.9 553.2,673.9 553.2,671.4 554.2,671.4 554.2,672.5 555.2,672.5 555.2,671.3 556.2,671.3 556.2,675.4 557.2,675.4 557.2,675.1 558.2,675.1 558.2,678.3 559.2,678.3 559.2,673.6 560.2,673.6 560.2,677.8 561.2,677.8 561.2,672.7 562.2,672.7 562.2,674.3 563.2,674.3 563.2,676.0 564.2,676.0 564.2,671.3 565.2,671.3 565.2,674.5 566.2,674.5 566.2,673.1 567.2,673.1 567.2,674.0 568.2,674.0 568.2,676.6 569.2,676.6 569.2,672.1 570.2,672.1 570.2,681.4 571.2,681.4 571.2,672.9 572.2,672.9 572.2,672.7 573.2,672.7 573.2,673.9 574.2,673.9 574.2,674.7 575.2,674.7 575.2,673.6 576.2,673.6 576.2,675.8 577.2,675.8 577.2,671.5 578.2,671.5 578.2,673.8 579.2,673.8 579.2,672.9 580.2,672.9 580.2,671.2 581.2,671.2 581.2,671.9 582.2,671.9 582.2,675.1 583.2,675.1 583.2,671.4 584.2,671.4 584.2,680.9 585.2,680.9 585.2,672.2 586.2,672.2 586.2,675.1 587.2,675.1 587.2,674.2 588.2,674.2 588.2,679.0 589.2,679.0 589.2,672.9 590.2,672.9 590.2,673.0 591.2,673.0 591.2,675.0 592.2,675.0 592.2,671.7 592.7,671.7 592.7,701" fill="#2ad698"/><polygon points="592.7,668 592.7,645.3 593.7,645.3 593.7,642.3 594.7,642.3 594.7,639.6 595.7,639.6 595.7,644.7 596.7,644.7 596.7,642.1 597.7,642.1 597.7,639.3 598.7,639.3 598.7,643.0 599.7,643.0 599.7,642.8 600.7,642.8 600.7,645.4 601.7,645.4 601.7,646.6 602.7,646.6 602.7,643.4 603.7,643.4 603.7,646.3 604.7,646.3 604.7,638.8 605.7,638.8 605.7,645.2 606.7,645.2 606.7,646.4 607.7,646.4 607.7,647.0 608.7,647.0 608.7,646.1 609.7,646.1 609.7,645.2 610.7,645.2 610.7,645.0 611.7,645.0 611.7,645.9 612.7,645.9 612.7,643.1 613.7,643.1 613.7,644.7 614.7,644.7 614.7,646.0 615.7,646.0 615.7,641.0 616.7,641.0 616.7,648.8 617.7,648.8 617.7,642.4 618.7,642.4 618.7,647.1 619.7,647.1 619.7,643.4 620.7,643.4 620.7,646.7 621.7,646.7 621.7,644.2 622.7,644.2 622.7,649.5 623.7,649.5 623.7,647.0 624.7,647.0 624.7,644.6 625.7,644.6 625.7,644.6 626.7,644.6 626.7,640.0 627.7,640.0 627.7,644.8 628.7,644.8 628.7,649.6 629.7,649.6 629.7,650.0 630.7,650.0 630.7,648.9 631.7,648.9 631.7,652.2 632.7,652.2 632.7,651.9 633.7,651.9 633.7,651.0 634.7,651.0 634.7,649.7 635.7,649.7 635.7,651.9 636.7,651.9 636.7,651.0 637,651.0 637,668" fill="#2ad698"/><polygon points="592.7,701 592.7,672.8 593.7,672.8 593.7,674.4 594.7,674.4 594.7,678.8 595.7,678.8 595.7,675.7 596.7,675.7 596.7,674.0 597.7,674.0 597.7,676.3 598.7,676.3 598.7,673.1 599.7,673.1 599.7,675.5 600.7,675.5 600.7,674.7 601.7,674.7 601.7,678.0 602.7,678.0 602.7,675.2 603.7,675.2 603.7,679.2 604.7,679.2 604.7,675.5 605.7,675.5 605.7,679.5 606.7,679.5 606.7,687.1 607.7,687.1 607.7,677.8 608.7,677.8 608.7,678.0 609.7,678.0 609.7,676.9 610.7,676.9 610.7,686.5 611.7,686.5 611.7,674.4 612.7,674.4 612.7,680.2 613.7,680.2 613.7,677.9 614.7,677.9 614.7,683.0 615.7,683.0 615.7,676.2 616.7,676.2 616.7,679.1 617.7,679.1 617.7,674.1 618.7,674.1 618.7,675.7 619.7,675.7 619.7,672.1 620.7,672.1 620.7,680.0 621.7,680.0 621.7,674.6 622.7,674.6 622.7,674.4 623.7,674.4 623.7,675.0 624.7,675.0 624.7,674.6 625.7,674.6 625.7,680.4 626.7,680.4 626.7,674.3 627.7,674.3 627.7,675.1 628.7,675.1 628.7,682.1 629.7,682.1 629.7,683.0 630.7,683.0 630.7,680.5 631.7,680.5 631.7,681.5 632.7,681.5 632.7,682.6 633.7,682.6 633.7,685.1 634.7,685.1 634.7,679.9 635.7,679.9 635.7,682.5 636.7,682.5 636.7,683.7 637,683.7 637,701" fill="#2ad698"/><polygon points="637,668 637,642.7 638,642.7 638,639.9 639,639.9 639,643.2 640,643.2 640,641.3 641,641.3 641,646.4 642,646.4 642,653.7 642.5,653.7 642.5,668" fill="#2ad698"/><polygon points="637,701 637,672.5 638,672.5 638,679.9 639,679.9 639,673.7 640,673.7 640,674.6 641,674.6 641,672.9 642,672.9 642,672.0 642.5,672.0 642.5,701" fill="#2ad698"/><polygon points="642.5,668 642.5,645.0 643.5,645.0 643.5,644.3 644.5,644.3 644.5,640.4 645.5,640.4 645.5,644.9 646.5,644.9 646.5,648.0 647.5,648.0 647.5,654.7 648.5,654.7 648.5,641.8 649.5,641.8 649.5,643.2 650.5,643.2 650.5,641.0 651.5,641.0 651.5,646.6 652.5,646.6 652.5,646.2 653.5,646.2 653.5,648.7 654.5,648.7 654.5,646.7 654.9,646.7 654.9,668" fill="#2ad698"/><polygon points="642.5,701 642.5,673.5 643.5,673.5 643.5,680.4 644.5,680.4 644.5,676.6 645.5,676.6 645.5,681.7 646.5,681.7 646.5,680.2 647.5,680.2 647.5,675.1 648.5,675.1 648.5,678.5 649.5,678.5 649.5,677.5 650.5,677.5 650.5,687.2 651.5,687.2 651.5,690.3 652.5,690.3 652.5,686.0 653.5,686.0 653.5,680.3 654.5,680.3 654.5,682.7 654.9,682.7 654.9,701" fill="#2ad698"/><polygon points="654.9,668 654.9,644.1 655.9,644.1 655.9,649.0 656.9,649.0 656.9,643.0 657.9,643.0 657.9,658.1 658.9,658.1 658.9,653.4 659.9,653.4 659.9,650.8 660.9,650.8 660.9,646.4 661.9,646.4 661.9,648.4 662.9,648.4 662.9,653.9 663.9,653.9 663.9,643.5 664.9,643.5 664.9,646.9 665.9,646.9 665.9,648.7 666.9,648.7 666.9,651.9 667.9,651.9 667.9,644.0 668.9,644.0 668.9,644.9 669.9,644.9 669.9,647.9 670.9,647.9 670.9,647.0 671.9,647.0 671.9,646.8 672.9,646.8 672.9,643.1 673.9,643.1 673.9,642.3 674.9,642.3 674.9,641.9 675.9,641.9 675.9,643.1 676.9,643.1 676.9,641.0 677.9,641.0 677.9,642.1 678.9,642.1 678.9,638.1 679.9,638.1 679.9,637.3 680.9,637.3 680.9,641.7 681.9,641.7 681.9,639.4 682.9,639.4 682.9,642.0 683.9,642.0 683.9,640.3 684.9,640.3 684.9,639.0 685.9,639.0 685.9,639.3 686.9,639.3 686.9,640.4 687.9,640.4 687.9,637.7 688.9,637.7 688.9,637.0 689.9,637.0 689.9,642.6 690.9,642.6 690.9,643.6 691.9,643.6 691.9,643.5 692.9,643.5 692.9,640.7 693.9,640.7 693.9,641.3 694.9,641.3 694.9,640.1 695.9,640.1 695.9,637.2 696.9,637.2 696.9,641.3 697.6,641.3 697.6,668" fill="#2ad698"/><polygon points="654.9,701 654.9,681.7 655.9,681.7 655.9,682.8 656.9,682.8 656.9,681.3 657.9,681.3 657.9,680.8 658.9,680.8 658.9,686.0 659.9,686.0 659.9,675.4 660.9,675.4 660.9,675.8 661.9,675.8 661.9,682.5 662.9,682.5 662.9,676.9 663.9,676.9 663.9,679.5 664.9,679.5 664.9,679.9 665.9,679.9 665.9,681.9 666.9,681.9 666.9,683.6 667.9,683.6 667.9,681.0 668.9,681.0 668.9,678.9 669.9,678.9 669.9,674.6 670.9,674.6 670.9,679.6 671.9,679.6 671.9,677.8 672.9,677.8 672.9,675.2 673.9,675.2 673.9,673.1 674.9,673.1 674.9,674.4 675.9,674.4 675.9,671.8 676.9,671.8 676.9,672.1 677.9,672.1 677.9,672.2 678.9,672.2 678.9,675.9 679.9,675.9 679.9,670.1 680.9,670.1 680.9,671.7 681.9,671.7 681.9,671.1 682.9,671.1 682.9,672.5 683.9,672.5 683.9,674.3 684.9,674.3 684.9,672.9 685.9,672.9 685.9,674.3 686.9,674.3 686.9,671.3 687.9,671.3 687.9,672.4 688.9,672.4 688.9,670.2 689.9,670.2 689.9,673.4 690.9,673.4 690.9,677.2 691.9,677.2 691.9,671.4 692.9,671.4 692.9,670.3 693.9,670.3 693.9,671.1 694.9,671.1 694.9,670.5 695.9,670.5 695.9,671.5 696.9,671.5 696.9,672.9 697.6,672.9 697.6,701" fill="#2ad698"/><polygon points="697.6,668 697.6,639.9 698.6,639.9 698.6,641.7 699.6,641.7 699.6,638.8 700.6,638.8 700.6,640.2 701.6,640.2 701.6,640.9 702.6,640.9 702.6,638.6 703.6,638.6 703.6,641.9 704.6,641.9 704.6,639.9 705.6,639.9 705.6,639.5 706.6,639.5 706.6,639.7 707.6,639.7 707.6,638.7 708.6,638.7 708.6,636.9 709.6,636.9 709.6,637.9 710.6,637.9 710.6,638.7 711.6,638.7 711.6,640.9 712.6,640.9 712.6,638.0 713.6,638.0 713.6,640.8 714.6,640.8 714.6,637.9 715.6,637.9 715.6,639.6 716.6,639.6 716.6,637.9 717.6,637.9 717.6,638.3 718.6,638.3 718.6,640.1 719.6,640.1 719.6,638.7 720.6,638.7 720.6,638.7 721.6,638.7 721.6,644.0 722.6,644.0 722.6,639.4 723.6,639.4 723.6,640.0 724.6,640.0 724.6,638.9 725.6,638.9 725.6,637.2 726.6,637.2 726.6,639.1 727.6,639.1 727.6,638.5 728.6,638.5 728.6,640.2 729.6,640.2 729.6,639.6 730.6,639.6 730.6,640.6 731.6,640.6 731.6,638.2 732.6,638.2 732.6,639.1 733.6,639.1 733.6,639.9 734.6,639.9 734.6,637.9 735.6,637.9 735.6,639.4 736.6,639.4 736.6,645.1 737.6,645.1 737.6,637.4 738.6,637.4 738.6,644.2 739.6,644.2 739.6,638.9 740.6,638.9 740.6,643.4 741.6,643.4 741.6,638.4 742.6,638.4 742.6,643.4 743.6,643.4 743.6,640.8 744.6,640.8 744.6,641.1 745.6,641.1 745.6,644.4 746.6,644.4 746.6,637.0 747.6,637.0 747.6,637.9 748.6,637.9 748.6,640.3 749.6,640.3 749.6,636.8 750.6,636.8 750.6,637.2 751.6,637.2 751.6,641.6 751.7,641.6 751.7,668" fill="#2ad698"/><polygon points="697.6,701 697.6,671.0 698.6,671.0 698.6,675.0 699.6,675.0 699.6,671.6 700.6,671.6 700.6,675.0 701.6,675.0 701.6,673.5 702.6,673.5 702.6,674.2 703.6,674.2 703.6,672.7 704.6,672.7 704.6,672.1 705.6,672.1 705.6,671.8 706.6,671.8 706.6,672.9 707.6,672.9 707.6,672.0 708.6,672.0 708.6,671.7 709.6,671.7 709.6,671.8 710.6,671.8 710.6,677.7 711.6,677.7 711.6,670.4 712.6,670.4 712.6,678.2 713.6,678.2 713.6,675.0 714.6,675.0 714.6,674.5 715.6,674.5 715.6,673.9 716.6,673.9 716.6,671.1 717.6,671.1 717.6,673.2 718.6,673.2 718.6,670.0 719.6,670.0 719.6,673.4 720.6,673.4 720.6,673.0 721.6,673.0 721.6,673.5 722.6,673.5 722.6,672.6 723.6,672.6 723.6,671.2 724.6,671.2 724.6,671.6 725.6,671.6 725.6,673.4 726.6,673.4 726.6,672.4 727.6,672.4 727.6,677.4 728.6,677.4 728.6,676.8 729.6,676.8 729.6,673.9 730.6,673.9 730.6,669.8 731.6,669.8 731.6,670.5 732.6,670.5 732.6,674.5 733.6,674.5 733.6,672.4 734.6,672.4 734.6,673.3 735.6,673.3 735.6,673.7 736.6,673.7 736.6,672.0 737.6,672.0 737.6,673.2 738.6,673.2 738.6,673.9 739.6,673.9 739.6,674.1 740.6,674.1 740.6,673.2 741.6,673.2 741.6,673.2 742.6,673.2 742.6,673.2 743.6,673.2 743.6,677.0 744.6,677.0 744.6,675.7 745.6,675.7 745.6,675.7 746.6,675.7 746.6,673.2 747.6,673.2 747.6,672.7 748.6,672.7 748.6,674.4 749.6,674.4 749.6,674.3 750.6,674.3 750.6,672.5 751.6,672.5 751.6,671.7 751.7,671.7 751.7,701" fill="#2ad698"/><polygon points="751.7,668 751.7,640.1 752.7,640.1 752.7,641.1 753.7,641.1 753.7,638.9 754.7,638.9 754.7,637.1 755.7,637.1 755.7,640.1 756.7,640.1 756.7,637.5 757.7,637.5 757.7,639.3 758.7,639.3 758.7,639.0 759.7,639.0 759.7,637.4 760.7,637.4 760.7,640.8 761.7,640.8 761.7,646.7 762.7,646.7 762.7,640.8 763.7,640.8 763.7,643.5 764.7,643.5 764.7,642.1 765.7,642.1 765.7,641.9 766.7,641.9 766.7,638.5 767.7,638.5 767.7,641.7 768.7,641.7 768.7,641.9 769.7,641.9 769.7,643.0 770.7,643.0 770.7,642.5 771.7,642.5 771.7,641.2 772.7,641.2 772.7,640.5 773.7,640.5 773.7,637.6 774.7,637.6 774.7,638.2 775.7,638.2 775.7,642.2 776.7,642.2 776.7,639.4 777.7,639.4 777.7,641.3 778.7,641.3 778.7,640.6 779.7,640.6 779.7,640.3 780.7,640.3 780.7,643.2 781.7,643.2 781.7,640.7 782.7,640.7 782.7,641.7 783.7,641.7 783.7,642.3 784.7,642.3 784.7,637.9 785.7,637.9 785.7,643.3 786.7,643.3 786.7,639.5 787.7,639.5 787.7,643.5 788.7,643.5 788.7,643.0 789.7,643.0 789.7,645.2 790.7,645.2 790.7,651.8 791.7,651.8 791.7,650.1 792.7,650.1 792.7,648.5 793.7,648.5 793.7,647.2 794.7,647.2 794.7,646.7 795.7,646.7 795.7,655.3 796.7,655.3 796.7,644.7 797.7,644.7 797.7,646.3 798.7,646.3 798.7,638.9 799.7,638.9 799.7,639.5 800.7,639.5 800.7,640.7 801.7,640.7 801.7,642.3 802.7,642.3 802.7,637.8 803.7,637.8 803.7,642.9 804.7,642.9 804.7,641.5 805.7,641.5 805.7,638.9 806.7,638.9 806.7,647.4 807.7,647.4 807.7,641.3 808.7,641.3 808.7,644.6 809.7,644.6 809.7,644.1 810.7,644.1 810.7,641.0 811.7,641.0 811.7,642.8 812.7,642.8 812.7,637.6 813.7,637.6 813.7,644.2 814.7,644.2 814.7,639.4 815.7,639.4 815.7,668" fill="#2ad698"/><polygon points="751.7,701 751.7,676.8 752.7,676.8 752.7,674.5 753.7,674.5 753.7,671.2 754.7,671.2 754.7,676.9 755.7,676.9 755.7,671.0 756.7,671.0 756.7,671.2 757.7,671.2 757.7,676.7 758.7,676.7 758.7,674.5 759.7,674.5 759.7,675.9 760.7,675.9 760.7,672.2 761.7,672.2 761.7,674.5 762.7,674.5 762.7,674.8 763.7,674.8 763.7,675.2 764.7,675.2 764.7,671.0 765.7,671.0 765.7,676.5 766.7,676.5 766.7,671.9 767.7,671.9 767.7,671.5 768.7,671.5 768.7,682.2 769.7,682.2 769.7,674.9 770.7,674.9 770.7,673.7 771.7,673.7 771.7,678.0 772.7,678.0 772.7,680.9 773.7,680.9 773.7,674.8 774.7,674.8 774.7,672.0 775.7,672.0 775.7,675.9 776.7,675.9 776.7,679.0 777.7,679.0 777.7,670.8 778.7,670.8 778.7,673.8 779.7,673.8 779.7,675.5 780.7,675.5 780.7,670.9 781.7,670.9 781.7,675.6 782.7,675.6 782.7,673.3 783.7,673.3 783.7,672.9 784.7,672.9 784.7,672.2 785.7,672.2 785.7,671.9 786.7,671.9 786.7,676.3 787.7,676.3 787.7,680.5 788.7,680.5 788.7,681.6 789.7,681.6 789.7,682.3 790.7,682.3 790.7,673.0 791.7,673.0 791.7,686.8 792.7,686.8 792.7,687.9 793.7,687.9 793.7,686.2 794.7,686.2 794.7,687.8 795.7,687.8 795.7,686.8 796.7,686.8 796.7,673.5 797.7,673.5 797.7,684.0 798.7,684.0 798.7,674.2 799.7,674.2 799.7,687.9 800.7,687.9 800.7,674.8 801.7,674.8 801.7,672.7 802.7,672.7 802.7,676.9 803.7,676.9 803.7,671.2 804.7,671.2 804.7,676.0 805.7,676.0 805.7,674.9 806.7,674.9 806.7,682.3 807.7,682.3 807.7,677.9 808.7,677.9 808.7,672.9 809.7,672.9 809.7,673.4 810.7,673.4 810.7,675.4 811.7,675.4 811.7,677.7 812.7,677.7 812.7,677.8 813.7,677.8 813.7,676.6 814.7,676.6 814.7,674.4 815.7,674.4 815.7,701" fill="#2ad698"/><polygon points="815.7,668 815.7,639.4 816.7,639.4 816.7,638.9 817.7,638.9 817.7,643.5 818.7,643.5 818.7,639.0 819.7,639.0 819.7,641.8 820.7,641.8 820.7,668" fill="#2ad698"/><polygon points="815.7,701 815.7,675.4 816.7,675.4 816.7,670.8 817.7,670.8 817.7,671.1 818.7,671.1 818.7,675.2 819.7,675.2 819.7,676.1 820.7,676.1 820.7,701" fill="#2ad698"/><polygon points="820.7,668 820.7,640.6 821.7,640.6 821.7,642.2 822.7,642.2 822.7,642.6 823.7,642.6 823.7,636.9 824.7,636.9 824.7,640.4 825.7,640.4 825.7,642.1 826.7,642.1 826.7,636.8 827.7,636.8 827.7,638.6 828.7,638.6 828.7,638.9 829.7,638.9 829.7,639.9 830.7,639.9 830.7,642.4 831.7,642.4 831.7,638.4 832.7,638.4 832.7,641.9 833.7,641.9 833.7,639.3 834.7,639.3 834.7,638.5 835.7,638.5 835.7,637.2 836.7,637.2 836.7,641.0 837.7,641.0 837.7,638.1 838.7,638.1 838.7,639.1 839.7,639.1 839.7,640.5 840.7,640.5 840.7,644.0 841.7,644.0 841.7,637.5 842.7,637.5 842.7,641.3 843.7,641.3 843.7,638.4 844.7,638.4 844.7,639.8 845.7,639.8 845.7,640.7 846.7,640.7 846.7,637.8 847.7,637.8 847.7,638.8 848.7,638.8 848.7,641.4 849.7,641.4 849.7,639.5 850.7,639.5 850.7,641.1 851.7,641.1 851.7,641.6 852.7,641.6 852.7,638.2 853.7,638.2 853.7,641.8 854.7,641.8 854.7,639.6 855.7,639.6 855.7,640.1 856.7,640.1 856.7,637.6 857.7,637.6 857.7,639.8 858.6,639.8 858.6,668" fill="#2ad698"/><polygon points="820.7,701 820.7,673.1 821.7,673.1 821.7,671.8 822.7,671.8 822.7,674.2 823.7,674.2 823.7,673.1 824.7,673.1 824.7,673.1 825.7,673.1 825.7,673.9 826.7,673.9 826.7,672.8 827.7,672.8 827.7,673.1 828.7,673.1 828.7,672.4 829.7,672.4 829.7,673.6 830.7,673.6 830.7,673.8 831.7,673.8 831.7,669.9 832.7,669.9 832.7,670.2 833.7,670.2 833.7,673.9 834.7,673.9 834.7,672.1 835.7,672.1 835.7,671.9 836.7,671.9 836.7,673.0 837.7,673.0 837.7,670.5 838.7,670.5 838.7,672.5 839.7,672.5 839.7,676.5 840.7,676.5 840.7,673.3 841.7,673.3 841.7,676.4 842.7,676.4 842.7,670.0 843.7,670.0 843.7,673.5 844.7,673.5 844.7,672.9 845.7,672.9 845.7,671.5 846.7,671.5 846.7,674.5 847.7,674.5 847.7,670.6 848.7,670.6 848.7,673.5 849.7,673.5 849.7,673.2 850.7,673.2 850.7,672.6 851.7,672.6 851.7,674.3 852.7,674.3 852.7,669.9 853.7,669.9 853.7,672.7 854.7,672.7 854.7,671.2 855.7,671.2 855.7,672.5 856.7,672.5 856.7,673.1 857.7,673.1 857.7,672.4 858.6,672.4 858.6,701" fill="#2ad698"/><polygon points="858.6,668 858.6,644.4 859.6,644.4 859.6,645.4 860.6,645.4 860.6,642.6 861.6,642.6 861.6,645.3 862.6,645.3 862.6,640.1 863.6,640.1 863.6,639.3 864.6,639.3 864.6,638.2 865.6,638.2 865.6,643.8 866.6,643.8 866.6,639.2 867.6,639.2 867.6,642.1 868.6,642.1 868.6,638.1 869.6,638.1 869.6,642.3 870.6,642.3 870.6,639.4 871.6,639.4 871.6,640.2 872.6,640.2 872.6,640.3 873.6,640.3 873.6,638.8 874.6,638.8 874.6,642.7 875.6,642.7 875.6,643.5 876.6,643.5 876.6,643.6 877.6,643.6 877.6,640.8 878.6,640.8 878.6,638.6 879.6,638.6 879.6,639.5 880.6,639.5 880.6,639.2 881.6,639.2 881.6,642.4 882.6,642.4 882.6,645.5 883.6,645.5 883.6,642.6 884.6,642.6 884.6,645.5 885.6,645.5 885.6,638.5 886.6,638.5 886.6,640.1 887.6,640.1 887.6,642.3 888.6,642.3 888.6,638.0 889.6,638.0 889.6,643.6 890.6,643.6 890.6,643.3 891.6,643.3 891.6,641.7 892.6,641.7 892.6,638.9 893.6,638.9 893.6,638.0 894.6,638.0 894.6,641.4 895.6,641.4 895.6,639.0 896.6,639.0 896.6,642.6 897.6,642.6 897.6,640.2 898.6,640.2 898.6,644.2 899.6,644.2 899.6,642.9 900.6,642.9 900.6,640.6 901.6,640.6 901.6,643.7 902.6,643.7 902.6,642.6 903.6,642.6 903.6,642.0 904.6,642.0 904.6,642.2 905.6,642.2 905.6,639.7 906.6,639.7 906.6,644.6 907.6,644.6 907.6,638.3 908.6,638.3 908.6,640.1 908.9,640.1 908.9,668" fill="#2ad698"/><polygon points="858.6,701 858.6,684.0 859.6,684.0 859.6,679.1 860.6,679.1 860.6,673.7 861.6,673.7 861.6,672.8 862.6,672.8 862.6,684.9 863.6,684.9 863.6,676.6 864.6,676.6 864.6,678.0 865.6,678.0 865.6,675.5 866.6,675.5 866.6,673.9 867.6,673.9 867.6,681.6 868.6,681.6 868.6,671.1 869.6,671.1 869.6,673.4 870.6,673.4 870.6,671.2 871.6,671.2 871.6,677.8 872.6,677.8 872.6,674.5 873.6,674.5 873.6,673.3 874.6,673.3 874.6,674.3 875.6,674.3 875.6,674.3 876.6,674.3 876.6,679.1 877.6,679.1 877.6,675.8 878.6,675.8 878.6,674.2 879.6,674.2 879.6,671.9 880.6,671.9 880.6,676.3 881.6,676.3 881.6,672.2 882.6,672.2 882.6,674.6 883.6,674.6 883.6,678.2 884.6,678.2 884.6,676.0 885.6,676.0 885.6,673.1 886.6,673.1 886.6,677.1 887.6,677.1 887.6,678.9 888.6,678.9 888.6,674.7 889.6,674.7 889.6,676.5 890.6,676.5 890.6,671.1 891.6,671.1 891.6,680.9 892.6,680.9 892.6,670.6 893.6,670.6 893.6,674.9 894.6,674.9 894.6,675.5 895.6,675.5 895.6,673.9 896.6,673.9 896.6,676.4 897.6,676.4 897.6,676.0 898.6,676.0 898.6,671.1 899.6,671.1 899.6,678.0 900.6,678.0 900.6,672.3 901.6,672.3 901.6,671.9 902.6,671.9 902.6,671.2 903.6,671.2 903.6,672.2 904.6,672.2 904.6,675.3 905.6,675.3 905.6,674.1 906.6,674.1 906.6,673.4 907.6,673.4 907.6,672.4 908.6,672.4 908.6,672.9 908.9,672.9 908.9,701" fill="#2ad698"/><polygon points="908.9,668 908.9,644.7 909.9,644.7 909.9,641.7 910.9,641.7 910.9,646.1 911.9,646.1 911.9,645.4 912.9,645.4 912.9,645.4 913.9,645.4 913.9,639.4 914.9,639.4 914.9,644.3 915.9,644.3 915.9,639.1 916.9,639.1 916.9,638.4 917.9,638.4 917.9,641.7 918.9,641.7 918.9,642.7 919.9,642.7 919.9,637.9 920.9,637.9 920.9,640.9 921.9,640.9 921.9,637.7 922.9,637.7 922.9,638.8 923.9,638.8 923.9,637.0 924.9,637.0 924.9,640.6 925.9,640.6 925.9,641.9 926.9,641.9 926.9,637.5 927.9,637.5 927.9,638.5 928.9,638.5 928.9,643.5 929.9,643.5 929.9,638.8 930.9,638.8 930.9,638.1 931.9,638.1 931.9,640.5 932.9,640.5 932.9,640.7 933.9,640.7 933.9,637.1 934.9,637.1 934.9,637.4 935.9,637.4 935.9,637.7 936.9,637.7 936.9,639.7 937.9,639.7 937.9,643.8 938.9,643.8 938.9,638.8 939.9,638.8 939.9,638.8 940.9,638.8 940.9,637.3 941.9,637.3 941.9,637.2 942.9,637.2 942.9,637.2 943.9,637.2 943.9,637.6 944.9,637.6 944.9,638.7 945.9,638.7 945.9,644.0 946.9,644.0 946.9,637.9 947.9,637.9 947.9,644.0 948.9,644.0 948.9,639.0 949.5,639.0 949.5,668" fill="#2ad698"/><polygon points="908.9,701 908.9,674.5 909.9,674.5 909.9,674.7 910.9,674.7 910.9,680.5 911.9,680.5 911.9,687.0 912.9,687.0 912.9,680.2 913.9,680.2 913.9,679.5 914.9,679.5 914.9,671.7 915.9,671.7 915.9,673.1 916.9,673.1 916.9,677.4 917.9,677.4 917.9,676.0 918.9,676.0 918.9,677.7 919.9,677.7 919.9,675.1 920.9,675.1 920.9,673.1 921.9,673.1 921.9,672.4 922.9,672.4 922.9,672.8 923.9,672.8 923.9,673.5 924.9,673.5 924.9,674.2 925.9,674.2 925.9,673.2 926.9,673.2 926.9,672.2 927.9,672.2 927.9,670.9 928.9,670.9 928.9,671.1 929.9,671.1 929.9,672.6 930.9,672.6 930.9,673.6 931.9,673.6 931.9,673.3 932.9,673.3 932.9,670.4 933.9,670.4 933.9,671.0 934.9,671.0 934.9,670.1 935.9,670.1 935.9,670.9 936.9,670.9 936.9,671.6 937.9,671.6 937.9,673.1 938.9,673.1 938.9,672.6 939.9,672.6 939.9,670.9 940.9,670.9 940.9,672.9 941.9,672.9 941.9,676.7 942.9,676.7 942.9,670.4 943.9,670.4 943.9,672.3 944.9,672.3 944.9,670.9 945.9,670.9 945.9,677.2 946.9,677.2 946.9,670.1 947.9,670.1 947.9,672.0 948.9,672.0 948.9,669.8 949.5,669.8 949.5,701" fill="#2ad698"/><polygon points="949.5,668 949.5,637.1 950.5,637.1 950.5,635.6 951.5,635.6 951.5,637.7 952.5,637.7 952.5,636.1 953.5,636.1 953.5,636.6 954.5,636.6 954.5,636.3 955.5,636.3 955.5,635.7 956.5,635.7 956.5,638.1 957.5,638.1 957.5,638.1 958.5,638.1 958.5,635.8 959.5,635.8 959.5,637.7 960.5,637.7 960.5,635.7 961.5,635.7 961.5,636.1 962.5,636.1 962.5,638.8 963.5,638.8 963.5,635.6 964.5,635.6 964.5,636.5 965.5,636.5 965.5,636.4 966.5,636.4 966.5,636.6 967.5,636.6 967.5,636.0 968.5,636.0 968.5,637.3 969.5,637.3 969.5,638.6 970.5,638.6 970.5,635.8 971.5,635.8 971.5,637.3 972.5,637.3 972.5,635.8 973.5,635.8 973.5,636.2 973.7,636.2 973.7,668" fill="#2ad698"/><polygon points="949.5,701 949.5,669.2 950.5,669.2 950.5,669.8 951.5,669.8 951.5,670.1 952.5,670.1 952.5,669.1 953.5,669.1 953.5,668.6 954.5,668.6 954.5,669.4 955.5,669.4 955.5,669.3 956.5,669.3 956.5,669.9 957.5,669.9 957.5,668.4 958.5,668.4 958.5,669.9 959.5,669.9 959.5,670.1 960.5,670.1 960.5,668.4 961.5,668.4 961.5,671.7 962.5,671.7 962.5,670.6 963.5,670.6 963.5,668.6 964.5,668.6 964.5,669.0 965.5,669.0 965.5,668.9 966.5,668.9 966.5,670.0 967.5,670.0 967.5,669.7 968.5,669.7 968.5,668.8 969.5,668.8 969.5,668.9 970.5,668.9 970.5,670.9 971.5,670.9 971.5,669.6 972.5,669.6 972.5,671.3 973.5,671.3 973.5,669.3 973.7,669.3 973.7,701" fill="#2ad698"/><polygon points="973.7,668 973.7,640.6 974.7,640.6 974.7,638.2 975.7,638.2 975.7,641.8 976.7,641.8 976.7,644.1 977.7,644.1 977.7,643.4 978.2,643.4 978.2,668" fill="#2ad698"/><polygon points="973.7,701 973.7,674.4 974.7,674.4 974.7,672.1 975.7,672.1 975.7,678.2 976.7,678.2 976.7,679.2 977.7,679.2 977.7,676.4 978.2,676.4 978.2,701" fill="#2ad698"/><polygon points="978.2,668 978.2,653.6 979.2,653.6 979.2,650.4 980.2,650.4 980.2,657.6 981.2,657.6 981.2,644.6 982.2,644.6 982.2,647.0 983.2,647.0 983.2,650.3 984.2,650.3 984.2,646.5 985.2,646.5 985.2,643.3 986.2,643.3 986.2,648.2 987.2,648.2 987.2,644.0 988.2,644.0 988.2,642.1 989.2,642.1 989.2,646.5 990.2,646.5 990.2,646.6 991.2,646.6 991.2,652.9 992.2,652.9 992.2,648.9 993.2,648.9 993.2,646.5 994.2,646.5 994.2,653.5 995.2,653.5 995.2,646.2 996.2,646.2 996.2,648.4 997.2,648.4 997.2,639.4 998.2,639.4 998.2,640.7 999.2,640.7 999.2,644.1 1000.2,644.1 1000.2,643.5 1001.2,643.5 1001.2,645.5 1002.2,645.5 1002.2,646.1 1003.2,646.1 1003.2,641.0 1004.2,641.0 1004.2,638.3 1005.2,638.3 1005.2,642.6 1006.2,642.6 1006.2,640.7 1007.2,640.7 1007.2,638.3 1008.2,638.3 1008.2,637.6 1009.2,637.6 1009.2,638.0 1010.2,638.0 1010.2,639.1 1011.2,639.1 1011.2,637.4 1012.2,637.4 1012.2,637.8 1013.2,637.8 1013.2,639.0 1014.2,639.0 1014.2,638.2 1015.2,638.2 1015.2,636.7 1016.2,636.7 1016.2,637.1 1017.2,637.1 1017.2,636.7 1018.2,636.7 1018.2,637.5 1019.2,637.5 1019.2,637.6 1020.2,637.6 1020.2,639.0 1021.2,639.0 1021.2,636.9 1022.2,636.9 1022.2,638.3 1023.2,638.3 1023.2,638.1 1024.2,638.1 1024.2,638.7 1025.2,638.7 1025.2,636.3 1026.2,636.3 1026.2,642.0 1027.2,642.0 1027.2,636.6 1028.2,636.6 1028.2,637.4 1029.2,637.4 1029.2,637.5 1030.2,637.5 1030.2,641.9 1031.2,641.9 1031.2,641.4 1032.2,641.4 1032.2,638.6 1033.2,638.6 1033.2,636.8 1034.2,636.8 1034.2,636.2 1035.2,636.2 1035.2,638.3 1036.2,638.3 1036.2,637.6 1037.2,637.6 1037.2,637.9 1038.2,637.9 1038.2,636.9 1039.2,636.9 1039.2,639.4 1040.2,639.4 1040.2,639.6 1041.2,639.6 1041.2,637.5 1042.2,637.5 1042.2,639.3 1043.2,639.3 1043.2,637.5 1044.2,637.5 1044.2,636.8 1045.2,636.8 1045.2,637.5 1046.2,637.5 1046.2,639.5 1047.2,639.5 1047.2,639.3 1048.2,639.3 1048.2,639.5 1049.2,639.5 1049.2,641.0 1049.7,641.0 1049.7,668" fill="#2ad698"/><polygon points="978.2,701 978.2,679.7 979.2,679.7 979.2,681.3 980.2,681.3 980.2,689.2 981.2,689.2 981.2,682.7 982.2,682.7 982.2,690.3 983.2,690.3 983.2,684.0 984.2,684.0 984.2,677.7 985.2,677.7 985.2,673.8 986.2,673.8 986.2,680.3 987.2,680.3 987.2,677.8 988.2,677.8 988.2,681.1 989.2,681.1 989.2,682.3 990.2,682.3 990.2,679.8 991.2,679.8 991.2,673.9 992.2,673.9 992.2,687.4 993.2,687.4 993.2,683.8 994.2,683.8 994.2,680.0 995.2,680.0 995.2,681.9 996.2,681.9 996.2,680.9 997.2,680.9 997.2,678.8 998.2,678.8 998.2,679.9 999.2,679.9 999.2,672.4 1000.2,672.4 1000.2,675.5 1001.2,675.5 1001.2,672.0 1002.2,672.0 1002.2,677.4 1003.2,677.4 1003.2,678.3 1004.2,678.3 1004.2,680.7 1005.2,680.7 1005.2,674.8 1006.2,674.8 1006.2,679.0 1007.2,679.0 1007.2,678.1 1008.2,678.1 1008.2,671.0 1009.2,671.0 1009.2,672.7 1010.2,672.7 1010.2,669.6 1011.2,669.6 1011.2,670.9 1012.2,670.9 1012.2,673.5 1013.2,673.5 1013.2,672.1 1014.2,672.1 1014.2,673.1 1015.2,673.1 1015.2,671.3 1016.2,671.3 1016.2,671.3 1017.2,671.3 1017.2,671.4 1018.2,671.4 1018.2,669.6 1019.2,669.6 1019.2,670.3 1020.2,670.3 1020.2,672.9 1021.2,672.9 1021.2,674.5 1022.2,674.5 1022.2,672.5 1023.2,672.5 1023.2,670.6 1024.2,670.6 1024.2,672.6 1025.2,672.6 1025.2,669.5 1026.2,669.5 1026.2,670.5 1027.2,670.5 1027.2,669.6 1028.2,669.6 1028.2,671.3 1029.2,671.3 1029.2,671.9 1030.2,671.9 1030.2,674.8 1031.2,674.8 1031.2,673.3 1032.2,673.3 1032.2,669.2 1033.2,669.2 1033.2,670.3 1034.2,670.3 1034.2,672.2 1035.2,672.2 1035.2,669.5 1036.2,669.5 1036.2,672.8 1037.2,672.8 1037.2,672.1 1038.2,672.1 1038.2,674.2 1039.2,674.2 1039.2,672.6 1040.2,672.6 1040.2,670.8 1041.2,670.8 1041.2,671.2 1042.2,671.2 1042.2,672.6 1043.2,672.6 1043.2,671.4 1044.2,671.4 1044.2,671.4 1045.2,671.4 1045.2,670.0 1046.2,670.0 1046.2,672.2 1047.2,672.2 1047.2,670.5 1048.2,670.5 1048.2,669.2 1049.2,669.2 1049.2,670.8 1049.7,670.8 1049.7,701" fill="#2ad698"/><polygon points="1049.7,668 1049.7,637.0 1050.7,637.0 1050.7,636.9 1051.7,636.9 1051.7,637.1 1052.7,637.1 1052.7,637.5 1053.7,637.5 1053.7,636.2 1054.7,636.2 1054.7,635.6 1055.7,635.6 1055.7,636.5 1056.7,636.5 1056.7,637.3 1057.7,637.3 1057.7,635.9 1058.7,635.9 1058.7,636.4 1059.7,636.4 1059.7,636.6 1060.7,636.6 1060.7,635.5 1061.7,635.5 1061.7,637.2 1062.7,637.2 1062.7,635.4 1063.7,635.4 1063.7,636.8 1064.7,636.8 1064.7,637.0 1065.7,637.0 1065.7,636.5 1066.7,636.5 1066.7,636.9 1067.7,636.9 1067.7,636.6 1068.7,636.6 1068.7,635.6 1069.7,635.6 1069.7,637.0 1070.7,637.0 1070.7,635.7 1071.7,635.7 1071.7,636.1 1072.7,636.1 1072.7,636.8 1073.7,636.8 1073.7,636.8 1074.7,636.8 1074.7,636.8 1075.7,636.8 1075.7,636.9 1076.7,636.9 1076.7,636.4 1077.7,636.4 1077.7,637.4 1078.7,637.4 1078.7,636.3 1079.7,636.3 1079.7,636.0 1080.7,636.0 1080.7,637.0 1081.7,637.0 1081.7,638.7 1082.7,638.7 1082.7,636.7 1083.7,636.7 1083.7,636.2 1084.7,636.2 1084.7,637.0 1085.7,637.0 1085.7,637.3 1086.7,637.3 1086.7,637.0 1087.7,637.0 1087.7,636.3 1088.7,636.3 1088.7,635.9 1089.7,635.9 1089.7,635.6 1090.7,635.6 1090.7,637.8 1090.9,637.8 1090.9,668" fill="#2ad698"/><polygon points="1049.7,701 1049.7,669.9 1050.7,669.9 1050.7,670.1 1051.7,670.1 1051.7,668.9 1052.7,668.9 1052.7,670.0 1053.7,670.0 1053.7,669.4 1054.7,669.4 1054.7,670.1 1055.7,670.1 1055.7,670.3 1056.7,670.3 1056.7,669.9 1057.7,669.9 1057.7,668.5 1058.7,668.5 1058.7,669.5 1059.7,669.5 1059.7,668.5 1060.7,668.5 1060.7,669.1 1061.7,669.1 1061.7,670.0 1062.7,670.0 1062.7,669.6 1063.7,669.6 1063.7,668.9 1064.7,668.9 1064.7,670.4 1065.7,670.4 1065.7,668.4 1066.7,668.4 1066.7,670.9 1067.7,670.9 1067.7,669.3 1068.7,669.3 1068.7,669.0 1069.7,669.0 1069.7,669.4 1070.7,669.4 1070.7,668.5 1071.7,668.5 1071.7,668.9 1072.7,668.9 1072.7,670.2 1073.7,670.2 1073.7,668.4 1074.7,668.4 1074.7,671.6 1075.7,671.6 1075.7,671.5 1076.7,671.5 1076.7,670.4 1077.7,670.4 1077.7,669.6 1078.7,669.6 1078.7,669.9 1079.7,669.9 1079.7,670.1 1080.7,670.1 1080.7,668.7 1081.7,668.7 1081.7,668.6 1082.7,668.6 1082.7,670.9 1083.7,670.9 1083.7,668.5 1084.7,668.5 1084.7,669.3 1085.7,669.3 1085.7,671.5 1086.7,671.5 1086.7,669.0 1087.7,669.0 1087.7,668.6 1088.7,668.6 1088.7,669.2 1089.7,669.2 1089.7,670.0 1090.7,670.0 1090.7,670.6 1090.9,670.6 1090.9,701" fill="#2ad698"/><polygon points="1090.9,668 1090.9,641.8 1091.9,641.8 1091.9,649.4 1092.9,649.4 1092.9,649.5 1093.9,649.5 1093.9,647.7 1094.9,647.7 1094.9,645.7 1095.6,645.7 1095.6,668" fill="#2ad698"/><polygon points="1090.9,701 1090.9,676.5 1091.9,676.5 1091.9,680.6 1092.9,680.6 1092.9,682.2 1093.9,682.2 1093.9,675.7 1094.9,675.7 1094.9,682.6 1095.6,682.6 1095.6,701" fill="#2ad698"/><polygon points="1095.6,668 1095.6,642.5 1096.6,642.5 1096.6,642.6 1097.6,642.6 1097.6,648.6 1098.6,648.6 1098.6,639.5 1099.6,639.5 1099.6,647.5 1100.6,647.5 1100.6,648.3 1101.6,648.3 1101.6,643.5 1102.6,643.5 1102.6,642.8 1103.6,642.8 1103.6,642.0 1104.6,642.0 1104.6,641.0 1105.6,641.0 1105.6,647.6 1106.6,647.6 1106.6,642.3 1107.6,642.3 1107.6,645.0 1108.6,645.0 1108.6,646.0 1109.6,646.0 1109.6,645.9 1110.6,645.9 1110.6,641.3 1111.6,641.3 1111.6,647.1 1112.6,647.1 1112.6,645.6 1113.6,645.6 1113.6,642.7 1114.6,642.7 1114.6,641.7 1115.6,641.7 1115.6,652.4 1116.6,652.4 1116.6,647.7 1117.6,647.7 1117.6,651.5 1118.6,651.5 1118.6,646.5 1119.6,646.5 1119.6,645.9 1120.6,645.9 1120.6,643.6 1121.6,643.6 1121.6,641.9 1122.6,641.9 1122.6,640.6 1123.6,640.6 1123.6,643.8 1124.6,643.8 1124.6,655.9 1125.6,655.9 1125.6,645.0 1126.6,645.0 1126.6,645.7 1127.6,645.7 1127.6,653.8 1128.6,653.8 1128.6,640.4 1129.6,640.4 1129.6,648.4 1130.6,648.4 1130.6,642.7 1131.6,642.7 1131.6,640.6 1132.6,640.6 1132.6,642.9 1133.6,642.9 1133.6,639.8 1134.6,639.8 1134.6,639.1 1134.9,639.1 1134.9,668" fill="#2ad698"/><polygon points="1095.6,701 1095.6,673.0 1096.6,673.0 1096.6,675.8 1097.6,675.8 1097.6,684.4 1098.6,684.4 1098.6,672.4 1099.6,672.4 1099.6,687.8 1100.6,687.8 1100.6,681.0 1101.6,681.0 1101.6,679.4 1102.6,679.4 1102.6,673.7 1103.6,673.7 1103.6,673.7 1104.6,673.7 1104.6,672.2 1105.6,672.2 1105.6,673.9 1106.6,673.9 1106.6,680.5 1107.6,680.5 1107.6,687.6 1108.6,687.6 1108.6,672.2 1109.6,672.2 1109.6,677.6 1110.6,677.6 1110.6,682.3 1111.6,682.3 1111.6,681.7 1112.6,681.7 1112.6,681.1 1113.6,681.1 1113.6,681.0 1114.6,681.0 1114.6,675.0 1115.6,675.0 1115.6,677.4 1116.6,677.4 1116.6,680.8 1117.6,680.8 1117.6,674.8 1118.6,674.8 1118.6,673.5 1119.6,673.5 1119.6,681.1 1120.6,681.1 1120.6,674.2 1121.6,674.2 1121.6,680.5 1122.6,680.5 1122.6,672.9 1123.6,672.9 1123.6,673.3 1124.6,673.3 1124.6,684.6 1125.6,684.6 1125.6,680.9 1126.6,680.9 1126.6,673.5 1127.6,673.5 1127.6,679.1 1128.6,679.1 1128.6,680.8 1129.6,680.8 1129.6,679.0 1130.6,679.0 1130.6,673.8 1131.6,673.8 1131.6,680.0 1132.6,680.0 1132.6,678.1 1133.6,678.1 1133.6,677.2 1134.6,677.2 1134.6,679.0 1134.9,679.0 1134.9,701" fill="#2ad698"/><polygon points="1134.9,668 1134.9,639.1 1135.9,639.1 1135.9,643.7 1136.9,643.7 1136.9,643.5 1137.9,643.5 1137.9,641.9 1138.9,641.9 1138.9,652.8 1139.9,652.8 1139.9,638.9 1140.9,638.9 1140.9,641.4 1141.9,641.4 1141.9,643.0 1142.9,643.0 1142.9,645.2 1143.9,645.2 1143.9,641.8 1144.9,641.8 1144.9,649.8 1145.9,649.8 1145.9,649.3 1146.9,649.3 1146.9,641.6 1147.9,641.6 1147.9,641.7 1148.9,641.7 1148.9,641.2 1149.9,641.2 1149.9,639.7 1150.9,639.7 1150.9,643.0 1151.9,643.0 1151.9,644.4 1152.9,644.4 1152.9,639.5 1153.9,639.5 1153.9,644.3 1154.9,644.3 1154.9,643.1 1155.9,643.1 1155.9,645.0 1156.9,645.0 1156.9,646.2 1157.9,646.2 1157.9,646.4 1158.9,646.4 1158.9,638.9 1159.9,638.9 1159.9,643.3 1160.9,643.3 1160.9,646.0 1161.9,646.0 1161.9,639.3 1162.8,639.3 1162.8,668" fill="#2ad698"/><polygon points="1134.9,701 1134.9,683.4 1135.9,683.4 1135.9,678.5 1136.9,678.5 1136.9,685.9 1137.9,685.9 1137.9,678.7 1138.9,678.7 1138.9,672.9 1139.9,672.9 1139.9,677.5 1140.9,677.5 1140.9,686.3 1141.9,686.3 1141.9,677.6 1142.9,677.6 1142.9,684.8 1143.9,684.8 1143.9,678.9 1144.9,678.9 1144.9,678.6 1145.9,678.6 1145.9,679.7 1146.9,679.7 1146.9,677.7 1147.9,677.7 1147.9,679.5 1148.9,679.5 1148.9,678.1 1149.9,678.1 1149.9,674.1 1150.9,674.1 1150.9,677.6 1151.9,677.6 1151.9,674.4 1152.9,674.4 1152.9,687.0 1153.9,687.0 1153.9,677.3 1154.9,677.3 1154.9,682.4 1155.9,682.4 1155.9,679.0 1156.9,679.0 1156.9,677.4 1157.9,677.4 1157.9,674.9 1158.9,674.9 1158.9,683.3 1159.9,683.3 1159.9,672.8 1160.9,672.8 1160.9,677.9 1161.9,677.9 1161.9,678.8 1162.8,678.8 1162.8,701" fill="#2ad698"/><polygon points="1162.8,668 1162.8,644.4 1163.8,644.4 1163.8,640.6 1164.8,640.6 1164.8,646.0 1165.8,646.0 1165.8,638.8 1166.8,638.8 1166.8,642.2 1167.8,642.2 1167.8,641.2 1168.8,641.2 1168.8,640.4 1169.8,640.4 1169.8,647.5 1170.8,647.5 1170.8,641.4 1171.8,641.4 1171.8,640.7 1172.8,640.7 1172.8,642.2 1173.8,642.2 1173.8,641.4 1174.8,641.4 1174.8,639.6 1175.8,639.6 1175.8,639.5 1176.8,639.5 1176.8,646.7 1177.8,646.7 1177.8,639.5 1178.8,639.5 1178.8,639.9 1179.8,639.9 1179.8,646.2 1180.8,646.2 1180.8,647.3 1181.8,647.3 1181.8,644.4 1182.8,644.4 1182.8,642.0 1183.8,642.0 1183.8,640.0 1184.8,640.0 1184.8,640.0 1185.8,640.0 1185.8,646.0 1186.8,646.0 1186.8,645.3 1187.8,645.3 1187.8,643.9 1188.8,643.9 1188.8,646.6 1189.8,646.6 1189.8,646.6 1190.8,646.6 1190.8,644.7 1191.8,644.7 1191.8,640.5 1192.8,640.5 1192.8,639.7 1193.8,639.7 1193.8,639.1 1194.8,639.1 1194.8,644.6 1195.8,644.6 1195.8,640.5 1196.8,640.5 1196.8,639.1 1197.8,639.1 1197.8,640.8 1198.8,640.8 1198.8,639.3 1199.8,639.3 1199.8,645.7 1200.8,645.7 1200.8,653.6 1201.8,653.6 1201.8,644.5 1202.8,644.5 1202.8,643.7 1203.8,643.7 1203.8,639.0 1204.8,639.0 1204.8,639.5 1205.8,639.5 1205.8,640.9 1206.8,640.9 1206.8,641.7 1207.8,641.7 1207.8,641.1 1208.8,641.1 1208.8,647.1 1209.8,647.1 1209.8,645.4 1210.8,645.4 1210.8,647.3 1211.8,647.3 1211.8,645.5 1212.8,645.5 1212.8,642.1 1213.8,642.1 1213.8,643.2 1214.8,643.2 1214.8,644.9 1215.8,644.9 1215.8,641.0 1216.8,641.0 1216.8,646.3 1217.8,646.3 1217.8,645.1 1218.8,645.1 1218.8,642.6 1219.8,642.6 1219.8,644.4 1220.8,644.4 1220.8,646.1 1221.8,646.1 1221.8,638.7 1222.8,638.7 1222.8,646.6 1223.8,646.6 1223.8,649.4 1224.8,649.4 1224.8,651.5 1225.8,651.5 1225.8,644.7 1226.8,644.7 1226.8,639.1 1227.8,639.1 1227.8,641.5 1228.8,641.5 1228.8,641.1 1229.8,641.1 1229.8,639.6 1230.8,639.6 1230.8,639.8 1231.8,639.8 1231.8,645.0 1232.8,645.0 1232.8,643.1 1233.8,643.1 1233.8,648.4 1234.8,648.4 1234.8,641.2 1235.8,641.2 1235.8,641.9 1236.8,641.9 1236.8,641.6 1237.8,641.6 1237.8,646.5 1238.8,646.5 1238.8,646.1 1239.8,646.1 1239.8,646.4 1240.8,646.4 1240.8,642.3 1241.8,642.3 1241.8,641.3 1242.8,641.3 1242.8,647.1 1243.8,647.1 1243.8,643.3 1244.8,643.3 1244.8,645.3 1245.8,645.3 1245.8,640.5 1246.8,640.5 1246.8,641.0 1247.8,641.0 1247.8,640.9 1248.8,640.9 1248.8,645.3 1249.8,645.3 1249.8,645.9 1250.8,645.9 1250.8,641.5 1251.8,641.5 1251.8,640.6 1252.8,640.6 1252.8,642.1 1253.8,642.1 1253.8,641.9 1254.8,641.9 1254.8,644.9 1255.8,644.9 1255.8,644.7 1256.8,644.7 1256.8,644.1 1257.8,644.1 1257.8,639.2 1258.8,639.2 1258.8,639.5 1259.1,639.5 1259.1,668" fill="#2ad698"/><polygon points="1162.8,701 1162.8,679.4 1163.8,679.4 1163.8,672.5 1164.8,672.5 1164.8,679.7 1165.8,679.7 1165.8,676.8 1166.8,676.8 1166.8,677.4 1167.8,677.4 1167.8,678.9 1168.8,678.9 1168.8,678.3 1169.8,678.3 1169.8,672.7 1170.8,672.7 1170.8,673.8 1171.8,673.8 1171.8,680.3 1172.8,680.3 1172.8,673.3 1173.8,673.3 1173.8,676.8 1174.8,676.8 1174.8,684.8 1175.8,684.8 1175.8,673.4 1176.8,673.4 1176.8,679.8 1177.8,679.8 1177.8,672.9 1178.8,672.9 1178.8,676.9 1179.8,676.9 1179.8,682.1 1180.8,682.1 1180.8,684.6 1181.8,684.6 1181.8,677.1 1182.8,677.1 1182.8,674.7 1183.8,674.7 1183.8,677.6 1184.8,677.6 1184.8,676.8 1185.8,676.8 1185.8,672.0 1186.8,672.0 1186.8,672.2 1187.8,672.2 1187.8,680.2 1188.8,680.2 1188.8,673.1 1189.8,673.1 1189.8,673.8 1190.8,673.8 1190.8,679.6 1191.8,679.6 1191.8,678.6 1192.8,678.6 1192.8,685.4 1193.8,685.4 1193.8,676.2 1194.8,676.2 1194.8,677.5 1195.8,677.5 1195.8,680.0 1196.8,680.0 1196.8,676.6 1197.8,676.6 1197.8,677.1 1198.8,677.1 1198.8,673.0 1199.8,673.0 1199.8,678.2 1200.8,678.2 1200.8,680.0 1201.8,680.0 1201.8,680.3 1202.8,680.3 1202.8,677.0 1203.8,677.0 1203.8,682.3 1204.8,682.3 1204.8,673.8 1205.8,673.8 1205.8,675.6 1206.8,675.6 1206.8,676.9 1207.8,676.9 1207.8,679.9 1208.8,679.9 1208.8,679.7 1209.8,679.7 1209.8,676.2 1210.8,676.2 1210.8,677.2 1211.8,677.2 1211.8,672.2 1212.8,672.2 1212.8,684.2 1213.8,684.2 1213.8,680.1 1214.8,680.1 1214.8,677.7 1215.8,677.7 1215.8,673.2 1216.8,673.2 1216.8,676.5 1217.8,676.5 1217.8,685.2 1218.8,685.2 1218.8,671.9 1219.8,671.9 1219.8,678.9 1220.8,678.9 1220.8,674.5 1221.8,674.5 1221.8,680.2 1222.8,680.2 1222.8,677.6 1223.8,677.6 1223.8,686.7 1224.8,686.7 1224.8,676.5 1225.8,676.5 1225.8,677.8 1226.8,677.8 1226.8,676.9 1227.8,676.9 1227.8,680.1 1228.8,680.1 1228.8,676.7 1229.8,676.7 1229.8,675.4 1230.8,675.4 1230.8,678.6 1231.8,678.6 1231.8,682.0 1232.8,682.0 1232.8,674.4 1233.8,674.4 1233.8,678.9 1234.8,678.9 1234.8,676.4 1235.8,676.4 1235.8,676.1 1236.8,676.1 1236.8,675.1 1237.8,675.1 1237.8,679.0 1238.8,679.0 1238.8,679.9 1239.8,679.9 1239.8,673.2 1240.8,673.2 1240.8,677.5 1241.8,677.5 1241.8,678.7 1242.8,678.7 1242.8,678.2 1243.8,678.2 1243.8,677.8 1244.8,677.8 1244.8,671.9 1245.8,671.9 1245.8,675.6 1246.8,675.6 1246.8,684.7 1247.8,684.7 1247.8,672.3 1248.8,672.3 1248.8,672.3 1249.8,672.3 1249.8,673.2 1250.8,673.2 1250.8,672.9 1251.8,672.9 1251.8,680.1 1252.8,680.1 1252.8,677.4 1253.8,677.4 1253.8,679.0 1254.8,679.0 1254.8,675.1 1255.8,675.1 1255.8,679.6 1256.8,679.6 1256.8,673.2 1257.8,673.2 1257.8,675.3 1258.8,675.3 1258.8,673.3 1259.1,673.3 1259.1,701" fill="#2ad698"/><polygon points="1259.1,668 1259.1,653.6 1260.1,653.6 1260.1,649.6 1261.1,649.6 1261.1,653.1 1262.1,653.1 1262.1,653.7 1263.1,653.7 1263.1,652.9 1264.1,652.9 1264.1,648.2 1265.1,648.2 1265.1,643.9 1266.1,643.9 1266.1,647.9 1267.1,647.9 1267.1,645.3 1268.1,645.3 1268.1,647.2 1269.1,647.2 1269.1,652.8 1270.1,652.8 1270.1,639.9 1271.1,639.9 1271.1,652.6 1272.1,652.6 1272.1,652.7 1273.1,652.7 1273.1,648.7 1274.1,648.7 1274.1,647.0 1275.1,647.0 1275.1,649.8 1276.1,649.8 1276.1,650.1 1277.1,650.1 1277.1,648.7 1278.1,648.7 1278.1,647.7 1279.1,647.7 1279.1,646.1 1280.1,646.1 1280.1,641.5 1281.1,641.5 1281.1,645.9 1282.1,645.9 1282.1,639.3 1283.1,639.3 1283.1,646.6 1284.1,646.6 1284.1,640.0 1285.1,640.0 1285.1,639.1 1286.1,639.1 1286.1,643.3 1287.1,643.3 1287.1,638.9 1288.1,638.9 1288.1,640.7 1289.1,640.7 1289.1,644.5 1290.1,644.5 1290.1,643.0 1291.1,643.0 1291.1,645.1 1292.1,645.1 1292.1,638.6 1293.1,638.6 1293.1,651.7 1294.1,651.7 1294.1,650.0 1295.1,650.0 1295.1,642.8 1296.1,642.8 1296.1,643.1 1297.1,643.1 1297.1,642.3 1298.1,642.3 1298.1,639.0 1299.1,639.0 1299.1,644.1 1300.1,644.1 1300.1,647.4 1301.1,647.4 1301.1,640.4 1302.1,640.4 1302.1,644.5 1303.1,644.5 1303.1,645.4 1304.1,645.4 1304.1,639.9 1305.1,639.9 1305.1,638.0 1306.1,638.0 1306.1,638.3 1307.1,638.3 1307.1,642.0 1308.1,642.0 1308.1,641.5 1309.1,641.5 1309.1,642.2 1310.1,642.2 1310.1,639.7 1311.1,639.7 1311.1,640.5 1312.1,640.5 1312.1,637.2 1313.1,637.2 1313.1,637.2 1314.1,637.2 1314.1,637.3 1315.1,637.3 1315.1,640.3 1316.1,640.3 1316.1,640.3 1317.1,640.3 1317.1,638.1 1318.1,638.1 1318.1,638.4 1319.1,638.4 1319.1,639.1 1320.1,639.1 1320.1,643.0 1321.1,643.0 1321.1,637.2 1322.1,637.2 1322.1,642.7 1323.1,642.7 1323.1,640.3 1324.1,640.3 1324.1,640.4 1325.1,640.4 1325.1,637.7 1326.1,637.7 1326.1,640.8 1327.1,640.8 1327.1,640.2 1328.1,640.2 1328.1,637.9 1329.1,637.9 1329.1,637.9 1330.1,637.9 1330.1,637.1 1331.1,637.1 1331.1,636.9 1332.1,636.9 1332.1,638.9 1333.1,638.9 1333.1,640.5 1334.1,640.5 1334.1,637.4 1335.1,637.4 1335.1,642.8 1336.1,642.8 1336.1,639.9 1337.1,639.9 1337.1,639.3 1338.1,639.3 1338.1,641.5 1339.1,641.5 1339.1,638.8 1340.1,638.8 1340.1,636.9 1341.1,636.9 1341.1,637.7 1342.1,637.7 1342.1,639.6 1343.1,639.6 1343.1,640.3 1344.1,640.3 1344.1,640.2 1345.1,640.2 1345.1,640.9 1346.1,640.9 1346.1,638.9 1347.1,638.9 1347.1,638.7 1348.1,638.7 1348.1,640.2 1349.1,640.2 1349.1,636.8 1350.1,636.8 1350.1,641.0 1351.1,641.0 1351.1,639.9 1352.1,639.9 1352.1,636.9 1353.1,636.9 1353.1,637.2 1354.1,637.2 1354.1,641.3 1355.1,641.3 1355.1,642.7 1356.1,642.7 1356.1,637.8 1357.1,637.8 1357.1,640.5 1358.1,640.5 1358.1,637.9 1359.1,637.9 1359.1,638.6 1360.1,638.6 1360.1,640.2 1361.1,640.2 1361.1,638.5 1362.1,638.5 1362.1,637.7 1363.1,637.7 1363.1,641.9 1364.1,641.9 1364.1,640.1 1365.1,640.1 1365.1,639.3 1366.1,639.3 1366.1,641.3 1366.7,641.3 1366.7,668" fill="#2ad698"/><polygon points="1259.1,701 1259.1,684.7 1260.1,684.7 1260.1,680.5 1261.1,680.5 1261.1,672.1 1262.1,672.1 1262.1,682.3 1263.1,682.3 1263.1,685.1 1264.1,685.1 1264.1,681.8 1265.1,681.8 1265.1,682.9 1266.1,682.9 1266.1,684.6 1267.1,684.6 1267.1,683.0 1268.1,683.0 1268.1,684.8 1269.1,684.8 1269.1,679.5 1270.1,679.5 1270.1,680.1 1271.1,680.1 1271.1,678.4 1272.1,678.4 1272.1,684.2 1273.1,684.2 1273.1,684.1 1274.1,684.1 1274.1,680.9 1275.1,680.9 1275.1,680.2 1276.1,680.2 1276.1,678.6 1277.1,678.6 1277.1,676.3 1278.1,676.3 1278.1,680.4 1279.1,680.4 1279.1,676.5 1280.1,676.5 1280.1,674.0 1281.1,674.0 1281.1,674.1 1282.1,674.1 1282.1,672.5 1283.1,672.5 1283.1,676.0 1284.1,676.0 1284.1,683.6 1285.1,683.6 1285.1,675.0 1286.1,675.0 1286.1,684.9 1287.1,684.9 1287.1,679.1 1288.1,679.1 1288.1,675.9 1289.1,675.9 1289.1,676.9 1290.1,676.9 1290.1,675.0 1291.1,675.0 1291.1,675.8 1292.1,675.8 1292.1,675.5 1293.1,675.5 1293.1,676.3 1294.1,676.3 1294.1,673.1 1295.1,673.1 1295.1,675.3 1296.1,675.3 1296.1,682.6 1297.1,682.6 1297.1,674.0 1298.1,674.0 1298.1,673.1 1299.1,673.1 1299.1,683.6 1300.1,683.6 1300.1,675.5 1301.1,675.5 1301.1,674.2 1302.1,674.2 1302.1,677.0 1303.1,677.0 1303.1,675.5 1304.1,675.5 1304.1,676.1 1305.1,676.1 1305.1,678.6 1306.1,678.6 1306.1,676.8 1307.1,676.8 1307.1,673.1 1308.1,673.1 1308.1,676.3 1309.1,676.3 1309.1,671.5 1310.1,671.5 1310.1,672.0 1311.1,672.0 1311.1,673.2 1312.1,673.2 1312.1,671.0 1313.1,671.0 1313.1,671.9 1314.1,671.9 1314.1,673.1 1315.1,673.1 1315.1,678.0 1316.1,678.0 1316.1,673.0 1317.1,673.0 1317.1,669.9 1318.1,669.9 1318.1,671.0 1319.1,671.0 1319.1,669.8 1320.1,669.8 1320.1,670.3 1321.1,670.3 1321.1,672.9 1322.1,672.9 1322.1,673.6 1323.1,673.6 1323.1,672.9 1324.1,672.9 1324.1,670.4 1325.1,670.4 1325.1,671.6 1326.1,671.6 1326.1,674.1 1327.1,674.1 1327.1,672.1 1328.1,672.1 1328.1,673.1 1329.1,673.1 1329.1,673.0 1330.1,673.0 1330.1,673.3 1331.1,673.3 1331.1,673.4 1332.1,673.4 1332.1,670.3 1333.1,670.3 1333.1,676.0 1334.1,676.0 1334.1,677.5 1335.1,677.5 1335.1,673.1 1336.1,673.1 1336.1,674.2 1337.1,674.2 1337.1,671.6 1338.1,671.6 1338.1,672.3 1339.1,672.3 1339.1,674.6 1340.1,674.6 1340.1,670.5 1341.1,670.5 1341.1,670.8 1342.1,670.8 1342.1,673.1 1343.1,673.1 1343.1,671.1 1344.1,671.1 1344.1,671.1 1345.1,671.1 1345.1,678.0 1346.1,678.0 1346.1,675.9 1347.1,675.9 1347.1,676.1 1348.1,676.1 1348.1,671.4 1349.1,671.4 1349.1,673.3 1350.1,673.3 1350.1,672.8 1351.1,672.8 1351.1,673.1 1352.1,673.1 1352.1,674.3 1353.1,674.3 1353.1,672.0 1354.1,672.0 1354.1,673.6 1355.1,673.6 1355.1,673.0 1356.1,673.0 1356.1,670.7 1357.1,670.7 1357.1,673.3 1358.1,673.3 1358.1,670.3 1359.1,670.3 1359.1,673.7 1360.1,673.7 1360.1,673.4 1361.1,673.4 1361.1,673.4 1362.1,673.4 1362.1,673.9 1363.1,673.9 1363.1,671.8 1364.1,671.8 1364.1,677.3 1365.1,677.3 1365.1,673.1 1366.1,673.1 1366.1,674.1 1366.7,674.1 1366.7,701" fill="#2ad698"/><polygon points="1366.7,668 1366.7,636.3 1367.7,636.3 1367.7,636.5 1368.7,636.5 1368.7,635.9 1369.7,635.9 1369.7,636.2 1370.7,636.2 1370.7,638.5 1371.7,638.5 1371.7,637.1 1372.7,637.1 1372.7,636.0 1373.7,636.0 1373.7,635.6 1374.7,635.6 1374.7,636.6 1375.7,636.6 1375.7,636.7 1376.7,636.7 1376.7,636.6 1377.7,636.6 1377.7,635.8 1378.7,635.8 1378.7,636.0 1379.7,636.0 1379.7,636.5 1380.7,636.5 1380.7,636.9 1381.7,636.9 1381.7,635.9 1382.7,635.9 1382.7,636.8 1383.7,636.8 1383.7,636.1 1384.7,636.1 1384.7,636.1 1385.7,636.1 1385.7,636.4 1386.7,636.4 1386.7,636.9 1387.7,636.9 1387.7,636.5 1388.7,636.5 1388.7,637.7 1389.7,637.7 1389.7,635.6 1390.7,635.6 1390.7,636.6 1391.7,636.6 1391.7,637.1 1392.7,637.1 1392.7,636.7 1393.7,636.7 1393.7,636.8 1394.7,636.8 1394.7,636.9 1395.7,636.9 1395.7,635.9 1396.7,635.9 1396.7,636.6 1397.7,636.6 1397.7,636.8 1398.7,636.8 1398.7,635.9 1399.7,635.9 1399.7,637.4 1400.7,637.4 1400.7,635.5 1401.7,635.5 1401.7,636.0 1402.7,636.0 1402.7,638.7 1403.7,638.7 1403.7,637.2 1404.7,637.2 1404.7,635.4 1405.7,635.4 1405.7,636.6 1406.7,636.6 1406.7,636.4 1407.7,636.4 1407.7,636.6 1408.7,636.6 1408.7,637.2 1409.7,637.2 1409.7,636.1 1410.7,636.1 1410.7,638.0 1411.7,638.0 1411.7,637.2 1412.7,637.2 1412.7,636.6 1413.7,636.6 1413.7,636.0 1414.7,636.0 1414.7,636.1 1415.7,636.1 1415.7,636.2 1416.7,636.2 1416.7,636.9 1417.7,636.9 1417.7,636.0 1418.7,636.0 1418.7,638.6 1419.7,638.6 1419.7,636.4 1420.6,636.4 1420.6,668" fill="#2ad698"/><polygon points="1366.7,701 1366.7,669.9 1367.7,669.9 1367.7,669.1 1368.7,669.1 1368.7,668.7 1369.7,668.7 1369.7,668.5 1370.7,668.5 1370.7,669.7 1371.7,669.7 1371.7,670.1 1372.7,670.1 1372.7,669.9 1373.7,669.9 1373.7,669.4 1374.7,669.4 1374.7,670.2 1375.7,670.2 1375.7,670.0 1376.7,670.0 1376.7,669.8 1377.7,669.8 1377.7,668.6 1378.7,668.6 1378.7,669.2 1379.7,669.2 1379.7,669.4 1380.7,669.4 1380.7,668.5 1381.7,668.5 1381.7,671.3 1382.7,671.3 1382.7,670.8 1383.7,670.8 1383.7,671.1 1384.7,671.1 1384.7,668.4 1385.7,668.4 1385.7,670.2 1386.7,670.2 1386.7,669.6 1387.7,669.6 1387.7,669.7 1388.7,669.7 1388.7,670.0 1389.7,670.0 1389.7,668.4 1390.7,668.4 1390.7,670.0 1391.7,670.0 1391.7,669.3 1392.7,669.3 1392.7,669.2 1393.7,669.2 1393.7,669.4 1394.7,669.4 1394.7,670.3 1395.7,670.3 1395.7,670.1 1396.7,670.1 1396.7,669.7 1397.7,669.7 1397.7,669.9 1398.7,669.9 1398.7,669.0 1399.7,669.0 1399.7,670.2 1400.7,670.2 1400.7,669.4 1401.7,669.4 1401.7,668.4 1402.7,668.4 1402.7,669.1 1403.7,669.1 1403.7,669.9 1404.7,669.9 1404.7,668.7 1405.7,668.7 1405.7,669.3 1406.7,669.3 1406.7,669.1 1407.7,669.1 1407.7,668.6 1408.7,668.6 1408.7,670.1 1409.7,670.1 1409.7,668.5 1410.7,668.5 1410.7,669.8 1411.7,669.8 1411.7,668.9 1412.7,668.9 1412.7,669.1 1413.7,669.1 1413.7,669.5 1414.7,669.5 1414.7,669.7 1415.7,669.7 1415.7,668.9 1416.7,668.9 1416.7,669.2 1417.7,669.2 1417.7,670.5 1418.7,670.5 1418.7,669.5 1419.7,669.5 1419.7,669.6 1420.6,669.6 1420.6,701" fill="#2ad698"/><polygon points="1420.6,668 1420.6,649.3 1421.6,649.3 1421.6,641.7 1422.6,641.7 1422.6,643.5 1423.6,643.5 1423.6,642.8 1424.6,642.8 1424.6,640.5 1425.6,640.5 1425.6,644.2 1426.6,644.2 1426.6,648.8 1426.8,648.8 1426.8,668" fill="#2ad698"/><polygon points="1420.6,701 1420.6,679.0 1421.6,679.0 1421.6,677.3 1422.6,677.3 1422.6,678.0 1423.6,678.0 1423.6,676.3 1424.6,676.3 1424.6,678.5 1425.6,678.5 1425.6,674.1 1426.6,674.1 1426.6,674.4 1426.8,674.4 1426.8,701" fill="#2ad698"/><polygon points="1426.8,668 1426.8,648.5 1427.8,648.5 1427.8,643.4 1428.8,643.4 1428.8,642.5 1429.8,642.5 1429.8,649.2 1430.8,649.2 1430.8,644.5 1431.8,644.5 1431.8,649.5 1432.8,649.5 1432.8,640.8 1433.8,640.8 1433.8,641.1 1434.8,641.1 1434.8,642.4 1435.8,642.4 1435.8,644.6 1436.8,644.6 1436.8,642.0 1437.8,642.0 1437.8,653.2 1438.8,653.2 1438.8,642.5 1439.8,642.5 1439.8,647.2 1440.8,647.2 1440.8,657.5 1441.8,657.5 1441.8,640.7 1442.8,640.7 1442.8,643.7 1443.8,643.7 1443.8,646.1 1444.8,646.1 1444.8,656.7 1445.8,656.7 1445.8,642.4 1446.8,642.4 1446.8,645.1 1447.8,645.1 1447.8,655.6 1448.8,655.6 1448.8,649.5 1449.8,649.5 1449.8,654.4 1450.8,654.4 1450.8,645.1 1451.8,645.1 1451.8,647.2 1452.8,647.2 1452.8,641.9 1453.8,641.9 1453.8,646.4 1454.8,646.4 1454.8,649.4 1455.8,649.4 1455.8,646.5 1456.8,646.5 1456.8,647.2 1457.8,647.2 1457.8,642.6 1458.8,642.6 1458.8,641.9 1459.8,641.9 1459.8,641.3 1460.8,641.3 1460.8,644.5 1461.8,644.5 1461.8,646.8 1462.8,646.8 1462.8,646.3 1463.8,646.3 1463.8,640.3 1464.8,640.3 1464.8,649.0 1465.8,649.0 1465.8,640.9 1466.8,640.9 1466.8,640.9 1467.8,640.9 1467.8,649.7 1468.8,649.7 1468.8,649.6 1469.8,649.6 1469.8,656.3 1470.8,656.3 1470.8,657.3 1471.8,657.3 1471.8,643.0 1472.8,643.0 1472.8,642.7 1473.8,642.7 1473.8,644.3 1474.8,644.3 1474.8,648.7 1475.8,648.7 1475.8,649.9 1476.8,649.9 1476.8,644.8 1477.8,644.8 1477.8,643.9 1478.8,643.9 1478.8,648.0 1479.8,648.0 1479.8,641.6 1480.8,641.6 1480.8,648.7 1481.8,648.7 1481.8,640.1 1481.9,640.1 1481.9,668" fill="#2ad698"/><polygon points="1426.8,701 1426.8,682.4 1427.8,682.4 1427.8,677.2 1428.8,677.2 1428.8,676.8 1429.8,676.8 1429.8,681.8 1430.8,681.8 1430.8,678.2 1431.8,678.2 1431.8,685.2 1432.8,685.2 1432.8,676.3 1433.8,676.3 1433.8,676.2 1434.8,676.2 1434.8,680.6 1435.8,680.6 1435.8,678.6 1436.8,678.6 1436.8,674.0 1437.8,674.0 1437.8,682.3 1438.8,682.3 1438.8,682.2 1439.8,682.2 1439.8,680.3 1440.8,680.3 1440.8,677.9 1441.8,677.9 1441.8,675.4 1442.8,675.4 1442.8,687.9 1443.8,687.9 1443.8,679.0 1444.8,679.0 1444.8,677.3 1445.8,677.3 1445.8,688.3 1446.8,688.3 1446.8,682.0 1447.8,682.0 1447.8,673.0 1448.8,673.0 1448.8,681.7 1449.8,681.7 1449.8,688.4 1450.8,688.4 1450.8,676.9 1451.8,676.9 1451.8,681.0 1452.8,681.0 1452.8,673.4 1453.8,673.4 1453.8,674.7 1454.8,674.7 1454.8,676.6 1455.8,676.6 1455.8,673.0 1456.8,673.0 1456.8,684.0 1457.8,684.0 1457.8,675.7 1458.8,675.7 1458.8,673.6 1459.8,673.6 1459.8,681.1 1460.8,681.1 1460.8,676.9 1461.8,676.9 1461.8,675.1 1462.8,675.1 1462.8,689.3 1463.8,689.3 1463.8,682.8 1464.8,682.8 1464.8,685.3 1465.8,685.3 1465.8,674.2 1466.8,674.2 1466.8,679.6 1467.8,679.6 1467.8,679.5 1468.8,679.5 1468.8,678.8 1469.8,678.8 1469.8,677.4 1470.8,677.4 1470.8,673.2 1471.8,673.2 1471.8,687.6 1472.8,687.6 1472.8,676.9 1473.8,676.9 1473.8,681.3 1474.8,681.3 1474.8,677.0 1475.8,677.0 1475.8,684.6 1476.8,684.6 1476.8,678.3 1477.8,678.3 1477.8,679.7 1478.8,679.7 1478.8,676.5 1479.8,676.5 1479.8,674.1 1480.8,674.1 1480.8,681.2 1481.8,681.2 1481.8,679.6 1481.9,679.6 1481.9,701" fill="#2ad698"/><polygon points="1481.9,668 1481.9,644.1 1482.9,644.1 1482.9,646.9 1483.9,646.9 1483.9,641.4 1484.9,641.4 1484.9,653.6 1485.9,653.6 1485.9,645.3 1486.9,645.3 1486.9,649.6 1487.9,649.6 1487.9,642.1 1488.9,642.1 1488.9,642.4 1489.9,642.4 1489.9,640.5 1490.9,640.5 1490.9,641.8 1491.9,641.8 1491.9,639.9 1492.9,639.9 1492.9,648.8 1493.9,648.8 1493.9,639.7 1494.9,639.7 1494.9,644.4 1495.9,644.4 1495.9,642.3 1496.9,642.3 1496.9,642.3 1497.9,642.3 1497.9,640.6 1498.9,640.6 1498.9,641.6 1499.9,641.6 1499.9,643.3 1500.9,643.3 1500.9,647.2 1501.9,647.2 1501.9,641.1 1502.9,641.1 1502.9,646.5 1503.9,646.5 1503.9,641.9 1504.9,641.9 1504.9,639.2 1505.9,639.2 1505.9,645.5 1506.9,645.5 1506.9,647.0 1507.9,647.0 1507.9,646.9 1508.9,646.9 1508.9,641.9 1509.9,641.9 1509.9,646.1 1510.9,646.1 1510.9,644.7 1511.9,644.7 1511.9,642.3 1512.9,642.3 1512.9,647.2 1513.9,647.2 1513.9,640.0 1514.9,640.0 1514.9,639.2 1515.9,639.2 1515.9,645.9 1516.9,645.9 1516.9,646.7 1517.9,646.7 1517.9,642.3 1518.9,642.3 1518.9,646.7 1519.9,646.7 1519.9,645.2 1520.9,645.2 1520.9,652.4 1521.9,652.4 1521.9,644.9 1522.9,644.9 1522.9,639.8 1523.9,639.8 1523.9,645.4 1524.9,645.4 1524.9,642.7 1525.9,642.7 1525.9,639.3 1526.9,639.3 1526.9,643.0 1527.9,643.0 1527.9,638.7 1528.9,638.7 1528.9,646.2 1529.9,646.2 1529.9,640.9 1530.9,640.9 1530.9,646.9 1531.9,646.9 1531.9,642.7 1532.9,642.7 1532.9,646.9 1533.9,646.9 1533.9,646.5 1534.9,646.5 1534.9,653.3 1535.9,653.3 1535.9,640.9 1536.9,640.9 1536.9,645.7 1537.9,645.7 1537.9,639.2 1538.9,639.2 1538.9,653.5 1539.9,653.5 1539.9,645.9 1540.9,645.9 1540.9,641.8 1541.9,641.8 1541.9,649.3 1542.9,649.3 1542.9,640.2 1543.9,640.2 1543.9,640.3 1544.9,640.3 1544.9,668" fill="#2ad698"/><polygon points="1481.9,701 1481.9,679.5 1482.9,679.5 1482.9,676.2 1483.9,676.2 1483.9,671.9 1484.9,671.9 1484.9,676.2 1485.9,676.2 1485.9,677.6 1486.9,677.6 1486.9,677.0 1487.9,677.0 1487.9,679.7 1488.9,679.7 1488.9,674.6 1489.9,674.6 1489.9,677.5 1490.9,677.5 1490.9,678.8 1491.9,678.8 1491.9,683.6 1492.9,683.6 1492.9,678.9 1493.9,678.9 1493.9,679.8 1494.9,679.8 1494.9,684.7 1495.9,684.7 1495.9,679.0 1496.9,679.0 1496.9,671.9 1497.9,671.9 1497.9,680.3 1498.9,680.3 1498.9,675.1 1499.9,675.1 1499.9,680.0 1500.9,680.0 1500.9,676.6 1501.9,676.6 1501.9,677.8 1502.9,677.8 1502.9,673.8 1503.9,673.8 1503.9,679.7 1504.9,679.7 1504.9,673.7 1505.9,673.7 1505.9,675.3 1506.9,675.3 1506.9,673.4 1507.9,673.4 1507.9,685.1 1508.9,685.1 1508.9,678.7 1509.9,678.7 1509.9,677.8 1510.9,677.8 1510.9,675.8 1511.9,675.8 1511.9,676.6 1512.9,676.6 1512.9,675.3 1513.9,675.3 1513.9,679.4 1514.9,679.4 1514.9,672.6 1515.9,672.6 1515.9,674.8 1516.9,674.8 1516.9,679.8 1517.9,679.8 1517.9,674.9 1518.9,674.9 1518.9,684.7 1519.9,684.7 1519.9,677.8 1520.9,677.8 1520.9,675.4 1521.9,675.4 1521.9,674.6 1522.9,674.6 1522.9,673.2 1523.9,673.2 1523.9,677.5 1524.9,677.5 1524.9,676.7 1525.9,676.7 1525.9,680.0 1526.9,680.0 1526.9,672.9 1527.9,672.9 1527.9,672.4 1528.9,672.4 1528.9,676.0 1529.9,676.0 1529.9,674.8 1530.9,674.8 1530.9,681.1 1531.9,681.1 1531.9,679.8 1532.9,679.8 1532.9,673.2 1533.9,673.2 1533.9,674.6 1534.9,674.6 1534.9,686.0 1535.9,686.0 1535.9,673.0 1536.9,673.0 1536.9,675.3 1537.9,675.3 1537.9,676.5 1538.9,676.5 1538.9,679.6 1539.9,679.6 1539.9,672.9 1540.9,672.9 1540.9,680.2 1541.9,680.2 1541.9,677.3 1542.9,677.3 1542.9,679.3 1543.9,679.3 1543.9,678.1 1544.9,678.1 1544.9,701" fill="#2ad698"/><polygon points="1544.9,668 1544.9,645.6 1545.9,645.6 1545.9,642.2 1546.9,642.2 1546.9,644.8 1547.9,644.8 1547.9,648.6 1548.9,648.6 1548.9,648.2 1549.9,648.2 1549.9,646.6 1550.9,646.6 1550.9,644.8 1551.9,644.8 1551.9,644.8 1552.9,644.8 1552.9,645.8 1553.9,645.8 1553.9,649.6 1554.9,649.6 1554.9,640.8 1555.9,640.8 1555.9,646.9 1556.9,646.9 1556.9,646.8 1557.9,646.8 1557.9,649.2 1558.9,649.2 1558.9,645.1 1559.9,645.1 1559.9,642.7 1560.9,642.7 1560.9,650.6 1561.9,650.6 1561.9,646.5 1562.9,646.5 1562.9,647.3 1563.9,647.3 1563.9,648.2 1564.9,648.2 1564.9,641.3 1565.9,641.3 1565.9,648.0 1566.9,648.0 1566.9,648.1 1567.9,648.1 1567.9,642.1 1568.9,642.1 1568.9,643.8 1569.9,643.8 1569.9,640.7 1570.9,640.7 1570.9,643.2 1571.9,643.2 1571.9,657.7 1572.9,657.7 1572.9,644.8 1573.9,644.8 1573.9,648.5 1574.9,648.5 1574.9,644.6 1575.9,644.6 1575.9,642.1 1576.9,642.1 1576.9,640.3 1577.9,640.3 1577.9,641.3 1578.9,641.3 1578.9,642.2 1579.9,642.2 1579.9,648.4 1580.9,648.4 1580.9,653.1 1581.9,653.1 1581.9,645.6 1582.9,645.6 1582.9,644.5 1583.9,644.5 1583.9,640.6 1584.9,640.6 1584.9,648.5 1585.9,648.5 1585.9,646.2 1586.9,646.2 1586.9,649.7 1587.9,649.7 1587.9,647.8 1588.7,647.8 1588.7,668" fill="#2ad698"/><polygon points="1544.9,701 1544.9,679.9 1545.9,679.9 1545.9,690.7 1546.9,690.7 1546.9,679.3 1547.9,679.3 1547.9,680.6 1548.9,680.6 1548.9,688.5 1549.9,688.5 1549.9,674.0 1550.9,674.0 1550.9,675.2 1551.9,675.2 1551.9,673.8 1552.9,673.8 1552.9,681.6 1553.9,681.6 1553.9,673.6 1554.9,673.6 1554.9,674.6 1555.9,674.6 1555.9,676.3 1556.9,676.3 1556.9,679.0 1557.9,679.0 1557.9,681.6 1558.9,681.6 1558.9,674.2 1559.9,674.2 1559.9,681.1 1560.9,681.1 1560.9,680.3 1561.9,680.3 1561.9,682.4 1562.9,682.4 1562.9,673.3 1563.9,673.3 1563.9,677.2 1564.9,677.2 1564.9,675.4 1565.9,675.4 1565.9,683.6 1566.9,683.6 1566.9,673.0 1567.9,673.0 1567.9,678.9 1568.9,678.9 1568.9,680.7 1569.9,680.7 1569.9,678.7 1570.9,678.7 1570.9,673.5 1571.9,673.5 1571.9,676.4 1572.9,676.4 1572.9,675.5 1573.9,675.5 1573.9,681.1 1574.9,681.1 1574.9,682.0 1575.9,682.0 1575.9,682.3 1576.9,682.3 1576.9,678.7 1577.9,678.7 1577.9,682.4 1578.9,682.4 1578.9,677.5 1579.9,677.5 1579.9,680.4 1580.9,680.4 1580.9,682.3 1581.9,682.3 1581.9,677.0 1582.9,677.0 1582.9,680.6 1583.9,680.6 1583.9,682.3 1584.9,682.3 1584.9,676.1 1585.9,676.1 1585.9,679.7 1586.9,679.7 1586.9,674.9 1587.9,674.9 1587.9,680.1 1588.7,680.1 1588.7,701" fill="#2ad698"/><polygon points="1588.7,668 1588.7,638.1 1589.7,638.1 1589.7,637.0 1590.7,637.0 1590.7,642.8 1591.7,642.8 1591.7,641.3 1592.7,641.3 1592.7,638.1 1593.7,638.1 1593.7,639.4 1594.7,639.4 1594.7,639.2 1595.7,639.2 1595.7,639.3 1596.7,639.3 1596.7,640.4 1597.7,640.4 1597.7,639.2 1598.7,639.2 1598.7,638.5 1599.7,638.5 1599.7,640.0 1600.7,640.0 1600.7,638.1 1601.7,638.1 1601.7,638.4 1602.7,638.4 1602.7,639.4 1603.7,639.4 1603.7,639.5 1604.7,639.5 1604.7,643.6 1605.7,643.6 1605.7,641.2 1606.7,641.2 1606.7,640.3 1607.7,640.3 1607.7,640.7 1608.7,640.7 1608.7,639.8 1609.7,639.8 1609.7,639.2 1610.7,639.2 1610.7,638.4 1611.7,638.4 1611.7,639.5 1612.7,639.5 1612.7,638.4 1613.7,638.4 1613.7,636.8 1614.7,636.8 1614.7,637.5 1615.7,637.5 1615.7,640.4 1616.7,640.4 1616.7,637.4 1617.7,637.4 1617.7,637.6 1618.7,637.6 1618.7,641.4 1619.7,641.4 1619.7,640.3 1620.7,640.3 1620.7,637.6 1621.7,637.6 1621.7,638.4 1622.7,638.4 1622.7,639.6 1623.7,639.6 1623.7,644.5 1624.7,644.5 1624.7,638.8 1625.7,638.8 1625.7,641.3 1626.7,641.3 1626.7,640.4 1627.7,640.4 1627.7,639.1 1628.7,639.1 1628.7,639.5 1629.7,639.5 1629.7,640.0 1630.7,640.0 1630.7,643.3 1631.7,643.3 1631.7,639.9 1632.7,639.9 1632.7,641.5 1633.7,641.5 1633.7,640.9 1634.7,640.9 1634.7,638.1 1635.7,638.1 1635.7,639.7 1636.7,639.7 1636.7,638.5 1637.7,638.5 1637.7,641.9 1638.7,641.9 1638.7,639.0 1639.7,639.0 1639.7,636.7 1640.7,636.7 1640.7,640.7 1641.7,640.7 1641.7,641.4 1642.7,641.4 1642.7,639.2 1643.7,639.2 1643.7,642.8 1644.7,642.8 1644.7,641.0 1645.7,641.0 1645.7,643.2 1646.7,643.2 1646.7,640.0 1647.7,640.0 1647.7,643.0 1648.7,643.0 1648.7,637.6 1649.7,637.6 1649.7,639.1 1650.7,639.1 1650.7,641.5 1651.7,641.5 1651.7,639.1 1652.7,639.1 1652.7,638.8 1653.7,638.8 1653.7,639.5 1654.7,639.5 1654.7,640.6 1655.7,640.6 1655.7,637.8 1656.7,637.8 1656.7,639.7 1657.7,639.7 1657.7,641.3 1658.7,641.3 1658.7,644.0 1659.7,644.0 1659.7,642.2 1660.7,642.2 1660.7,637.0 1661.7,637.0 1661.7,636.9 1662.7,636.9 1662.7,639.1 1663.7,639.1 1663.7,637.6 1664.7,637.6 1664.7,640.4 1665.7,640.4 1665.7,638.1 1666.7,638.1 1666.7,641.6 1667.7,641.6 1667.7,637.4 1668.7,637.4 1668.7,641.0 1669.7,641.0 1669.7,637.7 1670.7,637.7 1670.7,638.7 1671.7,638.7 1671.7,638.9 1672.7,638.9 1672.7,638.8 1673.7,638.8 1673.7,639.3 1674.7,639.3 1674.7,640.5 1675.7,640.5 1675.7,640.2 1676.7,640.2 1676.7,640.6 1677.7,640.6 1677.7,637.6 1678.7,637.6 1678.7,636.8 1679.7,636.8 1679.7,639.5 1680.7,639.5 1680.7,637.8 1681.7,637.8 1681.7,640.3 1682.7,640.3 1682.7,644.3 1683.7,644.3 1683.7,637.4 1684.7,637.4 1684.7,645.3 1685.7,645.3 1685.7,649.2 1686.7,649.2 1686.7,646.3 1687.7,646.3 1687.7,668" fill="#2ad698"/><polygon points="1588.7,701 1588.7,670.8 1589.7,670.8 1589.7,673.8 1590.7,673.8 1590.7,673.7 1591.7,673.7 1591.7,677.8 1592.7,677.8 1592.7,672.1 1593.7,672.1 1593.7,676.3 1594.7,676.3 1594.7,673.7 1595.7,673.7 1595.7,673.0 1596.7,673.0 1596.7,674.3 1597.7,674.3 1597.7,673.7 1598.7,673.7 1598.7,673.4 1599.7,673.4 1599.7,675.5 1600.7,675.5 1600.7,675.2 1601.7,675.2 1601.7,671.8 1602.7,671.8 1602.7,673.4 1603.7,673.4 1603.7,671.4 1604.7,671.4 1604.7,672.1 1605.7,672.1 1605.7,670.5 1606.7,670.5 1606.7,673.9 1607.7,673.9 1607.7,670.7 1608.7,670.7 1608.7,669.9 1609.7,669.9 1609.7,673.2 1610.7,673.2 1610.7,671.8 1611.7,671.8 1611.7,674.0 1612.7,674.0 1612.7,672.8 1613.7,672.8 1613.7,670.9 1614.7,670.9 1614.7,671.8 1615.7,671.8 1615.7,673.7 1616.7,673.7 1616.7,675.8 1617.7,675.8 1617.7,672.3 1618.7,672.3 1618.7,670.2 1619.7,670.2 1619.7,673.2 1620.7,673.2 1620.7,670.4 1621.7,670.4 1621.7,671.1 1622.7,671.1 1622.7,670.3 1623.7,670.3 1623.7,671.1 1624.7,671.1 1624.7,672.0 1625.7,672.0 1625.7,670.6 1626.7,670.6 1626.7,672.4 1627.7,672.4 1627.7,670.4 1628.7,670.4 1628.7,673.2 1629.7,673.2 1629.7,670.1 1630.7,670.1 1630.7,670.2 1631.7,670.2 1631.7,673.5 1632.7,673.5 1632.7,671.4 1633.7,671.4 1633.7,673.5 1634.7,673.5 1634.7,675.1 1635.7,675.1 1635.7,670.8 1636.7,670.8 1636.7,670.1 1637.7,670.1 1637.7,673.7 1638.7,673.7 1638.7,671.3 1639.7,671.3 1639.7,674.2 1640.7,674.2 1640.7,671.6 1641.7,671.6 1641.7,676.6 1642.7,676.6 1642.7,670.1 1643.7,670.1 1643.7,673.7 1644.7,673.7 1644.7,673.6 1645.7,673.6 1645.7,671.3 1646.7,671.3 1646.7,674.2 1647.7,674.2 1647.7,673.3 1648.7,673.3 1648.7,673.4 1649.7,673.4 1649.7,670.3 1650.7,670.3 1650.7,670.6 1651.7,670.6 1651.7,674.3 1652.7,674.3 1652.7,676.9 1653.7,676.9 1653.7,673.0 1654.7,673.0 1654.7,672.5 1655.7,672.5 1655.7,672.0 1656.7,672.0 1656.7,669.8 1657.7,669.8 1657.7,670.0 1658.7,670.0 1658.7,672.5 1659.7,672.5 1659.7,677.1 1660.7,677.1 1660.7,670.2 1661.7,670.2 1661.7,672.3 1662.7,672.3 1662.7,670.1 1663.7,670.1 1663.7,669.9 1664.7,669.9 1664.7,671.5 1665.7,671.5 1665.7,673.2 1666.7,673.2 1666.7,677.0 1667.7,677.0 1667.7,674.3 1668.7,674.3 1668.7,673.7 1669.7,673.7 1669.7,671.3 1670.7,671.3 1670.7,677.2 1671.7,677.2 1671.7,673.5 1672.7,673.5 1672.7,670.9 1673.7,670.9 1673.7,673.9 1674.7,673.9 1674.7,672.4 1675.7,672.4 1675.7,672.9 1676.7,672.9 1676.7,673.1 1677.7,673.1 1677.7,674.4 1678.7,674.4 1678.7,673.6 1679.7,673.6 1679.7,672.6 1680.7,672.6 1680.7,673.6 1681.7,673.6 1681.7,674.8 1682.7,674.8 1682.7,673.1 1683.7,673.1 1683.7,672.6 1684.7,672.6 1684.7,677.4 1685.7,677.4 1685.7,681.9 1686.7,681.9 1686.7,677.2 1687.7,677.2 1687.7,701" fill="#2ad698"/><polygon points="1687.7,668 1687.7,643.0 1688.7,643.0 1688.7,639.6 1689.7,639.6 1689.7,645.9 1690.7,645.9 1690.7,647.3 1691.7,647.3 1691.7,647.3 1692.7,647.3 1692.7,648.4 1693.7,648.4 1693.7,643.0 1694.7,643.0 1694.7,648.2 1695.7,648.2 1695.7,642.2 1696.7,642.2 1696.7,651.2 1697.7,651.2 1697.7,642.3 1698.7,642.3 1698.7,650.0 1699.7,650.0 1699.7,654.7 1700.7,654.7 1700.7,652.1 1701.7,652.1 1701.7,656.1 1702.7,656.1 1702.7,642.2 1703.7,642.2 1703.7,648.8 1704.7,648.8 1704.7,650.8 1705.7,650.8 1705.7,648.9 1706.7,648.9 1706.7,652.3 1707.7,652.3 1707.7,657.1 1708.7,657.1 1708.7,657.5 1709.7,657.5 1709.7,660.5 1710.7,660.5 1710.7,655.1 1711.7,655.1 1711.7,660.6 1712.7,660.6 1712.7,658.0 1713.7,658.0 1713.7,661.7 1714.7,661.7 1714.7,658.2 1715.7,658.2 1715.7,664.0 1716.7,664.0 1716.7,664.6 1717.7,664.6 1717.7,651.9 1718.7,651.9 1718.7,662.7 1719.7,662.7 1719.7,667.0 1720.7,667.0 1720.7,659.9 1721.7,659.9 1721.7,667.0 1721.9,667.0 1721.9,668" fill="#2ad698"/><polygon points="1687.7,701 1687.7,681.2 1688.7,681.2 1688.7,686.0 1689.7,686.0 1689.7,678.3 1690.7,678.3 1690.7,671.9 1691.7,671.9 1691.7,680.1 1692.7,680.1 1692.7,685.2 1693.7,685.2 1693.7,676.3 1694.7,676.3 1694.7,684.6 1695.7,684.6 1695.7,692.3 1696.7,692.3 1696.7,691.8 1697.7,691.8 1697.7,687.6 1698.7,687.6 1698.7,693.3 1699.7,693.3 1699.7,694.2 1700.7,694.2 1700.7,690.1 1701.7,690.1 1701.7,693.1 1702.7,693.1 1702.7,696.0 1703.7,696.0 1703.7,694.9 1704.7,694.9 1704.7,689.1 1705.7,689.1 1705.7,683.1 1706.7,683.1 1706.7,695.0 1707.7,695.0 1707.7,694.2 1708.7,694.2 1708.7,692.1 1709.7,692.1 1709.7,687.7 1710.7,687.7 1710.7,692.3 1711.7,692.3 1711.7,695.5 1712.7,695.5 1712.7,695.1 1713.7,695.1 1713.7,687.3 1714.7,687.3 1714.7,691.1 1715.7,691.1 1715.7,684.6 1716.7,684.6 1716.7,689.2 1717.7,689.2 1717.7,688.5 1718.7,688.5 1718.7,683.7 1719.7,683.7 1719.7,679.7 1720.7,679.7 1720.7,692.2 1721.7,692.2 1721.7,681.8 1721.9,681.8 1721.9,701" fill="#2ad698"/><polygon points="1721.9,668 1721.9,657.9 1722.9,657.9 1722.9,650.7 1723.9,650.7 1723.9,654.1 1724.9,654.1 1724.9,650.2 1725.9,650.2 1725.9,657.7 1726.9,657.7 1726.9,642.1 1727.9,642.1 1727.9,658.2 1728.9,658.2 1728.9,641.1 1729.9,641.1 1729.9,656.2 1730.9,656.2 1730.9,655.7 1731.9,655.7 1731.9,644.6 1732.9,644.6 1732.9,650.0 1733.9,650.0 1733.9,653.6 1734.9,653.6 1734.9,646.2 1735.9,646.2 1735.9,650.4 1736.9,650.4 1736.9,641.6 1737.9,641.6 1737.9,640.1 1738.9,640.1 1738.9,637.8 1739.9,637.8 1739.9,640.1 1740.9,640.1 1740.9,643.0 1741.9,643.0 1741.9,637.6 1742.9,637.6 1742.9,638.1 1743.9,638.1 1743.9,638.0 1744.9,638.0 1744.9,640.6 1745.9,640.6 1745.9,639.9 1746.9,639.9 1746.9,638.8 1747.9,638.8 1747.9,637.4 1748.9,637.4 1748.9,639.8 1749.9,639.8 1749.9,637.3 1750.9,637.3 1750.9,640.9 1751.9,640.9 1751.9,640.5 1752.9,640.5 1752.9,638.6 1753.9,638.6 1753.9,638.3 1754.9,638.3 1754.9,639.2 1755.9,639.2 1755.9,640.3 1756.9,640.3 1756.9,643.8 1757.9,643.8 1757.9,640.1 1758.9,640.1 1758.9,641.1 1759.9,641.1 1759.9,637.4 1760.9,637.4 1760.9,638.7 1761.9,638.7 1761.9,640.8 1762.9,640.8 1762.9,637.4 1763.9,637.4 1763.9,637.9 1764.9,637.9 1764.9,639.8 1765.9,639.8 1765.9,640.4 1766.9,640.4 1766.9,639.1 1767.9,639.1 1767.9,644.3 1768.9,644.3 1768.9,641.2 1769.9,641.2 1769.9,639.4 1770.9,639.4 1770.9,637.1 1771.9,637.1 1771.9,639.0 1772.9,639.0 1772.9,637.4 1773.9,637.4 1773.9,639.4 1774.9,639.4 1774.9,636.9 1775.9,636.9 1775.9,641.1 1776.9,641.1 1776.9,640.5 1777.9,640.5 1777.9,640.7 1778.9,640.7 1778.9,638.4 1779.9,638.4 1779.9,644.0 1780.9,644.0 1780.9,640.3 1781.9,640.3 1781.9,638.3 1782.9,638.3 1782.9,639.2 1783.9,639.2 1783.9,642.9 1784.9,642.9 1784.9,640.7 1785.9,640.7 1785.9,640.5 1786.9,640.5 1786.9,641.3 1787.9,641.3 1787.9,641.0 1788.9,641.0 1788.9,639.6 1789.9,639.6 1789.9,639.7 1790.9,639.7 1790.9,640.5 1791.9,640.5 1791.9,636.8 1792.9,636.8 1792.9,636.8 1793.9,636.8 1793.9,638.8 1794.9,638.8 1794.9,644.6 1795.9,644.6 1795.9,642.8 1796.9,642.8 1796.9,640.0 1797.9,640.0 1797.9,639.7 1798.9,639.7 1798.9,640.6 1799.9,640.6 1799.9,641.9 1800.9,641.9 1800.9,637.8 1801.9,637.8 1801.9,640.1 1802.9,640.1 1802.9,636.9 1803.9,636.9 1803.9,643.0 1804.9,643.0 1804.9,637.4 1805.9,637.4 1805.9,640.9 1806.9,640.9 1806.9,643.8 1807.9,643.8 1807.9,640.0 1808.9,640.0 1808.9,643.7 1809.9,643.7 1809.9,639.4 1810.9,639.4 1810.9,640.8 1811.9,640.8 1811.9,640.1 1812.9,640.1 1812.9,637.6 1813.9,637.6 1813.9,639.7 1814.9,639.7 1814.9,640.6 1815.9,640.6 1815.9,637.6 1816.9,637.6 1816.9,638.7 1817.9,638.7 1817.9,637.9 1818.9,637.9 1818.9,638.2 1819.9,638.2 1819.9,637.7 1820.9,637.7 1820.9,640.4 1821.9,640.4 1821.9,640.1 1822.9,640.1 1822.9,639.6 1823.9,639.6 1823.9,641.0 1824.9,641.0 1824.9,645.0 1825.9,645.0 1825.9,642.7 1826.9,642.7 1826.9,643.2 1827.9,643.2 1827.9,639.5 1828.9,639.5 1828.9,638.5 1829.9,638.5 1829.9,639.2 1830.9,639.2 1830.9,637.8 1831.9,637.8 1831.9,638.0 1832.9,638.0 1832.9,641.3 1833.9,641.3 1833.9,637.2 1834.9,637.2 1834.9,641.1 1835.9,641.1 1835.9,638.0 1836.9,638.0 1836.9,644.7 1837.9,644.7 1837.9,641.0 1838.9,641.0 1838.9,637.4 1839.9,637.4 1839.9,638.5 1840.9,638.5 1840.9,638.1 1841.9,638.1 1841.9,638.8 1842.9,638.8 1842.9,642.4 1843.9,642.4 1843.9,640.1 1844.9,640.1 1844.9,637.1 1845.9,637.1 1845.9,641.2 1846.9,641.2 1846.9,641.1 1847.9,641.1 1847.9,641.4 1848.9,641.4 1848.9,644.4 1849.9,644.4 1849.9,645.0 1850.9,645.0 1850.9,644.0 1851.9,644.0 1851.9,639.1 1852.9,639.1 1852.9,637.5 1853.9,637.5 1853.9,637.2 1854.9,637.2 1854.9,643.4 1855.9,643.4 1855.9,647.2 1856.9,647.2 1856.9,643.7 1857.9,643.7 1857.9,640.8 1858.9,640.8 1858.9,651.5 1859.9,651.5 1859.9,654.0 1860.9,654.0 1860.9,660.6 1861.9,660.6 1861.9,661.5 1862.9,661.5 1862.9,654.2 1863,654.2 1863,668" fill="#2ad698"/><polygon points="1721.9,701 1721.9,680.9 1722.9,680.9 1722.9,680.5 1723.9,680.5 1723.9,679.3 1724.9,679.3 1724.9,684.8 1725.9,684.8 1725.9,682.8 1726.9,682.8 1726.9,678.9 1727.9,678.9 1727.9,686.3 1728.9,686.3 1728.9,683.0 1729.9,683.0 1729.9,683.0 1730.9,683.0 1730.9,678.5 1731.9,678.5 1731.9,681.7 1732.9,681.7 1732.9,680.1 1733.9,680.1 1733.9,678.8 1734.9,678.8 1734.9,684.5 1735.9,684.5 1735.9,684.3 1736.9,684.3 1736.9,678.2 1737.9,678.2 1737.9,680.5 1738.9,680.5 1738.9,677.8 1739.9,677.8 1739.9,682.2 1740.9,682.2 1740.9,678.8 1741.9,678.8 1741.9,676.6 1742.9,676.6 1742.9,677.9 1743.9,677.9 1743.9,676.4 1744.9,676.4 1744.9,683.9 1745.9,683.9 1745.9,675.6 1746.9,675.6 1746.9,676.1 1747.9,676.1 1747.9,677.4 1748.9,677.4 1748.9,674.1 1749.9,674.1 1749.9,673.2 1750.9,673.2 1750.9,679.4 1751.9,679.4 1751.9,671.4 1752.9,671.4 1752.9,678.3 1753.9,678.3 1753.9,680.3 1754.9,680.3 1754.9,677.3 1755.9,677.3 1755.9,681.7 1756.9,681.7 1756.9,677.1 1757.9,677.1 1757.9,677.3 1758.9,677.3 1758.9,674.3 1759.9,674.3 1759.9,671.8 1760.9,671.8 1760.9,675.5 1761.9,675.5 1761.9,674.2 1762.9,674.2 1762.9,671.5 1763.9,671.5 1763.9,675.7 1764.9,675.7 1764.9,679.1 1765.9,679.1 1765.9,676.7 1766.9,676.7 1766.9,674.5 1767.9,674.5 1767.9,677.3 1768.9,677.3 1768.9,677.0 1769.9,677.0 1769.9,675.6 1770.9,675.6 1770.9,671.9 1771.9,671.9 1771.9,682.4 1772.9,682.4 1772.9,676.3 1773.9,676.3 1773.9,677.3 1774.9,677.3 1774.9,671.6 1775.9,671.6 1775.9,673.6 1776.9,673.6 1776.9,676.0 1777.9,676.0 1777.9,674.7 1778.9,674.7 1778.9,676.6 1779.9,676.6 1779.9,671.1 1780.9,671.1 1780.9,671.2 1781.9,671.2 1781.9,672.6 1782.9,672.6 1782.9,671.3 1783.9,671.3 1783.9,674.0 1784.9,674.0 1784.9,674.4 1785.9,674.4 1785.9,673.1 1786.9,673.1 1786.9,677.7 1787.9,677.7 1787.9,671.6 1788.9,671.6 1788.9,677.1 1789.9,677.1 1789.9,676.0 1790.9,676.0 1790.9,681.9 1791.9,681.9 1791.9,677.0 1792.9,677.0 1792.9,674.3 1793.9,674.3 1793.9,677.9 1794.9,677.9 1794.9,679.5 1795.9,679.5 1795.9,676.9 1796.9,676.9 1796.9,672.5 1797.9,672.5 1797.9,675.4 1798.9,675.4 1798.9,675.2 1799.9,675.2 1799.9,675.9 1800.9,675.9 1800.9,677.0 1801.9,677.0 1801.9,677.5 1802.9,677.5 1802.9,679.7 1803.9,679.7 1803.9,674.8 1804.9,674.8 1804.9,676.9 1805.9,676.9 1805.9,676.3 1806.9,676.3 1806.9,674.3 1807.9,674.3 1807.9,677.8 1808.9,677.8 1808.9,675.7 1809.9,675.7 1809.9,679.9 1810.9,679.9 1810.9,677.8 1811.9,677.8 1811.9,675.9 1812.9,675.9 1812.9,677.9 1813.9,677.9 1813.9,677.2 1814.9,677.2 1814.9,678.0 1815.9,678.0 1815.9,673.0 1816.9,673.0 1816.9,677.7 1817.9,677.7 1817.9,678.3 1818.9,678.3 1818.9,673.1 1819.9,673.1 1819.9,671.4 1820.9,671.4 1820.9,678.3 1821.9,678.3 1821.9,674.7 1822.9,674.7 1822.9,680.9 1823.9,680.9 1823.9,678.0 1824.9,678.0 1824.9,676.6 1825.9,676.6 1825.9,672.3 1826.9,672.3 1826.9,676.9 1827.9,676.9 1827.9,673.4 1828.9,673.4 1828.9,679.1 1829.9,679.1 1829.9,673.8 1830.9,673.8 1830.9,674.7 1831.9,674.7 1831.9,677.5 1832.9,677.5 1832.9,673.0 1833.9,673.0 1833.9,671.4 1834.9,671.4 1834.9,681.2 1835.9,681.2 1835.9,678.3 1836.9,678.3 1836.9,677.6 1837.9,677.6 1837.9,672.0 1838.9,672.0 1838.9,682.5 1839.9,682.5 1839.9,678.2 1840.9,678.2 1840.9,678.0 1841.9,678.0 1841.9,672.5 1842.9,672.5 1842.9,671.0 1843.9,671.0 1843.9,673.4 1844.9,673.4 1844.9,674.0 1845.9,674.0 1845.9,676.2 1846.9,676.2 1846.9,676.8 1847.9,676.8 1847.9,674.3 1848.9,674.3 1848.9,671.5 1849.9,671.5 1849.9,677.4 1850.9,677.4 1850.9,677.3 1851.9,677.3 1851.9,675.4 1852.9,675.4 1852.9,675.6 1853.9,675.6 1853.9,671.9 1854.9,671.9 1854.9,678.4 1855.9,678.4 1855.9,674.9 1856.9,674.9 1856.9,679.6 1857.9,679.6 1857.9,681.7 1858.9,681.7 1858.9,677.9 1859.9,677.9 1859.9,680.6 1860.9,680.6 1860.9,690.7 1861.9,690.7 1861.9,695.8 1862.9,695.8 1862.9,700.0 1863,700.0 1863,701" fill="#2ad698"/><rect x="236" y="667.4" width="1627" height="1.6" fill="#1b7a5b"/><rect x="252" y="650" width="12" height="13.5" fill="#176a4e" opacity="0.88"/><rect x="269.6" y="659.4" width="1" height="1" fill="#9fe0c4"/><rect x="252" y="684" width="12" height="13.5" fill="#176a4e" opacity="0.88"/><rect x="269.6" y="693.4" width="1" height="1" fill="#9fe0c4"/><rect x="292" y="650" width="12" height="13.5" fill="#176a4e" opacity="0.88"/><rect x="309.6" y="659.4" width="1" height="1" fill="#9fe0c4"/><rect x="292" y="684" width="12" height="13.5" fill="#176a4e" opacity="0.88"/><rect x="309.6" y="693.4" width="1" height="1" fill="#9fe0c4"/><rect x="335" y="650" width="12" height="13.5" fill="#176a4e" opacity="0.88"/><rect x="352.6" y="659.4" width="1" height="1" fill="#9fe0c4"/><rect x="335" y="684" width="12" height="13.5" fill="#176a4e" opacity="0.88"/><rect x="352.6" y="693.4" width="1" height="1" fill="#9fe0c4"/><rect x="402" y="650" width="12" height="13.5" fill="#176a4e" opacity="0.88"/><rect x="419.6" y="659.4" width="1" height="1" fill="#9fe0c4"/><rect x="402" y="684" width="12" height="13.5" fill="#176a4e" opacity="0.88"/><rect x="419.6" y="693.4" width="1" height="1" fill="#9fe0c4"/><rect x="444" y="650" width="12" height="13.5" fill="#176a4e" opacity="0.88"/><rect x="461.6" y="659.4" width="1" height="1" fill="#9fe0c4"/><rect x="444" y="684" width="12" height="13.5" fill="#176a4e" opacity="0.88"/><rect x="461.6" y="693.4" width="1" height="1" fill="#9fe0c4"/><rect x="464" y="650" width="12" height="13.5" fill="#176a4e" opacity="0.88"/><rect x="481.6" y="659.4" width="1" height="1" fill="#9fe0c4"/><rect x="464" y="684" width="12" height="13.5" fill="#176a4e" opacity="0.88"/><rect x="481.6" y="693.4" width="1" height="1" fill="#9fe0c4"/><rect x="502" y="650" width="12" height="13.5" fill="#176a4e" opacity="0.88"/><rect x="519.6" y="659.4" width="1" height="1" fill="#9fe0c4"/><rect x="502" y="684" width="12" height="13.5" fill="#176a4e" opacity="0.88"/><rect x="519.6" y="693.4" width="1" height="1" fill="#9fe0c4"/><rect x="532" y="650" width="12" height="13.5" fill="#176a4e" opacity="0.88"/><rect x="549.6" y="659.4" width="1" height="1" fill="#9fe0c4"/><rect x="532" y="684" width="12" height="13.5" fill="#176a4e" opacity="0.88"/><rect x="549.6" y="693.4" width="1" height="1" fill="#9fe0c4"/><rect x="553" y="650" width="12" height="13.5" fill="#176a4e" opacity="0.88"/><rect x="570.6" y="659.4" width="1" height="1" fill="#9fe0c4"/><rect x="553" y="684" width="12" height="13.5" fill="#176a4e" opacity="0.88"/><rect x="570.6" y="693.4" width="1" height="1" fill="#9fe0c4"/><rect x="595" y="650" width="12" height="13.5" fill="#176a4e" opacity="0.88"/><rect x="612.6" y="659.4" width="1" height="1" fill="#9fe0c4"/><rect x="595" y="684" width="12" height="13.5" fill="#176a4e" opacity="0.88"/><rect x="612.6" y="693.4" width="1" height="1" fill="#9fe0c4"/><rect x="657" y="650" width="12" height="13.5" fill="#176a4e" opacity="0.88"/><rect x="674.6" y="659.4" width="1" height="1" fill="#9fe0c4"/><rect x="657" y="684" width="12" height="13.5" fill="#176a4e" opacity="0.88"/><rect x="674.6" y="693.4" width="1" height="1" fill="#9fe0c4"/><rect x="700" y="650" width="12" height="13.5" fill="#176a4e" opacity="0.88"/><rect x="717.6" y="659.4" width="1" height="1" fill="#9fe0c4"/><rect x="700" y="684" width="12" height="13.5" fill="#176a4e" opacity="0.88"/><rect x="717.6" y="693.4" width="1" height="1" fill="#9fe0c4"/><rect x="754" y="650" width="12" height="13.5" fill="#176a4e" opacity="0.88"/><rect x="771.6" y="659.4" width="1" height="1" fill="#9fe0c4"/><rect x="754" y="684" width="12" height="13.5" fill="#176a4e" opacity="0.88"/><rect x="771.6" y="693.4" width="1" height="1" fill="#9fe0c4"/><rect x="823" y="650" width="12" height="13.5" fill="#176a4e" opacity="0.88"/><rect x="840.6" y="659.4" width="1" height="1" fill="#9fe0c4"/><rect x="823" y="684" width="12" height="13.5" fill="#176a4e" opacity="0.88"/><rect x="840.6" y="693.4" width="1" height="1" fill="#9fe0c4"/><rect x="861" y="650" width="12" height="13.5" fill="#176a4e" opacity="0.88"/><rect x="878.6" y="659.4" width="1" height="1" fill="#9fe0c4"/><rect x="861" y="684" width="12" height="13.5" fill="#176a4e" opacity="0.88"/><rect x="878.6" y="693.4" width="1" height="1" fill="#9fe0c4"/><rect x="911" y="650" width="12" height="13.5" fill="#176a4e" opacity="0.88"/><rect x="928.6" y="659.4" width="1" height="1" fill="#9fe0c4"/><rect x="911" y="684" width="12" height="13.5" fill="#176a4e" opacity="0.88"/><rect x="928.6" y="693.4" width="1" height="1" fill="#9fe0c4"/><rect x="952" y="650" width="12" height="13.5" fill="#176a4e" opacity="0.88"/><rect x="969.6" y="659.4" width="1" height="1" fill="#9fe0c4"/><rect x="952" y="684" width="12" height="13.5" fill="#176a4e" opacity="0.88"/><rect x="969.6" y="693.4" width="1" height="1" fill="#9fe0c4"/><rect x="980" y="650" width="12" height="13.5" fill="#176a4e" opacity="0.88"/><rect x="997.6" y="659.4" width="1" height="1" fill="#9fe0c4"/><rect x="980" y="684" width="12" height="13.5" fill="#176a4e" opacity="0.88"/><rect x="997.6" y="693.4" width="1" height="1" fill="#9fe0c4"/><rect x="1052" y="650" width="12" height="13.5" fill="#176a4e" opacity="0.88"/><rect x="1069.6" y="659.4" width="1" height="1" fill="#9fe0c4"/><rect x="1052" y="684" width="12" height="13.5" fill="#176a4e" opacity="0.88"/><rect x="1069.6" y="693.4" width="1" height="1" fill="#9fe0c4"/><rect x="1098" y="650" width="12" height="13.5" fill="#176a4e" opacity="0.88"/><rect x="1115.6" y="659.4" width="1" height="1" fill="#9fe0c4"/><rect x="1098" y="684" width="12" height="13.5" fill="#176a4e" opacity="0.88"/><rect x="1115.6" y="693.4" width="1" height="1" fill="#9fe0c4"/><rect x="1137" y="650" width="12" height="13.5" fill="#176a4e" opacity="0.88"/><rect x="1154.6" y="659.4" width="1" height="1" fill="#9fe0c4"/><rect x="1137" y="684" width="12" height="13.5" fill="#176a4e" opacity="0.88"/><rect x="1154.6" y="693.4" width="1" height="1" fill="#9fe0c4"/><rect x="1165" y="650" width="12" height="13.5" fill="#176a4e" opacity="0.88"/><rect x="1182.6" y="659.4" width="1" height="1" fill="#9fe0c4"/><rect x="1165" y="684" width="12" height="13.5" fill="#176a4e" opacity="0.88"/><rect x="1182.6" y="693.4" width="1" height="1" fill="#9fe0c4"/><rect x="1261" y="650" width="12" height="13.5" fill="#176a4e" opacity="0.88"/><rect x="1278.6" y="659.4" width="1" height="1" fill="#9fe0c4"/><rect x="1261" y="684" width="12" height="13.5" fill="#176a4e" opacity="0.88"/><rect x="1278.6" y="693.4" width="1" height="1" fill="#9fe0c4"/><rect x="1369" y="650" width="12" height="13.5" fill="#176a4e" opacity="0.88"/><rect x="1386.6" y="659.4" width="1" height="1" fill="#9fe0c4"/><rect x="1369" y="684" width="12" height="13.5" fill="#176a4e" opacity="0.88"/><rect x="1386.6" y="693.4" width="1" height="1" fill="#9fe0c4"/><rect x="1429" y="650" width="12" height="13.5" fill="#176a4e" opacity="0.88"/><rect x="1446.6" y="659.4" width="1" height="1" fill="#9fe0c4"/><rect x="1429" y="684" width="12" height="13.5" fill="#176a4e" opacity="0.88"/><rect x="1446.6" y="693.4" width="1" height="1" fill="#9fe0c4"/><rect x="1484" y="650" width="12" height="13.5" fill="#176a4e" opacity="0.88"/><rect x="1501.6" y="659.4" width="1" height="1" fill="#9fe0c4"/><rect x="1484" y="684" width="12" height="13.5" fill="#176a4e" opacity="0.88"/><rect x="1501.6" y="693.4" width="1" height="1" fill="#9fe0c4"/><rect x="1547" y="650" width="12" height="13.5" fill="#176a4e" opacity="0.88"/><rect x="1564.6" y="659.4" width="1" height="1" fill="#9fe0c4"/><rect x="1547" y="684" width="12" height="13.5" fill="#176a4e" opacity="0.88"/><rect x="1564.6" y="693.4" width="1" height="1" fill="#9fe0c4"/><rect x="1591" y="650" width="12" height="13.5" fill="#176a4e" opacity="0.88"/><rect x="1608.6" y="659.4" width="1" height="1" fill="#9fe0c4"/><rect x="1591" y="684" width="12" height="13.5" fill="#176a4e" opacity="0.88"/><rect x="1608.6" y="693.4" width="1" height="1" fill="#9fe0c4"/><rect x="1690" y="650" width="12" height="13.5" fill="#176a4e" opacity="0.88"/><rect x="1707.6" y="659.4" width="1" height="1" fill="#9fe0c4"/><rect x="1690" y="684" width="12" height="13.5" fill="#176a4e" opacity="0.88"/><rect x="1707.6" y="693.4" width="1" height="1" fill="#9fe0c4"/><rect x="1724" y="650" width="12" height="13.5" fill="#176a4e" opacity="0.88"/><rect x="1741.6" y="659.4" width="1" height="1" fill="#9fe0c4"/><rect x="1724" y="684" width="12" height="13.5" fill="#176a4e" opacity="0.88"/><rect x="1741.6" y="693.4" width="1" height="1" fill="#9fe0c4"/><polyline points="244.8,683 249.4,683" fill="none" stroke="#5f8f7d" stroke-width="2.6" opacity=".55"/><polyline points="244.8,683 249.4,683" fill="none" stroke="#d2ddd8" stroke-width="1.3"/><polyline points="250.8,683 258.5,683 260.7,684 262.4,686.5 272.4,686.5 287.8,687.3 289,687.3" fill="none" stroke="#5f8f7d" stroke-width="2.6" opacity=".55"/><polyline points="250.8,683 258.5,683 260.7,684 262.4,686.5 272.4,686.5 287.8,687.3 289,687.3" fill="none" stroke="#d2ddd8" stroke-width="1.3"/><circle cx="260.7" cy="684" r="2.9" fill="#b9b9b9" stroke="#3d3d3d" stroke-width=".8"/><circle cx="262.4" cy="686.5" r="2.9" fill="#b9b9b9" stroke="#3d3d3d" stroke-width=".8"/><circle cx="272.4" cy="686.5" r="2.9" fill="#b9b9b9" stroke="#3d3d3d" stroke-width=".8"/><circle cx="287.8" cy="687.3" r="2.9" fill="#b9b9b9" stroke="#3d3d3d" stroke-width=".8"/><polyline points="290,686 293.3,685.6 309.5,680.6 312.5,689.5 314,687.8 332,687.8" fill="none" stroke="#5f8f7d" stroke-width="2.6" opacity=".55"/><polyline points="290,686 293.3,685.6 309.5,680.6 312.5,689.5 314,687.8 332,687.8" fill="none" stroke="#d2ddd8" stroke-width="1.3"/><circle cx="293.3" cy="685.6" r="2.9" fill="#b9b9b9" stroke="#3d3d3d" stroke-width=".8"/><circle cx="309.5" cy="680.6" r="2.9" fill="#b9b9b9" stroke="#3d3d3d" stroke-width=".8"/><circle cx="312.5" cy="689.5" r="2.9" fill="#b9b9b9" stroke="#3d3d3d" stroke-width=".8"/><polyline points="333,687.8 386.3,689.8 388.3,684.5 389.5,682.8 399.5,682.8" fill="none" stroke="#5f8f7d" stroke-width="2.6" opacity=".55"/><polyline points="333,687.8 386.3,689.8 388.3,684.5 389.5,682.8 399.5,682.8" fill="none" stroke="#d2ddd8" stroke-width="1.3"/><circle cx="386.3" cy="689.8" r="2.9" fill="#b9b9b9" stroke="#3d3d3d" stroke-width=".8"/><circle cx="388.3" cy="684.5" r="2.9" fill="#b9b9b9" stroke="#3d3d3d" stroke-width=".8"/><polyline points="401,680.1 423.4,681.4 425.6,687.6 427,686.1 441.5,686.1" fill="none" stroke="#5f8f7d" stroke-width="2.6" opacity=".55"/><polyline points="401,680.1 423.4,681.4 425.6,687.6 427,686.1 441.5,686.1" fill="none" stroke="#d2ddd8" stroke-width="1.3"/><circle cx="423.4" cy="681.4" r="2.9" fill="#b9b9b9" stroke="#3d3d3d" stroke-width=".8"/><circle cx="425.6" cy="687.6" r="2.9" fill="#b9b9b9" stroke="#3d3d3d" stroke-width=".8"/><polyline points="442.8,681.1 457.4,681.1" fill="none" stroke="#5f8f7d" stroke-width="2.6" opacity=".55"/><polyline points="442.8,681.1 457.4,681.1" fill="none" stroke="#d2ddd8" stroke-width="1.3"/><polyline points="462.3,685.1 498.9,685.1" fill="none" stroke="#5f8f7d" stroke-width="2.6" opacity=".55"/><polyline points="462.3,685.1 498.9,685.1" fill="none" stroke="#d2ddd8" stroke-width="1.3"/><polyline points="500.8,685.6 523.4,685.6" fill="none" stroke="#5f8f7d" stroke-width="2.6" opacity=".55"/><polyline points="500.8,685.6 523.4,685.6" fill="none" stroke="#d2ddd8" stroke-width="1.3"/><polyline points="525.2,685.6 528.4,685.6" fill="none" stroke="#5f8f7d" stroke-width="2.6" opacity=".55"/><polyline points="525.2,685.6 528.4,685.6" fill="none" stroke="#d2ddd8" stroke-width="1.3"/><polyline points="530.2,685.6 550.4,685.6" fill="none" stroke="#5f8f7d" stroke-width="2.6" opacity=".55"/><polyline points="530.2,685.6 550.4,685.6" fill="none" stroke="#d2ddd8" stroke-width="1.3"/><polyline points="552,688.6 591.9,688.6" fill="none" stroke="#5f8f7d" stroke-width="2.6" opacity=".55"/><polyline points="552,688.6 591.9,688.6" fill="none" stroke="#d2ddd8" stroke-width="1.3"/><polyline points="593.5,686 611.3,687.3 614.5,691.5 630.3,691.5 632.5,687.3 636.5,687" fill="none" stroke="#5f8f7d" stroke-width="2.6" opacity=".55"/><polyline points="593.5,686 611.3,687.3 614.5,691.5 630.3,691.5 632.5,687.3 636.5,687" fill="none" stroke="#d2ddd8" stroke-width="1.3"/><circle cx="611.3" cy="687.3" r="2.9" fill="#b9b9b9" stroke="#3d3d3d" stroke-width=".8"/><circle cx="614.5" cy="691.5" r="2.9" fill="#b9b9b9" stroke="#3d3d3d" stroke-width=".8"/><circle cx="630.3" cy="691.5" r="2.9" fill="#b9b9b9" stroke="#3d3d3d" stroke-width=".8"/><circle cx="632.5" cy="687.3" r="2.9" fill="#b9b9b9" stroke="#3d3d3d" stroke-width=".8"/><polyline points="637.8,686.5 641.7,686.5" fill="none" stroke="#5f8f7d" stroke-width="2.6" opacity=".55"/><polyline points="637.8,686.5 641.7,686.5" fill="none" stroke="#d2ddd8" stroke-width="1.3"/><polyline points="643.3,686 654,686" fill="none" stroke="#5f8f7d" stroke-width="2.6" opacity=".55"/><polyline points="643.3,686 654,686" fill="none" stroke="#d2ddd8" stroke-width="1.3"/><polyline points="655.5,689.8 676.2,689.8 683.4,690.6 696.5,690.6" fill="none" stroke="#5f8f7d" stroke-width="2.6" opacity=".55"/><polyline points="655.5,689.8 676.2,689.8 683.4,690.6 696.5,690.6" fill="none" stroke="#d2ddd8" stroke-width="1.3"/><circle cx="676.2" cy="689.8" r="2.9" fill="#b9b9b9" stroke="#3d3d3d" stroke-width=".8"/><circle cx="683.4" cy="690.6" r="2.9" fill="#b9b9b9" stroke="#3d3d3d" stroke-width=".8"/><circle cx="696.5" cy="690.6" r="2.9" fill="#b9b9b9" stroke="#3d3d3d" stroke-width=".8"/><polyline points="698.4,690.1 750.8,690.1" fill="none" stroke="#5f8f7d" stroke-width="2.6" opacity=".55"/><polyline points="698.4,690.1 750.8,690.1" fill="none" stroke="#d2ddd8" stroke-width="1.3"/><polyline points="752.5,687 772.4,687.3 773.4,691.3 787.3,690.6 794.5,688.1 803,690.5 808,690.5 814.8,692" fill="none" stroke="#5f8f7d" stroke-width="2.6" opacity=".55"/><polyline points="752.5,687 772.4,687.3 773.4,691.3 787.3,690.6 794.5,688.1 803,690.5 808,690.5 814.8,692" fill="none" stroke="#d2ddd8" stroke-width="1.3"/><circle cx="772.4" cy="687.3" r="2.9" fill="#b9b9b9" stroke="#3d3d3d" stroke-width=".8"/><circle cx="773.4" cy="691.3" r="2.9" fill="#b9b9b9" stroke="#3d3d3d" stroke-width=".8"/><circle cx="787.3" cy="690.6" r="2.9" fill="#b9b9b9" stroke="#3d3d3d" stroke-width=".8"/><circle cx="794.5" cy="688.1" r="2.9" fill="#b9b9b9" stroke="#3d3d3d" stroke-width=".8"/><circle cx="815" cy="692" r="2.9" fill="#b9b9b9" stroke="#3d3d3d" stroke-width=".8"/><polyline points="816.5,690.6 819.9,690.6" fill="none" stroke="#5f8f7d" stroke-width="2.6" opacity=".55"/><polyline points="816.5,690.6 819.9,690.6" fill="none" stroke="#d2ddd8" stroke-width="1.3"/><polyline points="821.5,690.1 857.8,690.1" fill="none" stroke="#5f8f7d" stroke-width="2.6" opacity=".55"/><polyline points="821.5,690.1 857.8,690.1" fill="none" stroke="#d2ddd8" stroke-width="1.3"/><polyline points="859.4,684 865.3,684.8 866.3,689.8 870,690.3 884.4,688.6 885.4,692 887,691 908.6,691" fill="none" stroke="#5f8f7d" stroke-width="2.6" opacity=".55"/><polyline points="859.4,684 865.3,684.8 866.3,689.8 870,690.3 884.4,688.6 885.4,692 887,691 908.6,691" fill="none" stroke="#d2ddd8" stroke-width="1.3"/><circle cx="865.3" cy="684.8" r="2.9" fill="#b9b9b9" stroke="#3d3d3d" stroke-width=".8"/><circle cx="866.3" cy="689.8" r="2.9" fill="#b9b9b9" stroke="#3d3d3d" stroke-width=".8"/><circle cx="884.4" cy="688.6" r="2.9" fill="#b9b9b9" stroke="#3d3d3d" stroke-width=".8"/><circle cx="885.4" cy="692" r="2.9" fill="#b9b9b9" stroke="#3d3d3d" stroke-width=".8"/><polyline points="909.6,687.6 914.6,688 927.6,690.6 941.3,691.3 949.2,691.3" fill="none" stroke="#5f8f7d" stroke-width="2.6" opacity=".55"/><polyline points="909.6,687.6 914.6,688 927.6,690.6 941.3,691.3 949.2,691.3" fill="none" stroke="#d2ddd8" stroke-width="1.3"/><circle cx="914.6" cy="688" r="2.9" fill="#b9b9b9" stroke="#3d3d3d" stroke-width=".8"/><circle cx="927.6" cy="690.6" r="2.9" fill="#b9b9b9" stroke="#3d3d3d" stroke-width=".8"/><circle cx="941.3" cy="691.3" r="2.9" fill="#b9b9b9" stroke="#3d3d3d" stroke-width=".8"/><polyline points="950.3,690.6 972.8,690.6" fill="none" stroke="#5f8f7d" stroke-width="2.6" opacity=".55"/><polyline points="950.3,690.6 972.8,690.6" fill="none" stroke="#d2ddd8" stroke-width="1.3"/><polyline points="974.5,690.6 977.4,690.6" fill="none" stroke="#5f8f7d" stroke-width="2.6" opacity=".55"/><polyline points="974.5,690.6 977.4,690.6" fill="none" stroke="#d2ddd8" stroke-width="1.3"/><polyline points="979,686.5 989.6,687.3 997.4,689.6 1015.4,688.5 1034.5,689.5 1049.4,688.6" fill="none" stroke="#5f8f7d" stroke-width="2.6" opacity=".55"/><polyline points="979,686.5 989.6,687.3 997.4,689.6 1015.4,688.5 1034.5,689.5 1049.4,688.6" fill="none" stroke="#d2ddd8" stroke-width="1.3"/><circle cx="989.6" cy="687.3" r="2.9" fill="#b9b9b9" stroke="#3d3d3d" stroke-width=".8"/><circle cx="997.4" cy="689.6" r="2.9" fill="#b9b9b9" stroke="#3d3d3d" stroke-width=".8"/><circle cx="1015.4" cy="688.5" r="2.9" fill="#b9b9b9" stroke="#3d3d3d" stroke-width=".8"/><circle cx="1034.5" cy="689.5" r="2.9" fill="#b9b9b9" stroke="#3d3d3d" stroke-width=".8"/><polyline points="1050.4,688.6 1055,689 1058.4,691.5 1060,690.3 1090.6,690.3" fill="none" stroke="#5f8f7d" stroke-width="2.6" opacity=".55"/><polyline points="1050.4,688.6 1055,689 1058.4,691.5 1060,690.3 1090.6,690.3" fill="none" stroke="#d2ddd8" stroke-width="1.3"/><circle cx="1055" cy="689" r="2.9" fill="#b9b9b9" stroke="#3d3d3d" stroke-width=".8"/><circle cx="1058.4" cy="691.5" r="2.9" fill="#b9b9b9" stroke="#3d3d3d" stroke-width=".8"/><polyline points="1091.7,685 1094.8,685" fill="none" stroke="#5f8f7d" stroke-width="2.6" opacity=".55"/><polyline points="1091.7,685 1094.8,685" fill="none" stroke="#d2ddd8" stroke-width="1.3"/><polyline points="1096.4,686.5 1110.5,687.3 1124.5,688.5 1134.6,688.5" fill="none" stroke="#5f8f7d" stroke-width="2.6" opacity=".55"/><polyline points="1096.4,686.5 1110.5,687.3 1124.5,688.5 1134.6,688.5" fill="none" stroke="#d2ddd8" stroke-width="1.3"/><circle cx="1110.5" cy="687.3" r="2.9" fill="#b9b9b9" stroke="#3d3d3d" stroke-width=".8"/><circle cx="1124.5" cy="688.5" r="2.9" fill="#b9b9b9" stroke="#3d3d3d" stroke-width=".8"/><polyline points="1135.6,686.2 1142.4,686.5 1148.4,687 1150.5,690.5 1155.5,689.6 1162.5,689.6" fill="none" stroke="#5f8f7d" stroke-width="2.6" opacity=".55"/><polyline points="1135.6,686.2 1142.4,686.5 1148.4,687 1150.5,690.5 1155.5,689.6 1162.5,689.6" fill="none" stroke="#d2ddd8" stroke-width="1.3"/><circle cx="1142.4" cy="686.5" r="2.9" fill="#b9b9b9" stroke="#3d3d3d" stroke-width=".8"/><circle cx="1148.4" cy="687" r="2.9" fill="#b9b9b9" stroke="#3d3d3d" stroke-width=".8"/><circle cx="1150.5" cy="690.5" r="2.9" fill="#b9b9b9" stroke="#3d3d3d" stroke-width=".8"/><circle cx="1155.5" cy="689.6" r="2.9" fill="#b9b9b9" stroke="#3d3d3d" stroke-width=".8"/><polyline points="1163.6,686.8 1174.4,687.3 1179.5,689.6 1181,688 1258.8,688" fill="none" stroke="#5f8f7d" stroke-width="2.6" opacity=".55"/><polyline points="1163.6,686.8 1174.4,687.3 1179.5,689.6 1181,688 1258.8,688" fill="none" stroke="#d2ddd8" stroke-width="1.3"/><circle cx="1174.4" cy="687.3" r="2.9" fill="#b9b9b9" stroke="#3d3d3d" stroke-width=".8"/><circle cx="1179.5" cy="689.6" r="2.9" fill="#b9b9b9" stroke="#3d3d3d" stroke-width=".8"/><polyline points="1260,685 1271.5,686 1272.5,689.5 1274,688 1366.4,688" fill="none" stroke="#5f8f7d" stroke-width="2.6" opacity=".55"/><polyline points="1260,685 1271.5,686 1272.5,689.5 1274,688 1366.4,688" fill="none" stroke="#d2ddd8" stroke-width="1.3"/><circle cx="1271.5" cy="686" r="2.9" fill="#b9b9b9" stroke="#3d3d3d" stroke-width=".8"/><circle cx="1272.5" cy="689.5" r="2.9" fill="#b9b9b9" stroke="#3d3d3d" stroke-width=".8"/><polyline points="1367.5,687.3 1419.8,687.3" fill="none" stroke="#5f8f7d" stroke-width="2.6" opacity=".55"/><polyline points="1367.5,687.3 1419.8,687.3" fill="none" stroke="#d2ddd8" stroke-width="1.3"/><polyline points="1421.4,687.3 1426,687.3" fill="none" stroke="#5f8f7d" stroke-width="2.6" opacity=".55"/><polyline points="1421.4,687.3 1426,687.3" fill="none" stroke="#d2ddd8" stroke-width="1.3"/><polyline points="1427.6,683.5 1446.5,685 1447.5,688 1449,686 1481.6,686" fill="none" stroke="#5f8f7d" stroke-width="2.6" opacity=".55"/><polyline points="1427.6,683.5 1446.5,685 1447.5,688 1449,686 1481.6,686" fill="none" stroke="#d2ddd8" stroke-width="1.3"/><circle cx="1446.5" cy="685" r="2.9" fill="#b9b9b9" stroke="#3d3d3d" stroke-width=".8"/><circle cx="1447.5" cy="688" r="2.9" fill="#b9b9b9" stroke="#3d3d3d" stroke-width=".8"/><polyline points="1482.7,684.5 1544,684.5" fill="none" stroke="#5f8f7d" stroke-width="2.6" opacity=".55"/><polyline points="1482.7,684.5 1544,684.5" fill="none" stroke="#d2ddd8" stroke-width="1.3"/><polyline points="1545.7,685.3 1587.8,685.3" fill="none" stroke="#5f8f7d" stroke-width="2.6" opacity=".55"/><polyline points="1545.7,685.3 1587.8,685.3" fill="none" stroke="#d2ddd8" stroke-width="1.3"/><polyline points="1589.5,686 1686.8,686" fill="none" stroke="#5f8f7d" stroke-width="2.6" opacity=".55"/><polyline points="1589.5,686 1686.8,686" fill="none" stroke="#d2ddd8" stroke-width="1.3"/><polyline points="1688.5,668.4 1695.2,669.5 1697.5,688.3 1707.5,690.6 1715.5,688.3 1716.4,670.5 1721.5,669" fill="none" stroke="#5f8f7d" stroke-width="2.6" opacity=".55"/><polyline points="1688.5,668.4 1695.2,669.5 1697.5,688.3 1707.5,690.6 1715.5,688.3 1716.4,670.5 1721.5,669" fill="none" stroke="#d2ddd8" stroke-width="1.3"/><circle cx="1695.2" cy="669.5" r="2.9" fill="#b9b9b9" stroke="#3d3d3d" stroke-width=".8"/><circle cx="1697.5" cy="688.3" r="2.9" fill="#b9b9b9" stroke="#3d3d3d" stroke-width=".8"/><circle cx="1715.5" cy="688.3" r="2.9" fill="#b9b9b9" stroke="#3d3d3d" stroke-width=".8"/><circle cx="1716.4" cy="670.5" r="2.9" fill="#b9b9b9" stroke="#3d3d3d" stroke-width=".8"/><polyline points="1722.7,684 1862,684" fill="none" stroke="#5f8f7d" stroke-width="2.6" opacity=".55"/><polyline points="1722.7,684 1862,684" fill="none" stroke="#d2ddd8" stroke-width="1.3"/><rect x="238.3" y="635" width="0.8" height="66" fill="#2c5a48"/><rect x="239.1" y="635" width="0.8" height="66" fill="#8f8a92"/><rect x="243.3" y="635" width="0.8" height="66" fill="#2c5a48"/><rect x="244.1" y="635" width="0.8" height="66" fill="#8f8a92"/><rect x="249.5" y="635" width="0.8" height="66" fill="#2c5a48"/><rect x="250.3" y="635" width="0.8" height="66" fill="#8f8a92"/><rect x="288.7" y="635" width="0.8" height="66" fill="#2c5a48"/><rect x="289.5" y="635" width="0.8" height="66" fill="#8f8a92"/><rect x="331.8" y="635" width="0.8" height="66" fill="#2c5a48"/><rect x="332.6" y="635" width="0.8" height="66" fill="#8f8a92"/><rect x="399.3" y="635" width="0.8" height="66" fill="#2c5a48"/><rect x="400.1" y="635" width="0.8" height="66" fill="#8f8a92"/><rect x="441.3" y="635" width="0.8" height="66" fill="#2c5a48"/><rect x="442.1" y="635" width="0.8" height="66" fill="#8f8a92"/><rect x="457.4" y="635" width="0.8" height="66" fill="#2c5a48"/><rect x="458.2" y="635" width="0.8" height="66" fill="#8f8a92"/><rect x="460.8" y="635" width="0.8" height="66" fill="#2c5a48"/><rect x="461.6" y="635" width="0.8" height="66" fill="#8f8a92"/><rect x="499.2" y="635" width="0.8" height="66" fill="#2c5a48"/><rect x="500" y="635" width="0.8" height="66" fill="#8f8a92"/><rect x="523.7" y="635" width="0.8" height="66" fill="#2c5a48"/><rect x="524.5" y="635" width="0.8" height="66" fill="#8f8a92"/><rect x="528.7" y="635" width="0.8" height="66" fill="#2c5a48"/><rect x="529.5" y="635" width="0.8" height="66" fill="#8f8a92"/><rect x="550.5" y="635" width="0.8" height="66" fill="#2c5a48"/><rect x="551.3" y="635" width="0.8" height="66" fill="#8f8a92"/><rect x="592" y="635" width="0.8" height="66" fill="#2c5a48"/><rect x="592.8" y="635" width="0.8" height="66" fill="#8f8a92"/><rect x="636.3" y="635" width="0.8" height="66" fill="#2c5a48"/><rect x="637.1" y="635" width="0.8" height="66" fill="#8f8a92"/><rect x="641.8" y="635" width="0.8" height="66" fill="#2c5a48"/><rect x="642.6" y="635" width="0.8" height="66" fill="#8f8a92"/><rect x="654.2" y="635" width="0.8" height="66" fill="#2c5a48"/><rect x="655" y="635" width="0.8" height="66" fill="#8f8a92"/><rect x="696.9" y="635" width="0.8" height="66" fill="#2c5a48"/><rect x="697.7" y="635" width="0.8" height="66" fill="#8f8a92"/><rect x="751" y="635" width="0.8" height="66" fill="#2c5a48"/><rect x="751.8" y="635" width="0.8" height="66" fill="#8f8a92"/><rect x="815" y="635" width="0.8" height="66" fill="#2c5a48"/><rect x="815.8" y="635" width="0.8" height="66" fill="#8f8a92"/><rect x="820" y="635" width="0.8" height="66" fill="#2c5a48"/><rect x="820.8" y="635" width="0.8" height="66" fill="#8f8a92"/><rect x="857.9" y="635" width="0.8" height="66" fill="#2c5a48"/><rect x="858.7" y="635" width="0.8" height="66" fill="#8f8a92"/><rect x="908.2" y="635" width="0.8" height="66" fill="#2c5a48"/><rect x="909" y="635" width="0.8" height="66" fill="#8f8a92"/><rect x="948.8" y="635" width="0.8" height="66" fill="#2c5a48"/><rect x="949.6" y="635" width="0.8" height="66" fill="#8f8a92"/><rect x="973" y="635" width="0.8" height="66" fill="#2c5a48"/><rect x="973.8" y="635" width="0.8" height="66" fill="#8f8a92"/><rect x="977.5" y="635" width="0.8" height="66" fill="#2c5a48"/><rect x="978.3" y="635" width="0.8" height="66" fill="#8f8a92"/><rect x="1049" y="635" width="0.8" height="66" fill="#2c5a48"/><rect x="1049.8" y="635" width="0.8" height="66" fill="#8f8a92"/><rect x="1090.2" y="635" width="0.8" height="66" fill="#2c5a48"/><rect x="1091" y="635" width="0.8" height="66" fill="#8f8a92"/><rect x="1094.9" y="635" width="0.8" height="66" fill="#2c5a48"/><rect x="1095.7" y="635" width="0.8" height="66" fill="#8f8a92"/><rect x="1134.2" y="635" width="0.8" height="66" fill="#2c5a48"/><rect x="1135" y="635" width="0.8" height="66" fill="#8f8a92"/><rect x="1162.1" y="635" width="0.8" height="66" fill="#2c5a48"/><rect x="1162.9" y="635" width="0.8" height="66" fill="#8f8a92"/><rect x="1258.4" y="635" width="0.8" height="66" fill="#2c5a48"/><rect x="1259.2" y="635" width="0.8" height="66" fill="#8f8a92"/><rect x="1366" y="635" width="0.8" height="66" fill="#2c5a48"/><rect x="1366.8" y="635" width="0.8" height="66" fill="#8f8a92"/><rect x="1419.9" y="635" width="0.8" height="66" fill="#2c5a48"/><rect x="1420.7" y="635" width="0.8" height="66" fill="#8f8a92"/><rect x="1426.1" y="635" width="0.8" height="66" fill="#2c5a48"/><rect x="1426.9" y="635" width="0.8" height="66" fill="#8f8a92"/><rect x="1481.2" y="635" width="0.8" height="66" fill="#2c5a48"/><rect x="1482" y="635" width="0.8" height="66" fill="#8f8a92"/><rect x="1544.2" y="635" width="0.8" height="66" fill="#2c5a48"/><rect x="1545" y="635" width="0.8" height="66" fill="#8f8a92"/><rect x="1588" y="635" width="0.8" height="66" fill="#2c5a48"/><rect x="1588.8" y="635" width="0.8" height="66" fill="#8f8a92"/><rect x="1687" y="635" width="0.8" height="66" fill="#2c5a48"/><rect x="1687.8" y="635" width="0.8" height="66" fill="#8f8a92"/><rect x="1721.2" y="635" width="0.8" height="66" fill="#2c5a48"/><rect x="1722" y="635" width="0.8" height="66" fill="#8f8a92"/><path d="M236 635H240.5L236 639.5Z" fill="#e8e8e8"/><path d="M978.6 635H983.2L978.6 639.6Z" fill="#e8e8e8"/></svg>
<div class="fx" style="left:259px;top:482px;background:#a98be0;border-color:#b9a0c8"><span>fx</span></div>
<div class="cl" style="left:279px;top:481px;width:177px">仙一<i>_2.jpg</i></div>
<div class="fx" style="left:472px;top:482px;background:#6e6e6e;border-color:#9f959f"><span>fx</span></div>
<div class="fx" style="left:539px;top:482px;background:#6e6e6e;border-color:#9f959f"><span>fx</span></div>
<div class="cl" style="left:559px;top:481px;width:77px">仙三<i>.jpg</i></div>
<div class="fx" style="left:652px;top:482px;background:#6e6e6e;border-color:#9f959f"><span>fx</span></div>
<div class="cl" style="left:672px;top:481px;width:143px">仙三外<i>.jpg</i></div>
<div class="fx" style="left:830px;top:482px;background:#6e6e6e;border-color:#9f959f"><span>fx</span></div>
<div class="cl" style="left:850px;top:481px;width:123px">仙四<i>.jpg</i></div>
<div class="fx" style="left:988px;top:482px;background:#f5c70f;border-color:#c9a85f"><span>fx</span></div>
<div class="cl" style="left:1008px;top:481px;width:82px">观云山峰<i>.jpg</i></div>
<div class="fx" style="left:1105px;top:482px;background:#6e6e6e;border-color:#9f959f"><span>fx</span></div>
<div class="cl" style="left:1125px;top:481px;width:295px">仙五背景处理<i>.jpg</i></div>
<div class="fx" style="left:1436px;top:482px;background:#6e6e6e;border-color:#9f959f"><span>fx</span></div>
<div class="cl" style="left:1456px;top:481px;width:232px">仙六<i>.jpg</i></div>
<div class="fx" style="left:1732px;top:482px;background:#f5c70f;border-color:#c9a85f"><span>fx</span></div>
<div class="cl" style="left:1751px;top:481px;width:112px">新仙剑投票页面背景<i>_c</i></div>
<div class="fx" style="left:303px;top:448px;background:#f5c70f;border-color:#c9a85f"><span>fx</span></div>
<div class="fx" style="left:540px;top:390px;background:#16a116;border-color:#86b886"><span>fx</span></div>
<div class="cl" style="left:560px;top:389px;width:76px">调色</div>
<div class="fx" style="left:652px;top:390px;background:#16a116;border-color:#86b886"><span>fx</span></div>
<div class="cl" style="left:672px;top:389px;width:32px">调色</div>
<div class="fx" style="left:730px;top:390px;background:#16a116;border-color:#86b886"><span>fx</span></div>
<div class="cl" style="left:750px;top:389px;width:65px">调色</div>
<div class="fx" style="left:854px;top:390px;background:#16a116;border-color:#86b886"><span>fx</span></div>
<div class="cl" style="left:874px;top:389px;width:26px">调色</div>
<div class="fx" style="left:914px;top:390px;background:#16a116;border-color:#86b886"><span>fx</span></div>
<div class="cl" style="left:934px;top:389px;width:39px">调色</div>
<div class="fx" style="left:988px;top:390px;background:#16a116;border-color:#86b886"><span>fx</span></div>
<div class="cl" style="left:1008px;top:389px;width:82px">调色</div>
<div class="fx" style="left:1209px;top:390px;background:#16a116;border-color:#86b886"><span>fx</span></div>
<div class="fx" style="left:1238px;top:390px;background:#16a116;border-color:#86b886"><span>fx</span></div>
<div class="fx" style="left:1274px;top:390px;background:#16a116;border-color:#86b886"><span>fx</span></div>
<div class="cl" style="left:1294px;top:389px;width:38px">调色</div>
<div class="fx" style="left:1342px;top:390px;background:#16a116;border-color:#86b886"><span>fx</span></div>
<div class="cl" style="left:1362px;top:389px;width:55px">调色</div>
<div class="fx" style="left:1436px;top:390px;background:#16a116;border-color:#86b886"><span>fx</span></div>
<div class="fx" style="left:1481px;top:390px;background:#16a116;border-color:#86b886"><span>fx</span></div>
<div class="cl" style="left:1501px;top:389px;width:187px">调色</div>
<div class="fx" style="left:260px;top:365px;background:#16a116;border-color:#86b886"><span>fx</span></div>
<div class="cl" style="left:280px;top:364px;width:177px">调色</div>
<div class="fx" style="left:472px;top:365px;background:#16a116;border-color:#86b886"><span>fx</span></div>
<div class="cl" style="left:492px;top:364px;width:31px">调色</div>
<div class="fx" style="left:540px;top:365px;background:#6e6e6e;border-color:#9f959f"><span>fx</span></div>
<div class="cl" style="left:560px;top:364px;width:76px">仙三<i>.png</i></div>
<div class="fx" style="left:652px;top:365px;background:#6e6e6e;border-color:#9f959f"><span>fx</span></div>
<div class="cl" style="left:672px;top:364px;width:143px">仙三外<i>.png</i></div>
<div class="fx" style="left:830px;top:365px;background:#6e6e6e;border-color:#9f959f"><span>fx</span></div>
<div class="cl" style="left:850px;top:364px;width:123px">仙四<i>.png</i></div>
<div class="fx" style="left:988px;top:365px;background:#6e6e6e;border-color:#9f959f"><span>fx</span></div>
<div class="cl" style="left:1008px;top:364px;width:82px">仙五前<i>.png</i></div>
<div class="fx" style="left:1105px;top:365px;background:#6e6e6e;border-color:#9f959f"><span>fx</span></div>
<div class="cl" style="left:1125px;top:364px;width:295px">仙五<i>.png</i></div>
<div class="fx" style="left:1436px;top:365px;background:#6e6e6e;border-color:#9f959f"><span>fx</span></div>
<div class="cl" style="left:1456px;top:364px;width:232px">仙六<i>.png</i></div>
<div class="fx" style="left:1731px;top:365px;background:#f5c70f;border-color:#c9a85f"><span>fx</span></div>
<div class="cl" style="left:1751px;top:364px;width:107px">新仙剑投票页面背景<i>_</i></div>
<div class="fx" style="left:260px;top:340px;background:#6e6e6e;border-color:#9f959f"><span>fx</span></div>
<div class="cl" style="left:280px;top:339px;width:176px">仙一<i>.png</i></div>
<div class="fx" style="left:1732px;top:340px;background:#f5c70f;border-color:#c9a85f"><span>fx</span></div>
<div class="cl" style="left:1752px;top:339px;width:106px">简体片尾<i>.png</i></div>
<div class="fx" style="left:1732px;top:315px;background:#f5c70f;border-color:#c9a85f"><span>fx</span></div>
<div class="cl" style="left:1752px;top:314px;width:106px">新仙剑投票页面背景<i>_</i></div>
<div class="fx" style="left:1732px;top:290px;background:#f5c70f;border-color:#c9a85f"><span>fx</span></div>
<div class="cl" style="left:1752px;top:289px;width:106px">新仙剑投票页面背景<i>_</i></div>
<div class="fx" style="left:1732px;top:265px;background:#16a116;border-color:#86b886"><span>fx</span></div>
<div class="cl" style="left:1751px;top:264px;width:107px">新仙剑投票页面背景<i>_</i></div>
<div class="lr" style="left:254px;top:652px">L</div>
<div class="lr" style="left:254px;top:686px">R</div>
<div class="fx" style="left:260px;top:638px;background:#f5c70f;border-color:#9fb27a"><span>fx</span></div>
<div class="lr" style="left:294px;top:652px">L</div>
<div class="lr" style="left:294px;top:686px">R</div>
<div class="fx" style="left:299px;top:638px;background:#f5c70f;border-color:#9fb27a"><span>fx</span></div>
<div class="lr" style="left:337px;top:652px">L</div>
<div class="lr" style="left:337px;top:686px">R</div>
<div class="fx" style="left:342px;top:638px;background:#f5c70f;border-color:#9fb27a"><span>fx</span></div>
<div class="lr" style="left:404px;top:652px">L</div>
<div class="lr" style="left:404px;top:686px">R</div>
<div class="fx" style="left:410px;top:638px;background:#f5c70f;border-color:#9fb27a"><span>fx</span></div>
<div class="lr" style="left:446px;top:652px">L</div>
<div class="lr" style="left:446px;top:686px">R</div>
<div class="lr" style="left:466px;top:652px">L</div>
<div class="lr" style="left:466px;top:686px">R</div>
<div class="fx" style="left:472px;top:638px;background:#f5c70f;border-color:#9fb27a"><span>fx</span></div>
<div class="lr" style="left:504px;top:652px">L</div>
<div class="lr" style="left:504px;top:686px">R</div>
<div class="lr" style="left:534px;top:652px">L</div>
<div class="lr" style="left:534px;top:686px">R</div>
<div class="lr" style="left:555px;top:652px">L</div>
<div class="lr" style="left:555px;top:686px">R</div>
<div class="fx" style="left:561px;top:638px;background:#f5c70f;border-color:#9fb27a"><span>fx</span></div>
<div class="lr" style="left:597px;top:652px">L</div>
<div class="lr" style="left:597px;top:686px">R</div>
<div class="fx" style="left:603px;top:638px;background:#f5c70f;border-color:#9fb27a"><span>fx</span></div>
<div class="lr" style="left:659px;top:652px">L</div>
<div class="lr" style="left:659px;top:686px">R</div>
<div class="fx" style="left:665px;top:638px;background:#f5c70f;border-color:#9fb27a"><span>fx</span></div>
<div class="lr" style="left:702px;top:652px">L</div>
<div class="lr" style="left:702px;top:686px">R</div>
<div class="fx" style="left:708px;top:638px;background:#f5c70f;border-color:#9fb27a"><span>fx</span></div>
<div class="lr" style="left:756px;top:652px">L</div>
<div class="lr" style="left:756px;top:686px">R</div>
<div class="fx" style="left:762px;top:638px;background:#f5c70f;border-color:#9fb27a"><span>fx</span></div>
<div class="lr" style="left:825px;top:652px">L</div>
<div class="lr" style="left:825px;top:686px">R</div>
<div class="fx" style="left:831px;top:638px;background:#f5c70f;border-color:#9fb27a"><span>fx</span></div>
<div class="lr" style="left:863px;top:652px">L</div>
<div class="lr" style="left:863px;top:686px">R</div>
<div class="fx" style="left:869px;top:638px;background:#f5c70f;border-color:#9fb27a"><span>fx</span></div>
<div class="lr" style="left:913px;top:652px">L</div>
<div class="lr" style="left:913px;top:686px">R</div>
<div class="fx" style="left:919px;top:638px;background:#f5c70f;border-color:#9fb27a"><span>fx</span></div>
<div class="lr" style="left:954px;top:652px">L</div>
<div class="lr" style="left:954px;top:686px">R</div>
<div class="lr" style="left:982px;top:652px">L</div>
<div class="lr" style="left:982px;top:686px">R</div>
<div class="fx" style="left:988px;top:638px;background:#f5c70f;border-color:#9fb27a"><span>fx</span></div>
<div class="lr" style="left:1054px;top:652px">L</div>
<div class="lr" style="left:1054px;top:686px">R</div>
<div class="fx" style="left:1060px;top:638px;background:#f5c70f;border-color:#9fb27a"><span>fx</span></div>
<div class="lr" style="left:1100px;top:652px">L</div>
<div class="lr" style="left:1100px;top:686px">R</div>
<div class="fx" style="left:1106px;top:638px;background:#f5c70f;border-color:#9fb27a"><span>fx</span></div>
<div class="lr" style="left:1139px;top:652px">L</div>
<div class="lr" style="left:1139px;top:686px">R</div>
<div class="fx" style="left:1145px;top:638px;background:#f5c70f;border-color:#9fb27a"><span>fx</span></div>
<div class="lr" style="left:1167px;top:652px">L</div>
<div class="lr" style="left:1167px;top:686px">R</div>
<div class="fx" style="left:1173px;top:638px;background:#f5c70f;border-color:#9fb27a"><span>fx</span></div>
<div class="lr" style="left:1263px;top:652px">L</div>
<div class="lr" style="left:1263px;top:686px">R</div>
<div class="fx" style="left:1269px;top:638px;background:#f5c70f;border-color:#9fb27a"><span>fx</span></div>
<div class="lr" style="left:1371px;top:652px">L</div>
<div class="lr" style="left:1371px;top:686px">R</div>
<div class="fx" style="left:1377px;top:638px;background:#f5c70f;border-color:#9fb27a"><span>fx</span></div>
<div class="lr" style="left:1431px;top:652px">L</div>
<div class="lr" style="left:1431px;top:686px">R</div>
<div class="fx" style="left:1437px;top:638px;background:#f5c70f;border-color:#9fb27a"><span>fx</span></div>
<div class="lr" style="left:1486px;top:652px">L</div>
<div class="lr" style="left:1486px;top:686px">R</div>
<div class="fx" style="left:1492px;top:638px;background:#f5c70f;border-color:#9fb27a"><span>fx</span></div>
<div class="lr" style="left:1549px;top:652px">L</div>
<div class="lr" style="left:1549px;top:686px">R</div>
<div class="fx" style="left:1555px;top:638px;background:#f5c70f;border-color:#9fb27a"><span>fx</span></div>
<div class="lr" style="left:1593px;top:652px">L</div>
<div class="lr" style="left:1593px;top:686px">R</div>
<div class="fx" style="left:1599px;top:638px;background:#f5c70f;border-color:#9fb27a"><span>fx</span></div>
<div class="lr" style="left:1692px;top:652px">L</div>
<div class="lr" style="left:1692px;top:686px">R</div>
<div class="fx" style="left:1698px;top:638px;background:#f5c70f;border-color:#9fb27a"><span>fx</span></div>
<div class="lr" style="left:1726px;top:652px">L</div>
<div class="lr" style="left:1726px;top:686px">R</div>
<div class="fx" style="left:1732px;top:638px;background:#f5c70f;border-color:#9fb27a"><span>fx</span></div>
<div style="left:1894px;top:61px;width:10px;height:449px;background:#2a2a2a;border-radius:5px 5px 0 0"></div>
<div style="left:1894px;top:78px;width:10px;height:432px;background:#333333;"></div>
<div style="left:1894px;top:516px;width:10px;height:362px;background:#2a2a2a;border-radius:0 0 5px 5px"></div>
<div style="left:1894px;top:516px;width:10px;height:325px;background:#333333;"></div>
<div style="left:1894px;top:72px;width:10px;height:10px;border:2px solid #b4b4b4;border-radius:50%;background:#262626"></div>
<div style="left:1894px;top:500px;width:10px;height:10px;border:2px solid #b4b4b4;border-radius:50%;background:#262626"></div>
<div style="left:1894px;top:517px;width:10px;height:10px;border:2px solid #b4b4b4;border-radius:50%;background:#262626"></div>
<div style="left:1894px;top:836px;width:10px;height:10px;border:2px solid #b4b4b4;border-radius:50%;background:#262626"></div>
<div style="left:12px;top:879px;width:1881px;height:11px;background:#2a2a2a;border-radius:6px"></div>
<div style="left:18px;top:879px;width:1682px;height:11px;background:#333333;"></div>
<div style="left:13px;top:879px;width:10px;height:10px;border:2px solid #b4b4b4;border-radius:50%;background:#262626"></div>
<div style="left:1695px;top:879px;width:10px;height:10px;border:2px solid #b4b4b4;border-radius:50%;background:#262626"></div>
<div style="left:1860px;top:43px;width:1.4px;height:835px;background:#2d8ceb;"></div>
<svg style="left:1855px;top:31px" width="12" height="13" viewBox="0 0 12 13"><path d="M0 0H11.4V7.5L5.7 12.5L0 7.5Z" fill="#2d8ceb"/></svg>
</div></body></html>
